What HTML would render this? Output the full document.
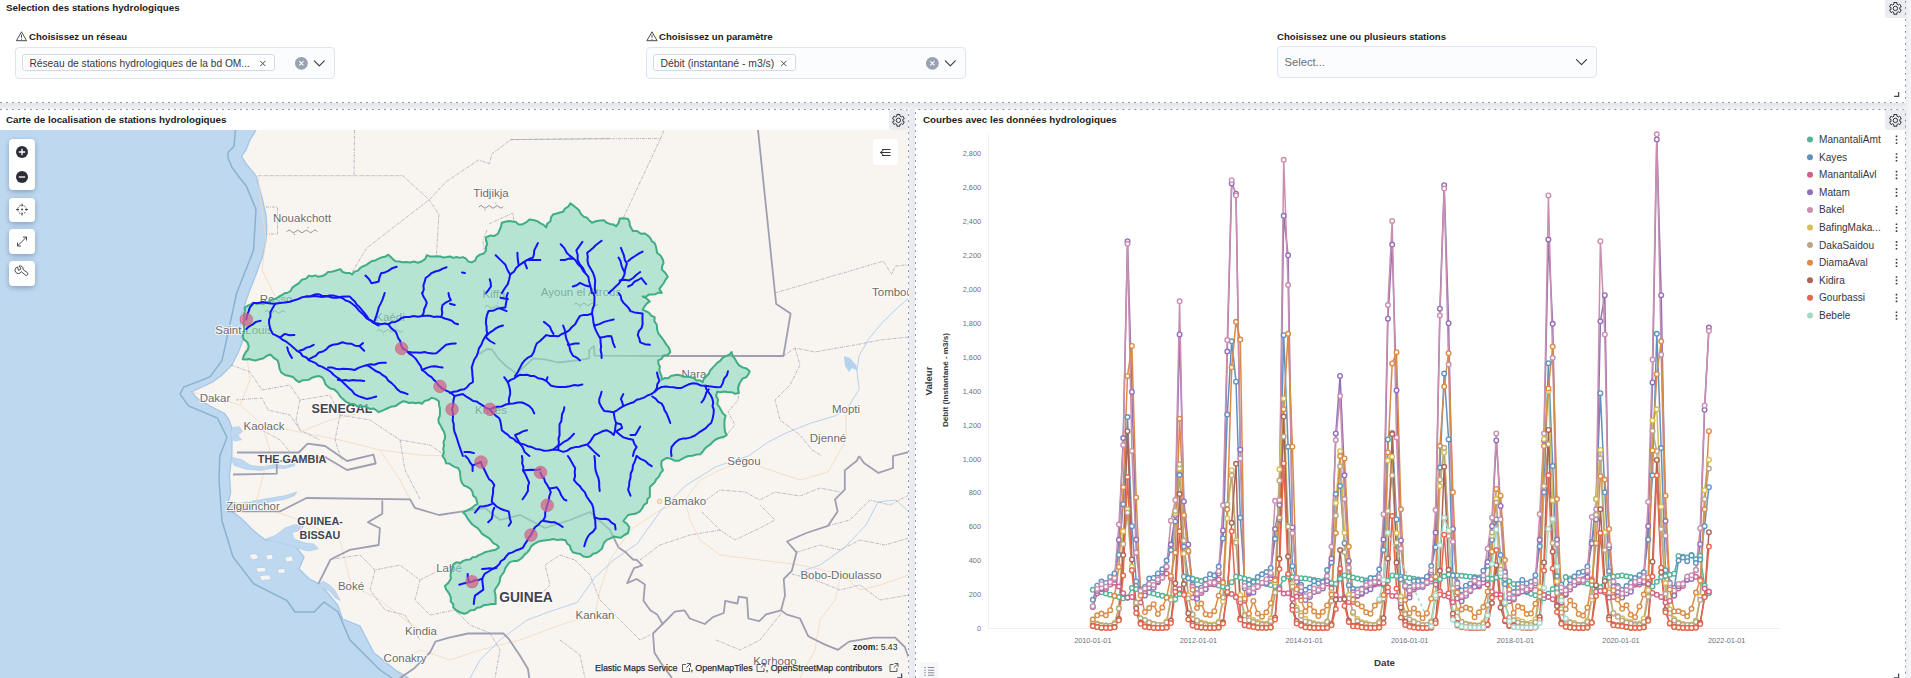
<!DOCTYPE html><html><head><meta charset="utf-8"><title>Dashboard</title><style>
html,body{margin:0;padding:0}
body{width:1911px;height:678px;overflow:hidden;background:#fff;position:relative;font-family:"Liberation Sans", sans-serif;color:#1a1c21}
.abs{position:absolute;white-space:nowrap}
.ttl{font-weight:700;font-size:9.8px;line-height:12px;color:#1a1c21}
.lbl{font-weight:700;font-size:9.6px;line-height:12px;color:#1a1c21}
.combo{position:absolute;box-sizing:border-box;height:32px;width:320px;border:1px solid #dfe4ee;border-radius:4px;background:#fbfcfd}
.pill{position:absolute;box-sizing:border-box;top:6px;left:5.5px;height:17px;border:1px solid #d3dae6;border-radius:3px;background:#fff;font-size:10.2px;line-height:15px;padding-top:0.9px;padding-left:7px;color:#343741}
.hd{position:absolute;border:0}
svg{position:absolute;left:0;top:0;overflow:visible}
.btn{position:absolute;background:#fff;border-radius:4px;box-shadow:0 1px 5px rgba(40,60,100,.22),0 3px 6px -2px rgba(40,60,100,.28)}
.gear{position:absolute;background:#eaecf0;border-radius:0 0 0 3px}
.leg{position:absolute;margin-top:0.5px;left:1819px;font-size:10.1px;line-height:12px;color:#343741;white-space:nowrap}
.tick{position:absolute;font-size:7.3px;line-height:9px;color:#69707d;white-space:nowrap}
</style></head><body>
<div class="abs" style="left:0;top:103px;width:1911px;height:6px;background:linear-gradient(#e2e4e8,#f0f1f4)"></div>
<div class="abs" style="left:909px;top:109px;width:6px;height:569px;background:#e9ebef"></div>
<div class="abs" style="left:1906px;top:0;width:5px;height:678px;background:linear-gradient(90deg,#eceef1,#f6f7f9)"></div>
<div class="abs ttl" style="left:6px;top:1.7px">Selection des stations hydrologiques</div>
<div class="abs lbl" style="left:29px;top:30.7px">Choisissez un réseau</div>
<div class="abs lbl" style="left:659px;top:30.7px">Choisissez un paramètre</div>
<div class="abs lbl" style="left:1277px;top:30.7px">Choisissez une ou plusieurs stations</div>
<div class="combo" style="left:15px;top:47px"><div class="pill" style="width:253px">Réseau de stations hydrologiques de la bd OM...</div></div>
<div class="combo" style="left:646px;top:47px"><div class="pill" style="width:143px;font-size:10.4px">Débit (instantané - m3/s)</div></div>
<div class="combo" style="left:1277px;top:46px;height:32px"><div class="abs" style="left:6.5px;top:8.8px;font-size:11.2px;line-height:13px;color:#69707d">Select...</div></div>
<div class="gear" style="left:1885px;top:0;width:20.5px;height:17.7px"></div>
<div class="abs ttl" style="left:6px;top:113.7px">Carte de localisation de stations hydrologiques</div>
<div class="gear" style="left:889px;top:110px;width:19px;height:20px"></div>
<div class="abs" style="left:0;top:130px;width:908px;height:548px;background:#bed8f0;overflow:hidden">
<svg width="909" height="548" viewBox="0 130 909 548">
<polyline points="235.4,130 234,146.4 228,152.3 228,157.5 231.7,167 239.8,178 246.3,186 256,209.4 253.5,250.4 236.7,293 222,360.4 210,377 183.7,387 180,394 188.5,406 217.4,418 227,437.4 219.8,456 219,480 222,521 233,557 253.5,583.6 287,600.5 295,612 314,612 324,602 338,612 350,640 380,670 392,678" fill="none" stroke="#8ab2cf" stroke-width="1.5"/>
<polygon points="256,130 250,140 246,150 241.5,156.5 247,165 256,175.7 260,190 263,202 266,215 266.8,226.3 266,240 263,255 256,274.5 248.7,293 246.3,300 243,310 240.3,317 241,330 242.7,341 238,353 231.8,365.2 222,375 212.6,382 200,388 192,391.7 195,396 198,399 210,406 224.6,413.4 229,420 231.8,427.8 232,442 231.8,456 229.4,475.3 230.6,492 227,507.8 241.5,518.6 253.5,530.6 265.6,540.3 280,537.8 294.4,545 304,557 299,569 309,578.8 318.5,583.6 328,593.2 337.8,605.3 342.6,619 360,626 373.5,652.4 395.4,670 408.6,678 909,678 909,130" fill="#f8f4f0"/>
<polyline points="256,130 250,140 246,150 241.5,156.5 247,165 256,175.7 260,190 263,202 266,215 266.8,226.3 266,240 263,255 256,274.5 248.7,293 246.3,300 243,310 240.3,317 241,330 242.7,341 238,353 231.8,365.2 222,375 212.6,382 200,388 192,391.7 195,396 198,399 210,406 224.6,413.4 229,420 231.8,427.8 232,442 231.8,456 229.4,475.3 230.6,492 227,507.8 241.5,518.6 253.5,530.6 265.6,540.3 280,537.8 294.4,545 304,557 299,569 309,578.8 318.5,583.6 328,593.2 337.8,605.3 342.6,619 360,626 373.5,652.4 395.4,670 408.6,678" fill="none" stroke="#a3c6e8" stroke-width="1.3"/>
<polygon points="230.6,457.2 241.5,459.6 251.1,465.6 263.1,466.8 275.2,464.4 284.8,466.1 294.4,463.2 294.9,465.6 284.8,468.5 274.0,468.0 260.7,470.4 246.3,469.2 234.2,465.6" fill="#bed8f0" stroke="#a9c9e6" stroke-width="0.6"/>
<polygon points="228.2,504.1 241.5,502.9 255.9,500.5 270.4,498.1 284.8,495.7 296.8,492.1 294.4,495.7 284.8,499.3 270.4,501.7 255.9,505.3 241.5,510.2 230.6,510.2" fill="#bed8f0" stroke="#a9c9e6" stroke-width="0.6"/>
<polygon points="265.5,539.0 275.2,535.4 284.8,528.2 294.4,524.6 304.1,525.8 299.2,530.6 292.0,533.0 294.4,539.0 304.1,542.7 313.7,543.9 318.5,548.7 308.9,551.1 299.2,548.7 289.6,545.1 280.0,542.7" fill="#bed8f0" stroke="#a9c9e6" stroke-width="0.6"/>
<polygon points="316.1,586.0 323.3,581.2 329.3,584.8 335.3,590.8 340.2,600.4 335.3,598.0 329.3,590.8 322.1,588.4" fill="#bed8f0" stroke="#a9c9e6" stroke-width="0.6"/>
<polygon points="231.8,427.8 239.1,426.6 242.7,431.4 237.9,435.0 241.5,439.8 234.2,441.0 230.6,435.0" fill="#bed8f0" stroke="#a9c9e6" stroke-width="0.6"/>
<polygon points="248.7,554.7 255.9,553.5 258.8,558.3 252.3,560.0" fill="#f8f4f0" stroke="#a9c9e6" stroke-width="0.6"/>
<polygon points="265.5,555.2 272.3,554.2 273.2,559.0 267.5,560.0" fill="#f8f4f0" stroke="#a9c9e6" stroke-width="0.6"/>
<polygon points="255.9,567.9 265.1,567.2 266.0,571.5 257.8,572.5" fill="#f8f4f0" stroke="#a9c9e6" stroke-width="0.6"/>
<polygon points="259.5,575.6 269.9,574.9 270.8,579.7 261.2,580.4" fill="#f8f4f0" stroke="#a9c9e6" stroke-width="0.6"/>
<polygon points="277.6,569.1 284.8,568.7 285.3,573.0 278.5,573.5" fill="#f8f4f0" stroke="#a9c9e6" stroke-width="0.6"/>
<polygon points="284.8,557.1 292.0,555.9 293.5,561.0 286.2,561.9" fill="#f8f4f0" stroke="#a9c9e6" stroke-width="0.6"/>
<polyline points="192,392 215,398 240,405 262,424 300,432 340,440 380,450 420,455 446,456" fill="none" stroke="#f3d9bd" stroke-width="0.8"/>
<polyline points="240,405 250,380 246,350 248,322" fill="none" stroke="#f3d9bd" stroke-width="0.8"/>
<polyline points="262,424 270,450 262,480 255,505" fill="none" stroke="#f3d9bd" stroke-width="0.8"/>
<polyline points="300,432 330,420 373,410" fill="none" stroke="#f3d9bd" stroke-width="0.8"/>
<polyline points="380,450 400,480 410,499" fill="none" stroke="#f3d9bd" stroke-width="0.8"/>
<polyline points="685,500 700,480 720,470 744,461 770,470 800,480 828,472 846,440 846,408" fill="none" stroke="#f3d9bd" stroke-width="0.8"/>
<polyline points="685,500 690,520 700,540 720,555 760,560 800,565 841,574" fill="none" stroke="#f3d9bd" stroke-width="0.8"/>
<polyline points="685,500 660,510 630,530 610,560 600,590 595,614" fill="none" stroke="#f3d9bd" stroke-width="0.8"/>
<polyline points="841,574 860,590 880,585 909,575" fill="none" stroke="#f3d9bd" stroke-width="0.8"/>
<polyline points="841,574 835,600 820,620 815,650 800,678" fill="none" stroke="#f3d9bd" stroke-width="0.8"/>
<polyline points="595,614 560,625 520,640 480,650 450,660 421,650 405,657" fill="none" stroke="#f3d9bd" stroke-width="0.8"/>
<polyline points="351,585 380,600 405,620 421,630" fill="none" stroke="#f3d9bd" stroke-width="0.8"/>
<polyline points="255,505 300,520 340,540 351,585" fill="none" stroke="#f3d9bd" stroke-width="0.8"/>
<polyline points="258,176 262,210 266,240 262,270 276,298" fill="none" stroke="#f3d9bd" stroke-width="0.8"/>
<polyline points="909,297.8 895.3,309.9 880.9,324.3 868.9,338.7 859.2,355.6 856.8,370 859.2,389.3 847.2,408.6 835.2,415.8 811.1,423 787,432.6 767.8,442.3 748.5,456" fill="none" stroke="#b5d3f0" stroke-width="1"/>
<polyline points="748.5,456 716.2,466.6 685.4,485.8 661.3,509.9 637.3,543.6 613.2,560.4 594,578.5 577.1,602.5 548.2,612.2 527,620" fill="none" stroke="#b5d3f0" stroke-width="1"/>
<polyline points="909,512 896,500 878,502 866,525 844,548 820,565 800,572" fill="none" stroke="#b5d3f0" stroke-width="1"/>
<polyline points="527,620 500,640 480,660 470,678" fill="none" stroke="#b5d3f0" stroke-width="1"/>
<polygon points="844,356 850,358 856,365 858,371 852,368 849,372 845,366" fill="#b5d3f0"/>
<polyline points="258.3,175.7 402.8,175.7 429.2,199.8 438.9,214.3 436.5,255.2" fill="none" stroke="#a9a9b8" stroke-width="0.8" stroke-dasharray="3 1 1 1"/>
<polyline points="354.6,130 354,175.7" fill="none" stroke="#a9a9b8" stroke-width="0.8" stroke-dasharray="3 1 1 1"/>
<polyline points="610,138.4 511,139.6 491.8,154 489.4,163.7 478.6,160 446,181.8 429.2,199.8 366.7,248 352.2,272" fill="none" stroke="#a9a9b8" stroke-width="0.8" stroke-dasharray="3 1 1 1"/>
<polyline points="510,139.6 660.6,138.4 664,130" fill="none" stroke="#a9a9b8" stroke-width="0.8" stroke-dasharray="3 1 1 1"/>
<polyline points="660.6,138.4 623.3,217.9" fill="none" stroke="#a9a9b8" stroke-width="0.8" stroke-dasharray="3 1 1 1"/>
<polyline points="775,293 883.3,261.2 891.7,274.4 895.3,266 909,264.8" fill="none" stroke="#a9a9b8" stroke-width="0.8" stroke-dasharray="3 1 1 1"/>
<polyline points="266,207 277.5,207 277.5,234 266.8,234" fill="none" stroke="#a9a9b8" stroke-width="0.8" stroke-dasharray="3 1 1 1"/>
<polyline points="487,230 483,240 484,250 489,237" fill="none" stroke="#a9a9b8" stroke-width="0.8" stroke-dasharray="3 1 1 1"/>
<polyline points="489,224 513,213 514,222" fill="none" stroke="#a9a9b8" stroke-width="0.8" stroke-dasharray="3 1 1 1"/>
<polyline points="783.4,356 795,348 815,352 860,344 880,340 909,337" fill="none" stroke="#a9a9b8" stroke-width="0.8" stroke-dasharray="3 1 1 1"/>
<polyline points="795,348 800,365 790,385 775,400 780,420 800,435 812,450 822,456" fill="none" stroke="#a9a9b8" stroke-width="0.8" stroke-dasharray="3 1 1 1"/>
<polyline points="740,384 738,400 728,412 735,425 722,440" fill="none" stroke="#a9a9b8" stroke-width="0.8" stroke-dasharray="3 1 1 1"/>
<polyline points="706,500 720,490 745,492 760,500 775,492 800,496 820,488 840,492" fill="none" stroke="#a9a9b8" stroke-width="0.8" stroke-dasharray="3 1 1 1"/>
<polyline points="702,512 720,530 735,540 760,528 775,520 760,505" fill="none" stroke="#a9a9b8" stroke-width="0.8" stroke-dasharray="3 1 1 1"/>
<polyline points="640,560 660,545 690,535 720,530" fill="none" stroke="#a9a9b8" stroke-width="0.8" stroke-dasharray="3 1 1 1"/>
<polyline points="231,365 250,372 262,390 290,385 300,400 330,395 340,415" fill="none" stroke="#a9a9b8" stroke-width="0.8" stroke-dasharray="3 1 1 1"/>
<polyline points="236,400 262,398 268,410 290,415 300,430 320,440" fill="none" stroke="#a9a9b8" stroke-width="0.8" stroke-dasharray="3 1 1 1"/>
<polyline points="300,400 296,420 300,430" fill="none" stroke="#a9a9b8" stroke-width="0.8" stroke-dasharray="3 1 1 1"/>
<polyline points="262,430 280,440 290,452" fill="none" stroke="#a9a9b8" stroke-width="0.8" stroke-dasharray="3 1 1 1"/>
<polyline points="340,415 335,440 342,461" fill="none" stroke="#a9a9b8" stroke-width="0.8" stroke-dasharray="3 1 1 1"/>
<polyline points="340,415 370,420 400,440 430,445 446,456" fill="none" stroke="#a9a9b8" stroke-width="0.8" stroke-dasharray="3 1 1 1"/>
<polyline points="400,440 405,470 420,499" fill="none" stroke="#a9a9b8" stroke-width="0.8" stroke-dasharray="3 1 1 1"/>
<polyline points="330.5,559.5 360,555 375,570 400,565 420,580 440,570" fill="none" stroke="#a9a9b8" stroke-width="0.8" stroke-dasharray="3 1 1 1"/>
<polyline points="375,570 370,590 385,610 405,615 420,640" fill="none" stroke="#a9a9b8" stroke-width="0.8" stroke-dasharray="3 1 1 1"/>
<polyline points="420,580 415,600 430,615 455,610 470,625 490,633" fill="none" stroke="#a9a9b8" stroke-width="0.8" stroke-dasharray="3 1 1 1"/>
<polyline points="535,600 550,585 545,565 560,555 575,560" fill="none" stroke="#a9a9b8" stroke-width="0.8" stroke-dasharray="3 1 1 1"/>
<polyline points="575,560 590,575 600,600 620,620 640,640 650,635" fill="none" stroke="#a9a9b8" stroke-width="0.8" stroke-dasharray="3 1 1 1"/>
<polyline points="490,633 500,650 495,678" fill="none" stroke="#a9a9b8" stroke-width="0.8" stroke-dasharray="3 1 1 1"/>
<polyline points="560,640 580,655 585,678" fill="none" stroke="#a9a9b8" stroke-width="0.8" stroke-dasharray="3 1 1 1"/>
<polyline points="796.6,552.3 820,545 840,550 860,540 885,545 909,538" fill="none" stroke="#a9a9b8" stroke-width="0.8" stroke-dasharray="3 1 1 1"/>
<polyline points="828,525.8 850,520 870,500 890,505 909,495" fill="none" stroke="#a9a9b8" stroke-width="0.8" stroke-dasharray="3 1 1 1"/>
<polyline points="791.8,574 815,580 840,590 860,585 880,600 909,595" fill="none" stroke="#a9a9b8" stroke-width="0.8" stroke-dasharray="3 1 1 1"/>
<polyline points="716,640 740,650 760,640 782,612.5" fill="none" stroke="#a9a9b8" stroke-width="0.8" stroke-dasharray="3 1 1 1"/>
<polyline points="758,130 775,293 776.2,304 790.6,313.5 783.4,356 670.3,356" fill="none" stroke="#9f9fb2" stroke-width="1.8" stroke-linejoin="round"/>
<polyline points="237,452.5 298.8,452.5 307.6,443.7 325,446 347,461 373.5,454.7 375.7,463.5 347,470 325,457 307.6,459 276.8,461.3 276.8,473.6 233,474.5" fill="none" stroke="#9f9fb2" stroke-width="1.8" stroke-linejoin="round"/>
<polyline points="227,511.4 280,511.4 306.5,498 410,499.3 414.8,507.8 438.9,515 463,511.4" fill="none" stroke="#9f9fb2" stroke-width="1.8" stroke-linejoin="round"/>
<polyline points="382.3,500.5 382.3,513.8 367.9,522.2 379.9,528.2 378.7,545 349.8,549.9 330.5,559.5 318.5,583.6" fill="none" stroke="#9f9fb2" stroke-width="1.8" stroke-linejoin="round"/>
<polyline points="618.5,547.5 625.7,552.3 633,559.5 636.7,560 642.2,565.4 634,568.2 627.2,583.1 636.7,579 644.9,584.5 643.5,600.8 650.3,610.3 657.1,614.4 662.6,624 653,633.5 654.4,652.5 661.2,663.4 672,678" fill="none" stroke="#9f9fb2" stroke-width="1.8" stroke-linejoin="round"/>
<polyline points="662.6,624 674.8,611.7 684.4,610.3 689.8,618.5 704.8,624 712.9,617.1 723.8,613 725.2,600.8 737.4,603.5 738.8,596.7 747,598 748.3,618.5 759.2,621.2 766,614.4 781,610.3 786.4,614.4 800,618.5 808.2,636.2 824.5,644.4 838,649.8 849,641.6 873.5,637.6 895.2,637.6 904.8,647 908.8,658" fill="none" stroke="#9f9fb2" stroke-width="1.8" stroke-linejoin="round"/>
<polyline points="859,456 856.8,460.8 844.8,470.4 844.8,489.7 835,499.3 837.6,511.4 828,525.8 806.3,533 787,541.5 796.6,552.3 794.6,560 791.8,570.9 783.7,579 785,595.4 781,610.3" fill="none" stroke="#9f9fb2" stroke-width="1.8" stroke-linejoin="round"/>
<polyline points="859,456 864,463 878.5,472.9 893,468 893,456 909,452" fill="none" stroke="#9f9fb2" stroke-width="1.8" stroke-linejoin="round"/>
<polyline points="400,678 413.6,668.8 430,652.5 435.4,641.6 449,637.6 468,633.5 503.4,633.5 508.8,638.9 519.7,655.2 527.9,668.8 529.3,678" fill="none" stroke="#9f9fb2" stroke-width="1.8" stroke-linejoin="round"/>
<polyline points="670.3,356 594.5,355.6 594,346 589.2,350.1 589.2,358.4 579.2,360.2 558,362.5 546.2,359.6 533.2,358.4 516.7,373.7 506,366 497.8,357.8 491.9,349.5 487.2,349 478.9,354.3" fill="none" stroke="#a4a4b5" stroke-width="1.8" stroke-linejoin="round"/>
<polyline points="463,511.4 485,508 500,520 520,515 545,528 570,520 590,512 610,530 618.5,547.5" fill="none" stroke="#a4a4b5" stroke-width="1.8" stroke-linejoin="round"/>
<text x="302" y="221.5" font-size="11.5" font-weight="400" fill="#6b6b6b" text-anchor="middle" stroke="#fff" stroke-width="2" stroke-opacity="0.8" paint-order="stroke" stroke-linejoin="round">Nouakchott</text>
<text x="491" y="196.5" font-size="11.5" font-weight="400" fill="#6b6b6b" text-anchor="middle" stroke="#fff" stroke-width="2" stroke-opacity="0.8" paint-order="stroke" stroke-linejoin="round">Tidjikja</text>
<text x="276" y="302.5" font-size="11.5" font-weight="400" fill="#6b6b6b" text-anchor="middle" stroke="#fff" stroke-width="2" stroke-opacity="0.8" paint-order="stroke" stroke-linejoin="round">Rosso</text>
<text x="244" y="333.5" font-size="11.5" font-weight="400" fill="#6b6b6b" text-anchor="middle" stroke="#fff" stroke-width="2" stroke-opacity="0.8" paint-order="stroke" stroke-linejoin="round">Saint-Louis</text>
<text x="390" y="321.0" font-size="11.5" font-weight="400" fill="#6b6b6b" text-anchor="middle" stroke="#fff" stroke-width="2" stroke-opacity="0.8" paint-order="stroke" stroke-linejoin="round">Kaédi</text>
<text x="494" y="298.0" font-size="11.5" font-weight="400" fill="#6b6b6b" text-anchor="middle" stroke="#fff" stroke-width="2" stroke-opacity="0.8" paint-order="stroke" stroke-linejoin="round">Kiffa</text>
<text x="581" y="295.5" font-size="11.5" font-weight="400" fill="#6b6b6b" text-anchor="middle" stroke="#fff" stroke-width="2" stroke-opacity="0.8" paint-order="stroke" stroke-linejoin="round">Ayoun el Atrous</text>
<text x="694" y="377.5" font-size="11.5" font-weight="400" fill="#6b6b6b" text-anchor="middle" stroke="#fff" stroke-width="2" stroke-opacity="0.8" paint-order="stroke" stroke-linejoin="round">Nara</text>
<text x="215" y="401.5" font-size="11.5" font-weight="400" fill="#6b6b6b" text-anchor="middle" stroke="#fff" stroke-width="2" stroke-opacity="0.8" paint-order="stroke" stroke-linejoin="round">Dakar</text>
<text x="264" y="429.5" font-size="11.5" font-weight="400" fill="#6b6b6b" text-anchor="middle" stroke="#fff" stroke-width="2" stroke-opacity="0.8" paint-order="stroke" stroke-linejoin="round">Kaolack</text>
<text x="253" y="509.5" font-size="11.5" font-weight="400" fill="#6b6b6b" text-anchor="middle" stroke="#fff" stroke-width="2" stroke-opacity="0.8" paint-order="stroke" stroke-linejoin="round">Ziguinchor</text>
<text x="351" y="589.5" font-size="11.5" font-weight="400" fill="#6b6b6b" text-anchor="middle" stroke="#fff" stroke-width="2" stroke-opacity="0.8" paint-order="stroke" stroke-linejoin="round">Boké</text>
<text x="449" y="572.0" font-size="11.5" font-weight="400" fill="#6b6b6b" text-anchor="middle" stroke="#fff" stroke-width="2" stroke-opacity="0.8" paint-order="stroke" stroke-linejoin="round">Labé</text>
<text x="421" y="634.5" font-size="11.5" font-weight="400" fill="#6b6b6b" text-anchor="middle" stroke="#fff" stroke-width="2" stroke-opacity="0.8" paint-order="stroke" stroke-linejoin="round">Kindia</text>
<text x="405" y="661.5" font-size="11.5" font-weight="400" fill="#6b6b6b" text-anchor="middle" stroke="#fff" stroke-width="2" stroke-opacity="0.8" paint-order="stroke" stroke-linejoin="round">Conakry</text>
<text x="595" y="618.5" font-size="11.5" font-weight="400" fill="#6b6b6b" text-anchor="middle" stroke="#fff" stroke-width="2" stroke-opacity="0.8" paint-order="stroke" stroke-linejoin="round">Kankan</text>
<text x="491" y="414.0" font-size="11.5" font-weight="400" fill="#6b6b6b" text-anchor="middle" stroke="#fff" stroke-width="2" stroke-opacity="0.8" paint-order="stroke" stroke-linejoin="round">Kayes</text>
<text x="685" y="504.5" font-size="11.5" font-weight="400" fill="#6b6b6b" text-anchor="middle" stroke="#fff" stroke-width="2" stroke-opacity="0.8" paint-order="stroke" stroke-linejoin="round">Bamako</text>
<text x="744" y="465.0" font-size="11.5" font-weight="400" fill="#6b6b6b" text-anchor="middle" stroke="#fff" stroke-width="2" stroke-opacity="0.8" paint-order="stroke" stroke-linejoin="round">Ségou</text>
<text x="846" y="412.5" font-size="11.5" font-weight="400" fill="#6b6b6b" text-anchor="middle" stroke="#fff" stroke-width="2" stroke-opacity="0.8" paint-order="stroke" stroke-linejoin="round">Mopti</text>
<text x="828" y="441.5" font-size="11.5" font-weight="400" fill="#6b6b6b" text-anchor="middle" stroke="#fff" stroke-width="2" stroke-opacity="0.8" paint-order="stroke" stroke-linejoin="round">Djenné</text>
<text x="841" y="578.5" font-size="11.5" font-weight="400" fill="#6b6b6b" text-anchor="middle" stroke="#fff" stroke-width="2" stroke-opacity="0.8" paint-order="stroke" stroke-linejoin="round">Bobo-Dioulasso</text>
<text x="775" y="664.5" font-size="11.5" font-weight="400" fill="#6b6b6b" text-anchor="middle" stroke="#fff" stroke-width="2" stroke-opacity="0.8" paint-order="stroke" stroke-linejoin="round">Korhogo</text>
<text x="872" y="295.5" font-size="11.5" font-weight="400" fill="#6b6b6b" text-anchor="start" stroke="#fff" stroke-width="2" stroke-opacity="0.8" paint-order="stroke" stroke-linejoin="round">Tombouctou</text>
<text x="342" y="412.9" font-size="12.6" font-weight="700" fill="#43434f" text-anchor="middle" stroke="#fff" stroke-width="2" stroke-opacity="0.8" paint-order="stroke" stroke-linejoin="round">SENEGAL</text>
<text x="292" y="463.3" font-size="10.8" font-weight="700" fill="#43434f" text-anchor="middle" stroke="#fff" stroke-width="2" stroke-opacity="0.8" paint-order="stroke" stroke-linejoin="round">THE GAMBIA</text>
<text x="320" y="525.3" font-size="10.8" font-weight="700" fill="#43434f" text-anchor="middle" stroke="#fff" stroke-width="2" stroke-opacity="0.8" paint-order="stroke" stroke-linejoin="round">GUINEA-</text>
<text x="320" y="539.3" font-size="10.8" font-weight="700" fill="#43434f" text-anchor="middle" stroke="#fff" stroke-width="2" stroke-opacity="0.8" paint-order="stroke" stroke-linejoin="round">BISSAU</text>
<text x="526" y="602.3" font-size="13.8" font-weight="700" fill="#43434f" text-anchor="middle" stroke="#fff" stroke-width="2" stroke-opacity="0.8" paint-order="stroke" stroke-linejoin="round">GUINEA</text>
<path d="M287.0,231.5 q2.1,-3 4.3,0 q2.1,2.5 4.3,0 q2.1,-3 4.3,0 q2.1,2.5 4.3,0 q2.1,-3 4.3,0 q2.1,2.5 4.3,0 q2.1,-3 4.3,0" fill="none" stroke="#868686" stroke-width="0.9" stroke-linecap="round"/><circle cx="294.5" cy="234.5" r="0.6" fill="#868686"/><circle cx="308.0" cy="227.5" r="0.6" fill="#868686"/>
<path d="M479.0,207 q2.0,-3 4.0,0 q2.0,2.5 4.0,0 q2.0,-3 4.0,0 q2.0,2.5 4.0,0 q2.0,-3 4.0,0 q2.0,2.5 4.0,0" fill="none" stroke="#868686" stroke-width="0.9" stroke-linecap="round"/><circle cx="485.0" cy="210" r="0.6" fill="#868686"/><circle cx="495.8" cy="203" r="0.6" fill="#868686"/>
<path d="M265.0,312 q2.0,-3 4.0,0 q2.0,2.5 4.0,0 q2.0,-3 4.0,0 q2.0,2.5 4.0,0 q2.0,-3 4.0,0" fill="none" stroke="#868686" stroke-width="0.9" stroke-linecap="round"/><circle cx="270.0" cy="315" r="0.6" fill="#868686"/><circle cx="279.0" cy="308" r="0.6" fill="#868686"/>
<path d="M377.0,331 q2.2,-3 4.3,0 q2.2,2.5 4.3,0 q2.2,-3 4.3,0 q2.2,2.5 4.3,0 q2.2,-3 4.3,0 q2.2,2.5 4.3,0" fill="none" stroke="#868686" stroke-width="0.9" stroke-linecap="round"/><circle cx="383.5" cy="334" r="0.6" fill="#868686"/><circle cx="395.2" cy="327" r="0.6" fill="#868686"/>
<path d="M485.0,307 q2.2,-3 4.5,0 q2.2,2.5 4.5,0 q2.2,-3 4.5,0 q2.2,2.5 4.5,0" fill="none" stroke="#868686" stroke-width="0.9" stroke-linecap="round"/><circle cx="489.5" cy="310" r="0.6" fill="#868686"/><circle cx="497.6" cy="303" r="0.6" fill="#868686"/>
<path d="M574.0,304.5 q2.0,-3 4.0,0 q2.0,2.5 4.0,0 q2.0,-3 4.0,0 q2.0,2.5 4.0,0 q2.0,-3 4.0,0 q2.0,2.5 4.0,0" fill="none" stroke="#868686" stroke-width="0.9" stroke-linecap="round"/><circle cx="580.0" cy="307.5" r="0.6" fill="#868686"/><circle cx="590.8" cy="300.5" r="0.6" fill="#868686"/>
<circle cx="659.5" cy="501.5" r="2.2" fill="#f5e9d8" stroke="#d9b78c" stroke-width="0.8"/>
<polygon points="245.1,307.4 247.8,305.7 250.8,304.3 253.5,302.6 256.6,303.9 259.9,303.3 263.1,303.8 266.1,302.6 269.2,301.6 271.9,299.6 275.2,299.0 278.4,297.0 281.8,295.2 284.8,293.0 287.2,293.0 290.6,291.0 292.6,287.3 295.9,285.1 299.2,282.9 301.9,279.7 306.1,278.6 308.9,275.6 312.0,276.4 315.4,275.4 318.5,276.8 322.2,276.1 325.4,274.5 328.1,272.0 331.8,271.7 335.3,270.8 340.2,269.1 342.6,272.0 345.7,273.0 349.2,272.9 352.2,274.4 354.5,271.6 358.0,270.6 360.3,267.8 363.3,266.2 366.6,264.8 369.2,262.9 371.9,261.0 375.3,260.4 378.1,258.9 381.1,257.6 385.0,256.8 388.3,254.7 390.7,256.9 392.9,259.3 395.5,261.2 399.1,261.5 402.7,262.2 406.4,262.0 410.0,262.4 414.0,261.5 418.1,262.7 422.0,261.2 425.3,258.9 426.8,255.2 430.1,256.4 433.5,256.6 437.0,256.2 440.4,256.5 443.7,257.6 446.9,257.1 450.1,256.5 453.3,257.9 456.5,257.0 459.7,257.9 462.9,257.1 466.0,258.7 468.2,261.5 471.7,262.4 475.1,260.6 476.8,256.8 479.9,254.7 483.8,253.5 486.1,250.4 486.0,247.1 487.2,243.8 485.9,240.4 486.1,237.1 490.2,235.6 494.5,235.9 498.1,233.5 499.6,230.0 501.1,226.5 501.8,222.7 505.3,221.8 508.9,221.0 512.6,221.5 515.9,222.1 518.7,224.4 522.2,224.4 526.1,222.4 529.4,219.5 534.2,220.3 537.7,221.4 540.5,223.4 543.7,224.9 546.3,227.5 547.2,223.7 550.5,221.2 551.1,217.2 553.5,214.2 556.7,213.5 559.9,212.5 563.1,211.8 565.0,208.6 568.4,206.5 570.4,203.4 575.2,207.0 578.8,210.1 581.2,214.2 583.7,216.6 587.1,217.8 589.4,220.4 592.0,222.7 595.9,221.3 600.0,220.6 604.1,220.3 606.6,222.7 609.8,223.9 613.3,224.4 616.1,226.3 618.7,222.8 619.7,218.6 623.9,218.2 628.1,219.1 629.5,222.0 629.8,225.4 631.4,228.2 632.9,231.1 637.1,231.0 640.8,233.8 645.0,233.5 647.8,235.5 650.2,237.9 651.8,241.1 654.6,243.1 655.8,246.2 656.6,249.5 657.0,252.8 660.7,255.8 663.0,260.0 663.5,263.3 662.0,266.4 661.8,269.6 665.2,272.8 667.8,276.8 665.5,279.7 663.8,283.0 661.6,285.9 659.4,288.9 661.8,293.0 658.4,292.6 655.4,294.2 652.2,294.6 648.9,294.6 645.9,296.7 642.6,296.6 646.6,298.4 649.8,301.4 646.7,303.6 644.5,306.5 642.6,309.8 645.9,311.2 649.0,312.9 651.3,315.7 654.6,317.1 654.4,321.3 656.9,325.0 657.0,329.1 658.0,332.6 659.9,335.5 662.2,338.2 664.2,341.1 666.4,344.6 669.0,347.9 670.3,352.0 667.9,354.9 663.7,355.4 661.6,358.8 658.2,360.4 658.4,363.7 659.9,366.7 659.3,370.2 660.4,373.3 661.6,376.4 661.8,379.7 664.7,378.0 668.2,378.2 670.9,375.9 674.2,375.2 677.5,374.8 680.8,375.5 684.0,376.8 687.4,376.8 690.7,377.2 693.9,378.0 696.4,380.5 699.9,380.3 702.7,382.1 703.9,378.7 706.4,376.3 708.8,373.8 710.2,370.5 712.5,367.9 714.9,365.4 717.2,362.8 720.2,360.8 722.5,357.8 725.7,356.1 729.2,354.8 731.6,352.0 732.5,355.8 734.9,358.8 736.7,362.1 738.9,365.2 742.4,367.4 746.5,368.5 749.7,371.2 748.3,374.5 746.2,377.2 742.5,378.6 740.7,381.6 738.9,384.5 737.9,388.7 738.9,392.9 735.2,393.8 731.7,392.2 728.0,392.3 724.5,391.6 720.8,392.3 717.2,391.7 716.1,395.7 718.1,399.7 717.2,403.7 719.2,406.8 721.0,410.0 722.8,413.3 725.6,415.8 724.7,418.9 724.4,422.1 724.4,425.4 724.6,428.8 725.1,432.0 726.8,435.0 724.1,436.7 720.9,437.5 717.8,438.5 714.9,440.0 712.4,442.2 710.1,444.7 707.1,446.6 704.6,448.9 702.6,451.8 700.3,454.3 696.3,454.6 692.3,455.7 688.3,456.0 685.0,457.4 681.8,459.0 678.7,460.8 674.5,460.7 670.7,458.6 666.6,457.9 661.8,460.8 661.1,464.1 661.8,467.3 663.0,470.4 660.5,473.1 659.0,476.6 656.3,479.2 654.6,482.5 652.1,484.8 649.8,487.3 649.9,492.1 649.8,496.9 647.4,499.2 647.0,502.9 643.9,504.8 642.6,507.8 639.6,511.6 635.3,513.8 631.7,514.2 628.1,515.0 625.7,518.0 623.3,521.0 626.7,523.6 629.3,527.0 628.1,533.0 624.3,535.0 620.9,537.8 617.3,537.2 613.7,536.6 610.4,538.4 606.8,539.9 604.1,542.7 602.9,545.8 601.8,548.8 599.2,551.1 596.4,553.0 593.0,553.7 590.5,556.2 587.2,557.1 583.4,556.6 580.3,553.9 576.5,553.2 572.8,552.3 570.9,549.3 569.9,545.8 567.0,543.4 565.5,540.2 561.5,539.4 557.4,540.1 553.5,539.0 549.9,539.7 546.3,540.2 542.1,540.8 538.0,541.8 534.2,543.9 531.1,546.4 529.4,549.9 527.2,552.5 524.5,554.6 522.5,557.4 519.8,559.5 516.8,561.1 513.4,561.1 510.2,561.9 507.6,564.7 505.5,567.9 504.2,571.5 502.2,574.5 500.1,577.5 499.8,581.4 498.4,584.7 496.2,587.6 494.5,590.8 495.3,594.1 495.7,597.3 495.6,600.7 495.7,604.0 491.7,604.1 487.7,604.8 483.7,605.2 480.7,607.2 477.0,607.8 474.1,610.1 470.5,610.3 467.7,612.6 464.4,613.7 460.2,612.5 456.5,610.5 453.3,607.6 453.3,604.2 450.7,601.4 450.9,598.0 449.8,594.8 448.0,591.9 446.0,589.2 444.9,586.0 448.4,582.8 450.9,578.8 450.5,575.0 451.3,571.4 452.6,567.9 453.3,564.3 456.4,562.3 460.2,563.1 463.2,560.9 466.5,559.7 470.1,559.5 472.6,557.2 476.0,556.9 478.7,555.1 481.8,554.0 484.6,552.3 488.3,551.4 492.0,550.5 495.7,549.7 499.0,547.5 496.7,544.8 493.3,543.1 491.1,540.3 488.5,537.8 485.2,535.9 482.1,533.8 479.8,530.6 477.3,527.8 474.1,525.8 471.4,523.6 469.4,520.8 467.3,518.1 465.7,515.0 463.2,512.6 466.1,510.9 469.0,509.4 472.0,508.0 474.4,505.6 477.4,504.1 476.8,500.9 475.8,497.8 473.0,495.4 472.6,492.1 470.5,489.0 467.5,486.9 463.9,485.5 461.7,482.5 460.7,478.9 460.2,475.2 459.9,471.4 458.1,468.0 455.0,467.1 452.2,465.5 449.4,463.6 446.1,463.2 444.9,459.3 442.5,456.0 443.9,452.6 443.2,449.0 444.0,445.5 443.5,441.9 445.0,438.6 444.9,435.0 444.0,431.7 442.2,428.9 440.8,425.8 438.9,423.0 438.3,419.4 439.8,415.8 440.0,412.1 440.0,408.5 439.0,404.9 438.9,401.3 435.5,398.9 431.6,397.7 428.6,400.0 424.7,400.9 422.0,403.7 418.9,402.5 415.6,403.2 412.4,402.5 409.1,403.0 405.9,401.8 402.7,401.3 399.0,403.6 395.5,406.1 391.1,406.7 387.1,408.5 382.9,410.4 378.7,412.2 373.9,408.5 369.7,408.9 365.9,406.6 361.8,406.6 357.6,406.6 354.0,404.0 349.8,403.7 346.2,401.9 343.2,399.2 340.2,396.5 337.6,392.5 334.1,389.3 330.8,388.8 328.1,386.9 325.4,384.1 324.1,380.4 322.1,377.2 318.5,376.0 315.1,376.8 311.8,377.8 308.9,379.7 305.6,380.1 302.2,380.3 299.2,382.1 296.0,380.1 293.3,377.2 289.6,376.0 285.0,375.0 281.2,372.4 279.4,368.6 278.9,364.4 277.6,360.4 273.7,357.8 270.4,354.4 266.5,356.0 263.1,358.5 259.4,359.2 255.9,360.4 252.6,360.1 249.4,359.0 246.0,359.4 242.7,359.2 243.8,355.7 245.5,352.5 247.9,349.6 248.7,346.0 247.4,342.3 244.2,339.9 242.7,336.3 243.8,332.8 244.3,329.2 243.7,325.5 243.9,321.9 244.4,318.3 243.8,314.6 244.9,311.0" fill="#88d8be" fill-opacity="0.6" stroke="#40ad85" stroke-width="2" stroke-linejoin="round"/>
<g fill="none" stroke="#1212fb" stroke-width="2" stroke-linejoin="round" stroke-linecap="round">
<polyline points="246.3,319.5 247.0,315.3 248.6,311.4 249.9,307.4 253.5,303.1 258.3,303.0 263.1,302.1 267.1,303.0 271.1,303.6 275.2,303.8 280.0,303.1 284.8,302.6 289.7,301.8 294.4,300.2 298.4,299.0 302.3,297.2 306.5,296.6 310.5,296.5 314.5,296.0 318.5,296.6 322.2,296.9 325.8,296.6 329.3,295.5 332.9,295.4 337.8,296.6 342.6,298.3 345.6,300.5 349.2,301.6 352.2,303.8 356.1,307.1 359.4,311.1 363.3,314.4 366.6,318.3 370.4,320.5 373.9,323.1 377.5,323.6 381.0,324.3 384.7,323.6 388.3,324.3 391.4,328.4 395.5,331.5 397.0,334.7 398.2,338.2 400.3,341.1 401.1,344.9 402.7,348.4 406.2,350.4 409.0,353.4 412.4,355.6 415.8,358.9 418.4,362.8 420.8,366.1 422.0,370.0 425.3,372.3 428.2,375.1 431.6,377.2 434.0,380.1 436.8,382.6 438.9,385.7 441.8,388.1 445.0,390.2 448.5,391.7 451.7,393.6 454.5,396.0 458.7,395.0 462.9,394.1 466.4,396.7 470.1,398.9 473.1,401.0 476.8,401.6 479.8,403.7 483.1,405.6 486.2,408.0 489.9,409.3"/>
<polyline points="275.2,303.8 272.7,308.0 270.4,312.3 270.4,316.3 269.0,320.2 269.2,324.3 270.4,329.3 272.8,333.9 276.4,335.7 280.0,337.5 282.7,339.9 286.0,341.5 288.9,343.7 291.7,346.0 294.4,348.4 297.1,351.0 300.5,352.9 302.7,356.1 306.4,357.5 308.9,360.4 312.3,361.6 315.6,363.1 318.3,365.5 321.8,366.6 324.9,368.4 328.1,370.0 331.2,372.2 333.8,375.0 336.9,377.2 340.0,379.4 342.6,382.1 345.7,385.0 348.8,387.9 352.0,390.7 354.6,394.1 358.4,396.1 362.5,397.5 366.6,398.9 371.5,397.9 376.3,396.5"/>
<polyline points="246.3,329.1 249.2,326.3 252.8,324.4 255.9,321.9 260.7,320.7"/>
<polyline points="280.0,337.5 284.8,333.9 289.5,335.2 294.4,335.1"/>
<polyline points="287.2,347.2 288.2,351.1 289.9,354.6 292.0,358.0"/>
<polyline points="299.2,350.8 303.0,349.8 306.4,347.6 310.2,346.7 313.7,344.8"/>
<polyline points="308.9,359.2 312.5,357.4 316.0,355.6 318.8,352.4 322.9,351.5 326.3,349.3 329.2,346.3 332.9,344.8 337.9,344.0 342.6,342.3 346.7,343.6 351.1,343.7 355.1,345.7 359.4,346.0 364.2,350.8"/>
<polyline points="359.4,346.0 363.0,343.1"/>
<polyline points="328.1,367.6 331.9,367.4 335.6,368.7 339.4,369.2 343.3,368.8 347.1,369.0 350.9,369.2 354.6,370.0 358.4,367.9 362.5,366.4 366.6,365.2 370.4,364.3 374.4,364.7 378.1,363.3 382.0,362.8 385.9,362.8"/>
<polyline points="366.6,365.2 370.0,366.9 373.1,369.2 376.2,371.3 379.8,372.7 382.7,375.2 385.9,377.2 388.3,380.6 391.6,383.1 394.5,385.9 397.1,389.1 400.3,391.7 404.0,392.8 407.6,394.1"/>
<polyline points="337.8,379.7 341.5,380.5 345.3,379.9 349.1,380.7 352.9,380.0 356.7,380.5 360.4,380.4 364.2,380.9"/>
<polyline points="306.5,296.6 310.6,296.2 314.4,294.6 318.5,294.2 321.9,295.7 325.7,296.0 329.3,296.8 332.9,297.8 337.1,297.7 341.3,296.7 345.5,296.5 349.8,296.6 352.3,299.2 354.9,301.6 356.8,304.7 359.5,307.1 361.8,309.8 364.3,312.9 366.8,316.1 369.0,319.5 372.4,321.2 375.3,323.8 378.7,325.5"/>
<polyline points="373.9,323.1 375.1,319.2 376.5,315.3 377.7,311.4 378.7,307.4 380.5,303.9 382.2,300.4 383.5,296.7 384.7,293.0"/>
<polyline points="388.3,324.3 391.4,322.3 395.3,321.9 398.6,320.3 401.6,317.9 405.2,317.1 409.4,316.9 413.6,316.1 417.8,316.7 422.0,315.9 423.7,312.7 424.1,309.2 425.7,306.0 426.8,302.6 425.2,299.4 423.3,296.3 422.0,293.0"/>
<polyline points="422.0,315.9 425.9,315.8 429.8,315.8 433.6,316.9 437.5,316.5 441.3,317.1 444.8,318.5 448.5,319.5 451.9,320.7 454.6,323.3 458.1,324.3"/>
<polyline points="441.3,317.1 442.3,313.1 441.7,309.0 442.5,305.0 446.4,302.1 450.9,300.2 449.2,296.8 448.5,293.0"/>
<polyline points="408.8,352.0 412.7,352.6 416.7,352.5 420.6,352.8 424.6,352.0 428.5,353.1 432.4,353.4 436.4,353.2 439.6,350.4 442.9,347.6 446.1,344.8 450.9,343.8 455.7,343.5"/>
<polyline points="422.0,370.0 426.7,367.9 431.6,366.4 435.3,366.3 438.9,367.1 442.5,367.6"/>
<polyline points="454.5,396.0 453.4,400.4 453.3,404.9 452.1,409.3 453.0,412.9 453.0,416.7 452.7,420.4 453.7,424.1 453.8,427.8 454.4,431.6 455.8,435.0 457.0,438.6 458.1,442.2 459.2,445.7 460.4,449.1 461.7,452.6 462.9,456.0"/>
<polyline points="396.7,266.7 392.2,268.2 388.3,270.8 384.8,272.4 381.1,273.2 379.5,277.3 378.7,281.6 375.1,282.4 371.5,283.3 369.0,279.0 365.4,275.6"/>
<polyline points="446.6,267.2 442.8,268.6 439.2,270.5 435.2,271.5 431.6,273.1 428.7,275.7 425.6,278.0 424.7,281.7 423.4,285.4 423.8,289.4 422.5,293.0"/>
<polyline points="465.3,456.0 468.2,458.9 470.1,462.5 472.6,465.6 476.7,463.7 481.0,462.0 482.0,465.6 483.9,468.7 485.5,472.0 487.0,475.3 488.9,478.9 492.0,481.5 494.2,484.9 493.1,489.0 493.1,493.3 492.2,497.5 491.8,501.7 496.6,506.5 500.4,508.7 504.5,510.2 508.7,511.4 509.4,515.0 509.9,518.7 511.1,522.2 508.7,525.8"/>
<polyline points="472.6,465.6 472.6,470.9"/>
<polyline points="491.8,504.1 487.9,505.5 483.9,506.3 479.8,506.5 477.5,509.6 475.0,512.6"/>
<polyline points="494.2,507.8 492.8,511.3 492.5,515.0 491.8,518.6 488.2,522.2"/>
<polyline points="540.4,472.4 541.6,475.8 544.1,478.5 545.1,482.0 547.2,484.9 549.2,488.4 550.8,492.1 549.3,496.4 548.6,501.0 547.2,505.3 546.2,508.9 545.2,512.5 545.2,516.3 543.6,519.8 540.6,522.0 538.2,525.0 535.1,527.0 533.0,531.0 531.0,535.0 528.6,537.9 526.9,541.1 524.8,544.2 523.1,547.5 519.6,549.3 515.9,550.5 512.5,552.4 508.7,553.5 506.3,556.1 504.2,559.1 501.0,561.0 499.2,564.3 496.6,566.7 492.5,569.0 488.6,571.5 484.6,573.9 482.2,578.8 478.9,579.9 475.3,580.2 472.1,581.7 467.8,582.5 463.5,583.4 459.3,584.8"/>
<polyline points="482.2,578.8 482.5,582.4 482.9,586.0 483.4,589.6 479.2,592.6 475.0,595.6 474.2,599.8 473.8,604.0"/>
<polyline points="496.6,567.9 493.1,568.8 489.4,568.3 485.8,568.7 482.2,569.1"/>
<polyline points="467.7,573.9 467.7,577.6 468.9,581.2"/>
<polyline points="543.6,521.0 547.2,521.5 550.8,522.2 554.4,522.2 558.8,524.3 562.8,527.0"/>
<polyline points="549.6,488.5 553.2,487.9 556.8,487.3 559.5,491.1 561.3,495.5 564.0,499.3 566.4,500.5"/>
<polyline points="521.9,456.0 522.5,459.6 522.1,463.2 523.4,466.8 523.1,470.4 525.4,474.3 527.2,478.4 529.1,482.5 528.0,486.6 527.9,490.9 525.4,495.2 522.6,499.3"/>
<polyline points="523.1,470.4 527.4,470.0 531.7,469.7 536.1,470.1 540.4,469.2"/>
<polyline points="495.7,255.2 498.9,258.4 502.2,261.6 505.4,264.8 506.7,268.2 508.2,271.4 510.2,274.4 509.2,279.3 507.8,284.1 505.7,287.0 503.7,289.9 501.8,293.0"/>
<polyline points="537.9,243.1 536.1,246.8 534.2,250.4 534.0,254.1 533.0,257.6 529.4,258.8 526.1,260.7 522.9,262.7 519.8,264.8 516.3,267.7 513.9,271.7 510.2,274.4"/>
<polyline points="517.4,252.8 517.6,256.8 518.0,260.8 518.6,264.8"/>
<polyline points="527.0,260.0 531.4,260.1 535.9,260.0 540.3,260.0"/>
<polyline points="524.6,262.4 527.0,268.4"/>
<polyline points="489.7,279.2 490.7,282.8 490.9,286.5 488.6,289.8 486.1,293.0"/>
<polyline points="560.7,244.3 564.3,248.1 566.7,252.8 569.4,255.4 572.3,257.6 575.2,260.0 577.8,264.0 581.2,267.2 583.1,270.8 585.8,273.7 588.4,276.8 589.0,280.9 590.1,284.9 591.1,289.0 592.0,293.0"/>
<polyline points="560.7,260.0 564.8,260.0 568.7,258.6 572.8,258.8"/>
<polyline points="582.4,241.9 579.4,246.1 576.4,250.4 577.7,255.1 577.6,260.0 579.7,264.2 582.8,267.8 584.8,272.0"/>
<polyline points="601.6,240.7 598.6,243.0 595.7,245.3 593.0,248.0 590.1,250.4 587.2,252.8 587.8,256.8 587.5,260.8 588.4,264.8 590.7,268.7 592.9,272.5 594.4,276.8 595.2,280.8 594.9,284.9 594.8,289.0 595.6,293.0"/>
<polyline points="572.8,286.5 576.7,285.2 580.0,282.9 584.6,285.2 589.6,286.5"/>
<polyline points="620.9,247.9 622.5,251.8 624.0,255.7 624.8,259.9 626.9,263.6 625.8,267.1 624.9,270.7 624.5,274.4 623.0,277.9 620.6,280.9 618.5,284.1 615.2,287.0 612.1,290.1 608.9,293.0"/>
<polyline points="642.6,251.6 638.7,253.6 635.1,256.0 631.4,258.3 628.1,261.2"/>
<polyline points="618.5,257.6 620.5,261.0 621.3,264.9 622.6,268.5 624.5,272.0"/>
<polyline points="640.2,272.0 636.5,274.7 633.2,278.0 629.3,280.4 624.5,279.8 619.7,280.4"/>
<polyline points="646.2,284.1 643.7,281.1 641.4,278.0 638.0,280.0 634.4,281.7 631.8,284.9 628.1,286.5"/>
<polyline points="462.0,272.5 464.9,273.0"/>
<polyline points="489.7,409.3 492.6,412.6 495.7,415.6 499.3,418.2 500.6,422.1 501.2,426.1 501.8,430.2 504.6,432.6 507.7,434.6 510.2,437.4 513.7,438.9 516.4,441.7 519.8,443.4 523.9,444.4 527.7,446.2 531.8,447.1 535.7,448.9 539.9,449.4 543.9,450.7 548.7,450.4 553.5,449.5 558.5,450.1 563.1,451.9 567.3,450.7 571.0,448.2 575.2,447.1 579.3,446.7 583.2,445.4 587.2,444.6 590.1,441.8 592.2,438.4 594.4,435.0 598.4,433.4 602.3,431.3 606.5,430.2 610.4,432.1 613.7,435.0 614.9,431.1 615.4,427.0 616.1,423.0 614.9,419.5 614.2,415.9 613.7,412.2 617.0,410.3 620.1,408.1 623.3,406.1 626.7,404.7 630.1,403.3 633.6,402.2 636.6,399.7 640.2,398.9 644.0,397.6 647.5,395.5 651.3,394.1 654.6,391.7 657.9,388.9 661.8,386.9 665.7,386.5 669.5,387.1 673.4,387.2 677.2,387.9 681.1,388.1 685.0,386.2 688.8,384.3 693.1,383.3 697.2,383.8 701.0,385.5 705.2,385.7 706.5,389.3 708.6,392.4 710.9,395.5 712.4,398.9 713.2,402.5 712.5,406.2 713.8,409.7 713.6,413.4 712.7,418.3 711.2,423.0 708.3,425.3 705.8,428.2 702.7,430.2 698.7,432.7 695.0,435.5 690.7,437.4 686.7,438.4 682.6,438.6 678.7,439.8 674.7,443.1 671.5,447.1 671.0,451.6 671.5,456.0"/>
<polyline points="705.2,385.7 709.1,386.3 713.0,386.8 716.9,387.2 720.8,386.9 722.8,383.1 724.0,378.9 726.8,375.4 728.0,371.2"/>
<polyline points="708.8,389.3 706.4,392.3 705.3,396.0 703.8,399.4 701.5,402.5"/>
<polyline points="654.6,391.7 656.8,388.4 657.3,384.3 659.4,380.9 657.9,376.7 657.0,372.4"/>
<polyline points="652.2,396.5 655.6,398.6 658.2,401.8 661.8,403.7 663.6,406.9 664.6,410.4 666.6,413.4 668.5,418.2 670.3,423.0"/>
<polyline points="616.1,423.0 620.9,424.2 622.1,427.8 616.1,431.4 619.6,434.5 623.3,437.4 628.1,438.7 632.9,439.8 634.3,443.7 636.6,447.1 634.1,451.3 632.9,456.0"/>
<polyline points="640.2,426.6 637.8,430.8 635.3,435.0 630.5,435.0"/>
<polyline points="613.7,412.2 608.9,411.4 604.1,410.9 601.3,406.9 599.2,402.5 599.3,398.8 600.6,395.3 601.6,391.7"/>
<polyline points="623.3,406.1 622.3,402.4 620.9,398.9 623.3,394.1"/>
<polyline points="558.3,449.5 558.4,445.9 558.9,442.3 558.5,438.6 559.6,435.1 559.5,431.4 559.5,427.8 559.6,424.2 561.4,421.0 561.7,417.5 562.1,414.0 563.7,410.8 564.3,407.3"/>
<polyline points="553.5,449.5 556.8,446.6 560.6,444.5 564.0,441.8 567.9,439.8 571.0,436.9 574.0,433.8"/>
<polyline points="519.8,443.4 517.4,439.2 515.0,435.0 519.0,433.5 522.9,431.4 527.0,430.2"/>
<polyline points="519.8,443.4 522.7,447.3 524.6,451.9 529.4,456.0"/>
<polyline points="587.2,444.6 590.8,448.3 594.4,451.9 599.2,456.0"/>
<polyline points="489.7,409.3 493.4,407.6 497.3,406.8 501.5,406.5 505.1,404.8 509.0,403.7 513.4,403.4 517.8,402.4 522.2,402.5 525.9,404.2 529.4,406.1 532.4,409.4 534.2,413.4"/>
<polyline points="509.0,403.7 508.9,398.8 510.2,394.1 510.0,390.0 509.1,386.0 507.8,382.1 504.2,377.2"/>
<polyline points="507.8,382.1 510.6,379.9 513.9,378.6 516.7,376.5 519.8,374.8 523.4,374.9 527.1,374.8 530.6,376.0 534.2,376.0 538.0,378.2 542.4,379.0 546.3,380.9 551.1,385.7 554.7,386.4 558.2,386.9 561.9,386.9 565.5,386.9 569.7,386.3 573.9,385.1 578.2,385.5 582.4,384.5"/>
<polyline points="546.3,380.9 547.5,377.2"/>
<polyline points="515.0,376.0 517.2,373.1 518.9,369.8 520.6,366.6 522.3,363.3 524.6,360.4 528.0,357.6 531.8,355.6 533.9,351.8 535.1,347.5 536.7,343.5 540.1,341.0 543.2,338.0 546.3,335.1 550.2,336.0 554.3,336.1 558.3,336.3 561.7,334.0 565.5,332.7 569.1,330.3 571.9,327.0 575.2,324.3 577.4,320.0 580.0,315.9 584.0,314.9 588.1,314.9 592.0,313.5 592.6,309.0 594.3,304.8 594.4,300.2 594.5,296.5 593.2,293.0"/>
<polyline points="553.5,333.9 551.4,330.5 549.9,326.7 547.0,324.2 543.9,321.9"/>
<polyline points="565.5,333.9 564.7,329.6 563.1,325.5"/>
<polyline points="565.5,335.1 566.4,338.9 567.9,342.4 569.2,346.0 570.4,351.0 572.8,355.6 576.7,357.6 580.0,360.4"/>
<polyline points="567.9,344.8 571.5,344.2 575.1,343.5 578.8,343.5"/>
<polyline points="592.0,313.5 593.0,317.9 593.4,322.3 594.4,326.7 596.1,330.9 598.1,334.8 600.4,338.7 600.6,342.6 601.1,346.4 600.6,350.3 601.5,354.1 601.6,358.0"/>
<polyline points="594.4,325.5 599.4,324.1 604.1,321.9 608.9,320.6 613.7,319.5"/>
<polyline points="600.4,337.5 604.0,337.0 607.6,336.1 611.3,336.3 612.4,340.0 613.3,343.7 614.9,347.2"/>
<polyline points="618.5,293.0 620.7,295.9 621.4,299.6 623.3,302.6 626.0,305.2 628.5,307.9 630.5,311.1 634.4,312.4 638.5,312.9 642.6,313.5 642.4,317.1 642.5,320.7 642.6,324.3 641.5,328.1 638.8,331.2 637.8,335.1 639.3,338.6 640.2,342.3 644.8,344.2 649.8,344.8"/>
<polyline points="507.8,293.0 506.6,296.5 506.6,300.2 505.9,303.8 505.4,307.4 501.1,308.0 496.9,308.8 492.9,310.8 488.5,311.1 486.9,315.2 486.1,319.5 485.9,323.1 486.6,326.7 486.6,330.3 487.3,333.9 484.8,337.3 482.8,341.0 481.3,344.9 478.9,348.4 478.0,352.4 476.5,356.3 474.2,359.8 472.9,363.7 471.7,367.6 472.2,371.2 472.4,374.8 472.8,378.5 472.9,382.1 469.6,384.0 467.3,386.9 464.4,389.3 460.7,389.8 457.2,391.2 453.5,391.7 450.0,392.9"/>
<polyline points="503.0,325.5 499.5,326.5 496.2,328.1 493.3,330.3 489.3,332.9 486.1,336.3"/>
<polyline points="486.1,337.5 490.0,341.0 494.5,343.5"/>
<polyline points="500.5,308.6 506.6,311.1"/>
<polyline points="500.5,297.8 504.1,298.5 507.8,299.0"/>
<polyline points="450.0,303.8 454.8,305.0"/>
<polyline points="464.4,451.9 469.3,452.0 474.1,453.1"/>
<polyline points="636.6,456.0 635.0,460.9 632.9,465.6 632.5,469.7 630.7,473.5 630.5,477.7 629.4,481.6 629.1,485.7 628.1,489.7 630.5,495.7"/>
<polyline points="636.6,456.0 640.5,458.9 645.0,460.8 648.1,463.8 651.7,466.1"/>
<polyline points="594.4,456.0 594.9,459.6 595.1,463.2 595.2,466.8 595.6,470.4 596.9,474.4 598.5,478.3 599.2,482.5 599.2,486.7 599.7,490.9"/>
<polyline points="567.9,456.0 569.9,458.9 571.6,462.0 573.3,465.1 575.2,468.0 574.7,472.0 575.1,476.1 574.0,480.1 576.6,483.2 579.7,485.9 581.9,489.3 584.8,492.1 586.6,496.5 589.3,500.3 592.0,504.1 593.3,508.0 593.7,512.2 594.4,516.2 595.2,520.2 595.4,524.2 595.6,528.2 593.1,531.6 589.6,534.3 587.2,537.8 585.5,541.9 584.3,546.3"/>
<polyline points="594.4,517.4 598.0,518.4 601.6,519.1 605.3,518.8 608.9,519.8 611.5,522.7 614.9,524.6 615.6,529.4"/>
</g>
<circle cx="246.4" cy="319.5" r="6.3" fill="#d36086" fill-opacity="0.72" stroke="#c9577d" stroke-opacity="0.6" stroke-width="0.8"/>
<circle cx="401.6" cy="348.4" r="6.3" fill="#d36086" fill-opacity="0.72" stroke="#c9577d" stroke-opacity="0.6" stroke-width="0.8"/>
<circle cx="440" cy="386.4" r="6.3" fill="#d36086" fill-opacity="0.72" stroke="#c9577d" stroke-opacity="0.6" stroke-width="0.8"/>
<circle cx="452" cy="409.3" r="6.3" fill="#d36086" fill-opacity="0.72" stroke="#c9577d" stroke-opacity="0.6" stroke-width="0.8"/>
<circle cx="490" cy="409.3" r="6.3" fill="#d36086" fill-opacity="0.72" stroke="#c9577d" stroke-opacity="0.6" stroke-width="0.8"/>
<circle cx="481" cy="462" r="6.3" fill="#d36086" fill-opacity="0.72" stroke="#c9577d" stroke-opacity="0.6" stroke-width="0.8"/>
<circle cx="540.5" cy="472.4" r="6.3" fill="#d36086" fill-opacity="0.72" stroke="#c9577d" stroke-opacity="0.6" stroke-width="0.8"/>
<circle cx="547.2" cy="505.3" r="6.3" fill="#d36086" fill-opacity="0.72" stroke="#c9577d" stroke-opacity="0.6" stroke-width="0.8"/>
<circle cx="531" cy="535" r="6.3" fill="#d36086" fill-opacity="0.72" stroke="#c9577d" stroke-opacity="0.6" stroke-width="0.8"/>
<circle cx="472" cy="581.7" r="6.3" fill="#d36086" fill-opacity="0.72" stroke="#c9577d" stroke-opacity="0.6" stroke-width="0.8"/>
</svg>
</div>
<div class="btn" style="left:9px;top:139px;width:26px;height:51px"></div>
<div class="btn" style="left:9px;top:197.7px;width:26px;height:24px"></div>
<div class="btn" style="left:9px;top:229px;width:26px;height:24.5px"></div>
<div class="btn" style="left:9px;top:261px;width:26px;height:25px"></div>
<div class="btn" style="left:873px;top:139px;width:25px;height:26px;box-shadow:none"></div>
<div class="abs" style="left:853px;top:642px;font-size:8.6px;line-height:10px;color:#1a1c21;text-shadow:0 0 2px #fff,0 0 2px #fff"><b>zoom:</b> 5.43</div>
<div class="abs" style="left:595px;top:663px;font-size:8.9px;line-height:10px;color:#2a2d36;-webkit-text-stroke:0.25px #2a2d36;text-shadow:0 0 2px #fff,0 0 2px #fff"><span>Elastic Maps Service</span><span style="display:inline-block;width:13px"></span><span>, OpenMapTiles</span><span style="display:inline-block;width:13px"></span><span>, OpenStreetMap contributors</span></div>
<div class="abs ttl" style="left:923px;top:113.7px">Courbes avec les données hydrologiques</div>
<div class="gear" style="left:1885px;top:110px;width:20.5px;height:19.7px"></div>
<div class="tick" style="right:930px;top:624.1px">0</div>
<div class="tick" style="right:930px;top:590.2px">200</div>
<div class="tick" style="right:930px;top:556.2px">400</div>
<div class="tick" style="right:930px;top:522.3px">600</div>
<div class="tick" style="right:930px;top:488.4px">800</div>
<div class="tick" style="right:930px;top:454.5px">1,000</div>
<div class="tick" style="right:930px;top:420.5px">1,200</div>
<div class="tick" style="right:930px;top:386.6px">1,400</div>
<div class="tick" style="right:930px;top:352.7px">1,600</div>
<div class="tick" style="right:930px;top:318.7px">1,800</div>
<div class="tick" style="right:930px;top:284.8px">2,000</div>
<div class="tick" style="right:930px;top:250.9px">2,200</div>
<div class="tick" style="right:930px;top:217.0px">2,400</div>
<div class="tick" style="right:930px;top:183.0px">2,600</div>
<div class="tick" style="right:930px;top:149.1px">2,800</div>
<div class="tick" style="left:1073.8px;top:635.5px;width:38px;text-align:center">2010-01-01</div>
<div class="tick" style="left:1179.4px;top:635.5px;width:38px;text-align:center">2012-01-01</div>
<div class="tick" style="left:1285.1px;top:635.5px;width:38px;text-align:center">2014-01-01</div>
<div class="tick" style="left:1390.7px;top:635.5px;width:38px;text-align:center">2016-01-01</div>
<div class="tick" style="left:1496.4px;top:635.5px;width:38px;text-align:center">2018-01-01</div>
<div class="tick" style="left:1602.0px;top:635.5px;width:38px;text-align:center">2020-01-01</div>
<div class="tick" style="left:1707.7px;top:635.5px;width:38px;text-align:center">2022-01-01</div>
<div class="abs" style="left:1374px;top:657px;font-size:9.7px;font-weight:700;line-height:12px;color:#343741">Date</div>
<div class="abs" style="left:929px;top:381px;width:0;height:0"><div class="abs" style="transform:translate(-50%,-50%) rotate(-90deg);font-size:9.7px;font-weight:700;line-height:12px;color:#343741">Valeur</div></div>
<div class="abs" style="left:946px;top:380px;width:0;height:0"><div class="abs" style="transform:translate(-50%,-50%) rotate(-90deg);font-size:8.1px;font-weight:700;line-height:10px;color:#343741">Débit (instantané - m3/s)</div></div>
<div class="leg" style="top:133.6px">ManantaliAmt</div>
<div class="leg" style="top:151.2px">Kayes</div>
<div class="leg" style="top:168.8px">ManantaliAvl</div>
<div class="leg" style="top:186.3px">Matam</div>
<div class="leg" style="top:203.9px">Bakel</div>
<div class="leg" style="top:221.5px">BafingMaka...</div>
<div class="leg" style="top:239.1px">DakaSaidou</div>
<div class="leg" style="top:256.7px">DiamaAval</div>
<div class="leg" style="top:274.2px">Kidira</div>
<div class="leg" style="top:291.8px">Gourbassi</div>
<div class="leg" style="top:309.4px">Bebele</div>
<svg width="1911" height="678" viewBox="0 0 1911 678">
<path d="M0,102.5 H1902.5 Q1905.5,102.5 1905.5,99.5 V0" stroke="#808cab" stroke-width="1" stroke-dasharray="1.8 4.2" fill="none"/>
<path d="M0,109.5 H905.5 Q908.5,109.5 908.5,112.5 V678" stroke="#808cab" stroke-width="1" stroke-dasharray="1.8 4.2" fill="none"/>
<path d="M915.5,678 V113 Q915.5,109.5 919,109.5 H1902.5 Q1905.5,109.5 1905.5,112.5 V678" stroke="#808cab" stroke-width="1" stroke-dasharray="1.8 4.2" fill="none"/>
<g transform="translate(1895.4,8.4)"><path d="M1.58,-5.89 L-1.58,-5.89 L-1.39,-4.28 L-3.01,-3.34 L-4.31,-4.31 L-5.89,-1.58 L-4.40,-0.94 L-4.40,0.94 L-5.89,1.58 L-4.31,4.31 L-3.01,3.34 L-1.39,4.28 L-1.58,5.89 L1.58,5.89 L1.39,4.28 L3.01,3.34 L4.31,4.31 L5.89,1.58 L4.40,0.94 L4.40,-0.94 L5.89,-1.58 L4.31,-4.31 L3.01,-3.34 L1.39,-4.28 Z" fill="none" stroke="#343741" stroke-width="1" stroke-linejoin="round"/><circle cx="0" cy="0" r="2.2" fill="none" stroke="#343741" stroke-width="1"/></g>
<g transform="translate(898.4,120.3)"><path d="M1.58,-5.89 L-1.58,-5.89 L-1.39,-4.28 L-3.01,-3.34 L-4.31,-4.31 L-5.89,-1.58 L-4.40,-0.94 L-4.40,0.94 L-5.89,1.58 L-4.31,4.31 L-3.01,3.34 L-1.39,4.28 L-1.58,5.89 L1.58,5.89 L1.39,4.28 L3.01,3.34 L4.31,4.31 L5.89,1.58 L4.40,0.94 L4.40,-0.94 L5.89,-1.58 L4.31,-4.31 L3.01,-3.34 L1.39,-4.28 Z" fill="none" stroke="#343741" stroke-width="1" stroke-linejoin="round"/><circle cx="0" cy="0" r="2.2" fill="none" stroke="#343741" stroke-width="1"/></g>
<g transform="translate(1895.4,120.4)"><path d="M1.58,-5.89 L-1.58,-5.89 L-1.39,-4.28 L-3.01,-3.34 L-4.31,-4.31 L-5.89,-1.58 L-4.40,-0.94 L-4.40,0.94 L-5.89,1.58 L-4.31,4.31 L-3.01,3.34 L-1.39,4.28 L-1.58,5.89 L1.58,5.89 L1.39,4.28 L3.01,3.34 L4.31,4.31 L5.89,1.58 L4.40,0.94 L4.40,-0.94 L5.89,-1.58 L4.31,-4.31 L3.01,-3.34 L1.39,-4.28 Z" fill="none" stroke="#343741" stroke-width="1" stroke-linejoin="round"/><circle cx="0" cy="0" r="2.2" fill="none" stroke="#343741" stroke-width="1"/></g>
<path d="M1894,96.3 H1898.6 V92" stroke="#444c5e" stroke-width="1.3" fill="none"/>
<path d="M1894,678 H1898.6 V673.5" stroke="#444c5e" stroke-width="1.3" fill="none"/>
<path d="M897,678 H901.6 V673.5" stroke="#444c5e" stroke-width="1.3" fill="none"/>
<g transform="translate(16,31)"><path d="M5.5,0.8 L10.6,9.7 L0.4,9.7 Z" fill="none" stroke="#343741" stroke-width="0.9" stroke-linejoin="round"/><path d="M5.5,3.6 V6.8" stroke="#343741" stroke-width="0.9"/><circle cx="5.5" cy="8.2" r="0.55" fill="#343741"/></g>
<g transform="translate(646.5,31)"><path d="M5.5,0.8 L10.6,9.7 L0.4,9.7 Z" fill="none" stroke="#343741" stroke-width="0.9" stroke-linejoin="round"/><path d="M5.5,3.6 V6.8" stroke="#343741" stroke-width="0.9"/><circle cx="5.5" cy="8.2" r="0.55" fill="#343741"/></g>
<path d="M260.2,60.9 L265.40000000000003,66.1 M265.40000000000003,60.9 L260.2,66.1" stroke="#343741" stroke-width="0.9" fill="none"/>
<path d="M781.1999999999999,60.9 L786.4,66.1 M786.4,60.9 L781.1999999999999,66.1" stroke="#343741" stroke-width="0.9" fill="none"/>
<circle cx="301.4" cy="63.3" r="6.4" fill="#98a2b3"/><path d="M299.29999999999995,61.199999999999996 L303.5,65.39999999999999 M303.5,61.199999999999996 L299.29999999999995,65.39999999999999" stroke="#fff" stroke-width="1.1" fill="none"/>
<path d="M314.3,60.800000000000004 L319.3,65.8 L324.3,60.800000000000004" stroke="#343741" stroke-width="1.1" fill="none" stroke-linejoin="round" stroke-linecap="round"/>
<circle cx="932.4" cy="63.3" r="6.4" fill="#98a2b3"/><path d="M930.3,61.199999999999996 L934.5,65.39999999999999 M934.5,61.199999999999996 L930.3,65.39999999999999" stroke="#fff" stroke-width="1.1" fill="none"/>
<path d="M945.3,60.800000000000004 L950.3,65.8 L955.3,60.800000000000004" stroke="#343741" stroke-width="1.1" fill="none" stroke-linejoin="round" stroke-linecap="round"/>
<path d="M1576.5,59.6 L1581.5,64.6 L1586.5,59.6" stroke="#343741" stroke-width="1.1" fill="none" stroke-linejoin="round" stroke-linecap="round"/>
<circle cx="22" cy="152" r="6" fill="#2b2d36"/><path d="M18.8,152 H25.2 M22,148.8 V155.2" stroke="#fff" stroke-width="1.3"/>
<circle cx="22" cy="177" r="6" fill="#2b2d36"/><path d="M18.8,177 H25.2" stroke="#fff" stroke-width="1.3"/>
<circle cx="22" cy="209.5" r="4.3" fill="none" stroke="#343741" stroke-width="0.9" stroke-dasharray="1.6 1.2"/><path d="M22,203.5 V206.5 M22,212.5 V215.5 M16,209.5 H19 M25,209.5 H28" stroke="#343741" stroke-width="0.9"/><circle cx="22" cy="209.5" r="0.9" fill="#343741"/>
<path d="M17.5,246 L26.5,237 M17.5,242.5 V246 H21 M23,237 H26.5 V240.5" stroke="#343741" stroke-width="0.9" fill="none"/>
<path d="M19.2,268.2 a3.3,3.3 0 1 0 3.6,4.6 l4.2,3.6 a1.6,1.6 0 0 0 2.1,-2.3 l-4.4,-3.3 a3.3,3.3 0 0 0 -4.3,-3.6 l1.9,2.1 l-0.6,1.8 l-1.9,0.3 z" stroke="#343741" stroke-width="0.9" fill="none" stroke-linejoin="round" transform="translate(-1.5,-1.2)"/>
<path d="M882,149.5 H890.5 M884.5,152.5 H890.5 M882,155.5 H890.5" stroke="#343741" stroke-width="1"/><path d="M883.5,150 L880.3,152.5 L883.5,155" stroke="#343741" stroke-width="1" fill="none"/><path d="M880.5,152.5 H886" stroke="#343741" stroke-width="1"/>
<path d="M686.0,664.5 H682.5 V671.5 H689.5 V668.0 M687.0,663.5 H690.5 V667.0 M690.5,663.5 L686.3,667.7" stroke="#343741" stroke-width="0.8" fill="none"/>
<path d="M760.5,664.5 H757 V671.5 H764 V668.0 M761.5,663.5 H765 V667.0 M765,663.5 L760.8,667.7" stroke="#343741" stroke-width="0.8" fill="none"/>
<path d="M893.5,664.5 H890 V671.5 H897 V668.0 M894.5,663.5 H898 V667.0 M898,663.5 L893.8,667.7" stroke="#343741" stroke-width="0.8" fill="none"/>
<path d="M988.5,133 V628.5 H1780" stroke="#eef0f4" stroke-width="1" fill="none"/>
<circle cx="1810" cy="139.6" r="3" fill="#54B399"/>
<path d="M1896.5,135.6 v1.6 m0,1.8 v1.6 m0,1.8 v1.6" stroke="#343741" stroke-width="1.6"/>
<circle cx="1810" cy="157.2" r="3" fill="#6092C0"/>
<path d="M1896.5,153.2 v1.6 m0,1.8 v1.6 m0,1.8 v1.6" stroke="#343741" stroke-width="1.6"/>
<circle cx="1810" cy="174.8" r="3" fill="#D36086"/>
<path d="M1896.5,170.8 v1.6 m0,1.8 v1.6 m0,1.8 v1.6" stroke="#343741" stroke-width="1.6"/>
<circle cx="1810" cy="192.3" r="3" fill="#9170B8"/>
<path d="M1896.5,188.3 v1.6 m0,1.8 v1.6 m0,1.8 v1.6" stroke="#343741" stroke-width="1.6"/>
<circle cx="1810" cy="209.9" r="3" fill="#CA8EAE"/>
<path d="M1896.5,205.9 v1.6 m0,1.8 v1.6 m0,1.8 v1.6" stroke="#343741" stroke-width="1.6"/>
<circle cx="1810" cy="227.5" r="3" fill="#D6BF57"/>
<path d="M1896.5,223.5 v1.6 m0,1.8 v1.6 m0,1.8 v1.6" stroke="#343741" stroke-width="1.6"/>
<circle cx="1810" cy="245.1" r="3" fill="#B9A888"/>
<path d="M1896.5,241.1 v1.6 m0,1.8 v1.6 m0,1.8 v1.6" stroke="#343741" stroke-width="1.6"/>
<circle cx="1810" cy="262.7" r="3" fill="#DA8B45"/>
<path d="M1896.5,258.7 v1.6 m0,1.8 v1.6 m0,1.8 v1.6" stroke="#343741" stroke-width="1.6"/>
<circle cx="1810" cy="280.2" r="3" fill="#AA6556"/>
<path d="M1896.5,276.2 v1.6 m0,1.8 v1.6 m0,1.8 v1.6" stroke="#343741" stroke-width="1.6"/>
<circle cx="1810" cy="297.8" r="3" fill="#E7664C"/>
<path d="M1896.5,293.8 v1.6 m0,1.8 v1.6 m0,1.8 v1.6" stroke="#343741" stroke-width="1.6"/>
<circle cx="1810" cy="315.4" r="3" fill="#A5DACB"/>
<path d="M1896.5,311.4 v1.6 m0,1.8 v1.6 m0,1.8 v1.6" stroke="#343741" stroke-width="1.6"/>
<rect x="919.3" y="662" width="19.4" height="18" rx="2.5" fill="#f6f7fb"/><path d="M928,667.5 H934.2 M928,670.3 H934.2 M928,672.8 H934.2 M928,675.3 H934.2 M924.2,667.5 h1.6 M924.2,670.3 h1.6 M924.2,672.8 h1.6 M924.2,675.3 h1.6" stroke="#878d9a" stroke-width="1.1"/>
<polyline points="1092.8,589.8 1097.2,591.0 1101.5,592.3 1105.9,593.5 1110.2,594.7 1114.5,595.9 1118.9,597.1 1123.2,598.3 1127.5,597.5 1131.9,588.0 1136.2,589.1 1140.6,590.2 1144.9,591.3 1149.2,592.4 1153.6,593.6 1157.9,594.7 1162.3,595.8 1166.6,596.9 1170.9,598.0 1175.3,599.2 1179.6,594.1 1183.9,576.6 1188.3,577.7 1192.6,578.8 1197.0,580.0 1201.3,581.1 1205.6,582.2 1210.0,583.3 1214.3,584.4 1218.7,585.6 1223.0,586.7 1227.3,587.8 1231.7,582.2 1236.0,576.6 1240.3,577.7 1244.7,578.7 1249.0,579.8 1253.4,580.9 1257.7,581.9 1262.0,583.0 1266.4,584.1 1270.7,585.1 1275.1,586.2 1279.4,587.3 1283.7,578.8 1288.1,576.3 1292.4,577.0 1296.7,577.8 1301.1,578.2 1305.4,578.5 1309.8,579.3 1314.1,580.1 1318.4,580.8 1322.8,581.6 1327.1,582.4 1331.5,583.1 1335.8,583.9 1340.1,578.8 1344.5,575.4 1348.8,576.4 1353.1,577.5 1357.5,578.5 1361.8,579.6 1366.2,580.6 1370.5,581.6 1374.8,582.7 1379.2,583.7 1383.5,584.7 1387.9,580.5 1392.2,575.4 1396.5,576.1 1400.9,576.8 1405.2,577.4 1409.5,578.1 1413.9,578.8 1418.2,579.5 1422.6,580.2 1426.9,580.8 1431.2,581.5 1435.6,582.2 1439.9,579.2 1444.2,576.3 1448.6,574.6 1452.9,575.0 1457.3,575.4 1461.6,575.8 1465.9,576.3 1470.3,576.7 1474.6,577.1 1479.0,577.5 1483.3,578.0 1487.6,578.4 1492.0,578.8 1496.3,577.5 1500.6,576.3 1505.0,578.8 1509.3,581.3 1513.7,583.9 1518.0,587.3 1522.3,590.7 1526.7,592.2 1531.0,593.7 1535.4,595.3 1539.7,596.8 1544.0,598.3 1548.4,593.6 1552.7,589.0 1557.0,588.1 1561.4,587.3 1565.7,577.1 1570.1,578.4 1574.4,579.7 1578.7,580.9 1583.1,582.2 1587.4,583.5 1591.8,584.7 1596.1,586.0 1600.4,587.3 1604.8,578.8 1609.1,577.7 1613.4,576.5 1617.8,576.0 1622.1,575.4 1626.5,576.3 1630.8,577.1 1635.1,579.0 1639.5,580.8 1643.8,582.7 1648.2,584.6 1652.5,586.4 1656.8,581.8 1661.2,577.1 1665.5,576.0 1669.8,574.8 1674.2,573.7 1678.5,555.9 1682.9,556.8 1687.2,557.6 1691.5,555.1 1695.9,559.3 1700.2,555.9 1704.6,585.6 1708.9,593.2" fill="none" stroke="#54B399" stroke-width="1.5" stroke-linejoin="round"/>
<polyline points="1092.8,599.8 1097.2,585.7 1101.5,581.6 1105.9,582.9 1110.2,576.9 1114.5,573.4 1118.9,554.8 1123.2,504.2 1127.5,417.1 1131.9,526.2 1136.2,581.4 1140.6,589.6 1144.9,586.9 1149.2,578.6 1153.6,577.9 1157.9,573.4 1162.3,569.3 1166.6,560.5 1170.9,550.0 1175.3,521.5 1179.6,475.0 1183.9,546.6 1188.3,578.2 1192.6,584.3 1197.0,589.0 1201.3,587.7 1205.6,579.4 1210.0,574.3 1214.3,575.6 1218.7,566.5 1223.0,538.4 1227.3,414.6 1231.7,341.3 1236.0,381.7 1240.3,517.7 1244.7,582.9 1249.0,584.4 1253.4,582.0 1257.7,577.1 1262.0,574.3 1266.4,572.0 1270.7,567.9 1275.1,538.8 1279.4,519.4 1283.7,335.2 1288.1,446.7 1292.4,566.2 1296.7,579.9 1301.1,584.8 1305.4,589.8 1309.8,587.5 1314.1,581.2 1318.4,583.3 1322.8,582.1 1327.1,570.1 1331.5,562.4 1335.8,494.0 1340.1,486.0 1344.5,543.2 1348.8,585.2 1353.1,588.8 1357.5,589.6 1361.8,588.5 1366.2,582.6 1370.5,578.1 1374.8,578.3 1379.2,569.3 1383.5,549.9 1387.9,439.4 1392.2,432.9 1396.5,519.4 1400.9,579.3 1405.2,585.2 1409.5,587.1 1413.9,581.1 1418.2,581.1 1422.6,580.3 1426.9,576.7 1431.2,566.1 1435.6,547.3 1439.9,467.5 1444.2,373.5 1448.6,439.4 1452.9,575.4 1457.3,582.3 1461.6,590.4 1465.9,585.7 1470.3,583.7 1474.6,578.1 1479.0,579.0 1483.3,570.7 1487.6,565.8 1492.0,539.8 1496.3,519.4 1500.6,555.1 1505.0,584.1 1509.3,592.8 1513.7,592.1 1518.0,584.1 1522.3,579.9 1526.7,583.4 1531.0,581.8 1535.4,575.2 1539.7,546.3 1544.0,492.3 1548.4,363.2 1552.7,466.0 1557.0,576.1 1561.4,584.7 1565.7,589.2 1570.1,580.2 1574.4,576.5 1578.7,572.8 1583.1,571.7 1587.4,566.6 1591.8,541.9 1596.1,499.1 1600.4,393.2 1604.8,492.3 1609.1,571.2 1613.4,582.5 1617.8,586.1 1622.1,589.8 1626.5,586.1 1630.8,582.7 1635.1,578.0 1639.5,575.0 1643.8,572.3 1648.2,539.6 1652.5,475.3 1656.8,333.8 1661.2,448.0 1665.5,570.2 1669.8,582.4 1674.2,587.9 1678.5,560.5 1682.9,557.6 1687.2,561.2 1691.5,555.4 1695.9,563.1 1700.2,559.6 1704.6,526.2 1708.9,487.2" fill="none" stroke="#6092C0" stroke-width="1.5" stroke-linejoin="round"/>
<polyline points="1092.8,606.8 1097.2,593.2 1101.5,589.2 1105.9,589.0 1110.2,584.6 1114.5,582.7 1118.9,586.5 1123.2,593.2 1127.5,597.7 1131.9,596.9 1136.2,603.5 1140.6,602.5 1144.9,593.2 1149.2,586.7 1153.6,585.6 1157.9,582.3 1162.3,577.7 1166.6,573.5 1170.9,577.9 1175.3,588.4 1179.6,589.0 1183.9,593.8 1188.3,596.3 1192.6,597.6 1197.0,597.4 1201.3,593.0 1205.6,588.7 1210.0,584.0 1214.3,583.9 1218.7,579.6 1223.0,582.0 1227.3,592.0 1231.7,594.0 1236.0,596.8 1240.3,602.2 1244.7,600.7 1249.0,593.7 1253.4,590.0 1257.7,586.8 1262.0,582.9 1266.4,580.6 1270.7,578.4 1275.1,579.2 1279.4,588.9 1283.7,593.6 1288.1,593.2 1292.4,599.0 1296.7,596.6 1301.1,597.3 1305.4,598.1 1309.8,595.8 1314.1,589.8 1318.4,590.9 1322.8,587.2 1327.1,583.4 1331.5,588.3 1335.8,595.0 1340.1,599.3 1344.5,597.5 1348.8,601.9 1353.1,601.9 1357.5,595.9 1361.8,594.0 1366.2,589.0 1370.5,586.9 1374.8,584.4 1379.2,582.4 1383.5,583.4 1387.9,591.4 1392.2,595.9 1396.5,595.9 1400.9,603.5 1405.2,600.0 1409.5,595.3 1413.9,589.5 1418.2,586.6 1422.6,586.1 1426.9,583.0 1431.2,579.2 1435.6,584.5 1439.9,591.6 1444.2,595.5 1448.6,596.6 1452.9,602.2 1457.3,598.4 1461.6,599.0 1465.9,594.3 1470.3,590.3 1474.6,585.8 1479.0,586.4 1483.3,582.4 1487.6,584.5 1492.0,591.7 1496.3,594.5 1500.6,595.1 1505.0,602.6 1509.3,601.2 1513.7,599.6 1518.0,593.4 1522.3,589.9 1526.7,590.7 1531.0,588.2 1535.4,585.6 1539.7,588.0 1544.0,595.0 1548.4,597.0 1552.7,599.2 1557.0,605.0 1561.4,602.5 1565.7,594.9 1570.1,589.5 1574.4,584.2 1578.7,582.4 1583.1,580.4 1587.4,577.1 1591.8,579.7 1596.1,591.6 1600.4,590.9 1604.8,592.3 1609.1,597.6 1613.4,596.9 1617.8,596.7 1622.1,596.4 1626.5,591.9 1630.8,589.5 1635.1,584.7 1639.5,584.4 1643.8,581.7 1648.2,583.8 1652.5,592.9 1656.8,594.8 1661.2,596.9 1665.5,602.4 1669.8,600.9 1674.2,594.5 1678.5,588.6 1682.9,586.0 1687.2,579.7 1691.5,577.8 1695.9,576.8 1700.2,579.3 1704.6,588.6 1708.9,591.5" fill="none" stroke="#D36086" stroke-width="1.5" stroke-linejoin="round"/>
<polyline points="1092.8,606.9 1097.2,591.0 1101.5,588.2 1105.9,587.1 1110.2,582.3 1114.5,579.7 1118.9,539.8 1123.2,438.0 1127.5,241.2 1131.9,391.9 1136.2,539.6 1140.6,591.2 1144.9,595.4 1149.2,588.0 1153.6,587.8 1157.9,581.4 1162.3,576.3 1166.6,567.2 1170.9,544.5 1175.3,515.2 1179.6,334.4 1183.9,501.4 1188.3,544.4 1192.6,586.5 1197.0,598.8 1201.3,590.7 1205.6,589.2 1210.0,584.0 1214.3,581.4 1218.7,573.6 1223.0,530.4 1227.3,351.5 1231.7,183.5 1236.0,193.7 1240.3,449.7 1244.7,588.3 1249.0,592.5 1253.4,592.5 1257.7,586.5 1262.0,583.2 1266.4,583.1 1270.7,575.0 1275.1,529.1 1279.4,505.0 1283.7,215.8 1288.1,255.3 1292.4,527.4 1296.7,581.8 1301.1,591.0 1305.4,600.1 1309.8,597.0 1314.1,592.1 1318.4,589.5 1322.8,588.4 1327.1,581.1 1331.5,558.5 1335.8,433.4 1340.1,375.9 1344.5,475.3 1348.8,560.9 1353.1,592.2 1357.5,595.6 1361.8,593.0 1366.2,591.1 1370.5,589.2 1374.8,583.5 1379.2,578.5 1383.5,539.5 1387.9,318.7 1392.2,244.6 1396.5,390.3 1400.9,540.4 1405.2,586.7 1409.5,597.5 1413.9,587.6 1418.2,586.8 1422.6,586.9 1426.9,582.8 1431.2,572.8 1435.6,532.6 1439.9,308.7 1444.2,185.2 1448.6,323.2 1452.9,528.9 1457.3,586.8 1461.6,601.3 1465.9,595.8 1470.3,591.2 1474.6,586.8 1479.0,585.1 1483.3,579.2 1487.6,562.0 1492.0,526.2 1496.3,440.4 1500.6,505.9 1505.0,572.0 1509.3,598.0 1513.7,598.4 1518.0,593.1 1522.3,591.5 1526.7,590.9 1531.0,586.0 1535.4,583.3 1539.7,539.8 1544.0,440.4 1548.4,239.5 1552.7,323.8 1557.0,539.5 1561.4,590.9 1565.7,594.0 1570.1,587.0 1574.4,585.0 1578.7,580.7 1583.1,579.3 1587.4,572.2 1591.8,543.4 1596.1,519.4 1600.4,321.3 1604.8,295.2 1609.1,547.6 1613.4,586.5 1617.8,592.1 1622.1,597.6 1626.5,593.6 1630.8,591.7 1635.1,583.0 1639.5,582.5 1643.8,576.6 1648.2,526.2 1652.5,382.4 1656.8,139.4 1661.2,295.2 1665.5,521.1 1669.8,586.5 1674.2,595.7 1678.5,586.2 1682.9,583.6 1687.2,579.4 1691.5,579.1 1695.9,570.1 1700.2,544.2 1704.6,409.8 1708.9,327.6" fill="none" stroke="#9170B8" stroke-width="1.5" stroke-linejoin="round"/>
<polyline points="1092.8,606.2 1097.2,588.9 1101.5,584.2 1105.9,586.7 1110.2,582.1 1114.5,578.1 1118.9,524.5 1123.2,445.0 1127.5,243.8 1131.9,450.9 1136.2,552.7 1140.6,590.9 1144.9,588.4 1149.2,584.0 1153.6,584.9 1157.9,579.5 1162.3,577.6 1166.6,566.6 1170.9,520.7 1175.3,500.1 1179.6,301.3 1183.9,516.5 1188.3,552.0 1192.6,587.0 1197.0,593.5 1201.3,590.3 1205.6,584.7 1210.0,582.3 1214.3,582.7 1218.7,571.2 1223.0,505.3 1227.3,340.1 1231.7,180.2 1236.0,195.4 1240.3,458.4 1244.7,586.1 1249.0,591.0 1253.4,588.2 1257.7,586.6 1262.0,582.7 1266.4,579.2 1270.7,572.9 1275.1,500.8 1279.4,500.1 1283.7,159.8 1288.1,285.0 1292.4,533.1 1296.7,577.7 1301.1,587.0 1305.4,596.2 1309.8,594.7 1314.1,588.6 1318.4,589.9 1322.8,586.2 1327.1,576.0 1331.5,546.6 1335.8,440.0 1340.1,396.1 1344.5,499.1 1348.8,567.7 1353.1,594.5 1357.5,592.6 1361.8,589.4 1366.2,585.1 1370.5,583.1 1374.8,582.0 1379.2,577.2 1383.5,514.2 1387.9,305.0 1392.2,220.9 1396.5,437.5 1400.9,548.6 1405.2,585.8 1409.5,590.5 1413.9,585.8 1418.2,585.7 1422.6,585.5 1426.9,582.3 1431.2,570.4 1435.6,510.1 1439.9,315.5 1444.2,188.6 1448.6,364.5 1452.9,541.7 1457.3,583.4 1461.6,596.2 1465.9,593.6 1470.3,590.2 1474.6,580.8 1479.0,583.1 1483.3,575.5 1487.6,548.7 1492.0,517.7 1496.3,433.4 1500.6,519.4 1505.0,576.2 1509.3,594.1 1513.7,598.1 1518.0,592.2 1522.3,586.9 1526.7,589.4 1531.0,586.1 1535.4,580.7 1539.7,514.1 1544.0,433.6 1548.4,195.4 1552.7,357.8 1557.0,544.2 1561.4,587.4 1565.7,590.3 1570.1,586.9 1574.4,581.5 1578.7,579.8 1583.1,580.3 1587.4,570.7 1591.8,516.9 1596.1,509.3 1600.4,241.2 1604.8,334.4 1609.1,544.9 1613.4,581.6 1617.8,587.6 1622.1,593.5 1626.5,590.2 1630.8,586.9 1635.1,581.9 1639.5,580.4 1643.8,576.9 1648.2,501.9 1652.5,359.6 1656.8,134.3 1661.2,354.7 1665.5,535.7 1669.8,583.3 1674.2,590.6 1678.5,583.9 1682.9,583.8 1687.2,576.5 1691.5,575.2 1695.9,569.9 1700.2,528.2 1704.6,405.4 1708.9,330.8" fill="none" stroke="#CA8EAE" stroke-width="1.5" stroke-linejoin="round"/>
<polyline points="1092.8,621.9 1097.2,623.6 1101.5,625.1 1105.9,625.6 1110.2,625.9 1114.5,622.9 1118.9,608.0 1123.2,531.3 1127.5,509.3 1131.9,566.6 1136.2,605.4 1140.6,618.3 1144.9,620.5 1149.2,622.2 1153.6,623.8 1157.9,625.1 1162.3,625.1 1166.6,621.6 1170.9,598.7 1175.3,513.2 1179.6,468.5 1183.9,553.6 1188.3,595.3 1192.6,615.3 1197.0,620.5 1201.3,622.5 1205.6,623.6 1210.0,624.7 1214.3,624.6 1218.7,621.7 1223.0,601.4 1227.3,518.3 1231.7,470.2 1236.0,540.4 1240.3,594.9 1244.7,614.5 1249.0,617.8 1253.4,620.0 1257.7,622.0 1262.0,623.5 1266.4,623.7 1270.7,618.5 1275.1,582.5 1279.4,469.3 1283.7,398.5 1288.1,526.1 1292.4,583.9 1296.7,607.7 1301.1,613.3 1305.4,618.8 1309.8,622.3 1314.1,623.3 1318.4,624.3 1322.8,624.5 1327.1,621.4 1331.5,592.6 1335.8,503.1 1340.1,451.2 1344.5,532.8 1348.8,594.9 1353.1,613.2 1357.5,618.9 1361.8,622.3 1366.2,623.3 1370.5,624.6 1374.8,624.8 1379.2,621.6 1383.5,597.8 1387.9,460.6 1392.2,456.7 1396.5,533.1 1400.9,596.6 1405.2,613.0 1409.5,619.8 1413.9,621.2 1418.2,624.0 1422.6,624.9 1426.9,624.9 1431.2,621.2 1435.6,593.4 1439.9,486.1 1444.2,452.4 1448.6,535.3 1452.9,588.7 1457.3,610.6 1461.6,621.8 1465.9,623.8 1470.3,624.4 1474.6,625.3 1479.0,625.7 1483.3,622.6 1487.6,605.5 1492.0,535.5 1496.3,499.1 1500.6,566.1 1505.0,604.3 1509.3,617.8 1513.7,616.8 1518.0,620.0 1522.3,621.4 1526.7,623.7 1531.0,622.7 1535.4,619.2 1539.7,586.8 1544.0,439.1 1548.4,391.0 1552.7,500.3 1557.0,581.4 1561.4,609.0 1565.7,619.2 1570.1,622.0 1574.4,623.1 1578.7,624.7 1583.1,624.6 1587.4,620.2 1591.8,599.6 1596.1,499.0 1600.4,449.9 1604.8,532.3 1609.1,590.1 1613.4,613.7 1617.8,616.0 1622.1,618.3 1626.5,621.2 1630.8,622.0 1635.1,623.9 1639.5,623.4 1643.8,618.4 1648.2,590.2 1652.5,420.4 1656.8,409.3 1661.2,506.7 1665.5,583.0 1669.8,609.4 1674.2,619.1 1678.5,622.4 1682.9,624.0 1687.2,625.0 1691.5,624.4 1695.9,620.6 1700.2,596.7 1704.6,490.2 1708.9,459.7" fill="none" stroke="#D6BF57" stroke-width="1.5" stroke-linejoin="round"/>
<polyline points="1092.8,623.4 1097.2,624.6 1101.5,625.4 1105.9,625.7 1110.2,625.7 1114.5,624.0 1118.9,608.5 1123.2,544.1 1127.5,512.6 1131.9,570.4 1136.2,602.6 1140.6,618.4 1144.9,620.1 1149.2,622.5 1153.6,624.0 1157.9,624.9 1162.3,625.0 1166.6,622.4 1170.9,599.8 1175.3,510.9 1179.6,464.3 1183.9,540.6 1188.3,598.6 1192.6,614.3 1197.0,620.7 1201.3,623.5 1205.6,624.9 1210.0,625.6 1214.3,625.2 1218.7,622.7 1223.0,597.4 1227.3,504.6 1231.7,475.3 1236.0,542.7 1240.3,599.2 1244.7,615.6 1249.0,620.2 1253.4,622.0 1257.7,623.5 1262.0,624.6 1266.4,624.8 1270.7,621.2 1275.1,592.6 1279.4,480.5 1283.7,436.6 1288.1,526.6 1292.4,586.5 1296.7,610.1 1301.1,615.7 1305.4,621.4 1309.8,622.5 1314.1,624.5 1318.4,625.0 1322.8,625.2 1327.1,621.8 1331.5,601.0 1335.8,515.6 1340.1,466.3 1344.5,552.1 1348.8,598.4 1353.1,612.1 1357.5,621.0 1361.8,623.4 1366.2,624.7 1370.5,624.9 1374.8,625.2 1379.2,622.9 1383.5,598.5 1387.9,510.9 1392.2,475.3 1396.5,542.7 1400.9,600.4 1405.2,614.3 1409.5,619.3 1413.9,621.9 1418.2,623.5 1422.6,625.1 1426.9,624.9 1431.2,622.1 1435.6,598.0 1439.9,479.6 1444.2,447.8 1448.6,536.1 1452.9,588.2 1457.3,612.3 1461.6,621.9 1465.9,624.1 1470.3,625.3 1474.6,625.6 1479.0,625.5 1483.3,623.9 1487.6,604.9 1492.0,532.4 1496.3,502.5 1500.6,569.5 1505.0,603.7 1509.3,617.7 1513.7,620.3 1518.0,622.5 1522.3,623.8 1526.7,624.6 1531.0,624.9 1535.4,622.2 1539.7,596.3 1544.0,486.1 1548.4,444.1 1552.7,543.0 1557.0,592.9 1561.4,612.6 1565.7,619.8 1570.1,622.6 1574.4,624.6 1578.7,625.2 1583.1,625.0 1587.4,621.8 1591.8,596.4 1596.1,514.8 1600.4,458.4 1604.8,550.0 1609.1,592.5 1613.4,613.1 1617.8,616.8 1622.1,620.5 1626.5,622.7 1630.8,623.6 1635.1,625.0 1639.5,624.8 1643.8,621.9 1648.2,596.8 1652.5,430.9 1656.8,451.2 1661.2,529.1 1665.5,593.8 1669.8,613.2 1674.2,620.4 1678.5,623.3 1682.9,624.8 1687.2,624.9 1691.5,625.2 1695.9,621.8 1700.2,599.9 1704.6,499.2 1708.9,468.5" fill="none" stroke="#B9A888" stroke-width="1.5" stroke-linejoin="round"/>
<polyline points="1092.8,619.5 1097.2,615.3 1101.5,613.6 1105.9,615.3 1110.2,610.2 1114.5,595.8 1118.9,566.9 1123.2,487.2 1127.5,375.9 1131.9,345.9 1136.2,497.4 1140.6,595.6 1144.9,612.1 1149.2,608.0 1153.6,604.2 1157.9,613.9 1162.3,607.5 1166.6,597.7 1170.9,576.0 1175.3,552.5 1179.6,418.7 1183.9,515.2 1188.3,550.8 1192.6,589.8 1197.0,608.0 1201.3,603.6 1205.6,614.2 1210.0,614.9 1214.3,611.2 1218.7,595.7 1223.0,582.6 1227.3,509.3 1231.7,367.3 1236.0,321.8 1240.3,339.6 1244.7,598.7 1249.0,613.7 1253.4,600.9 1257.7,613.4 1262.0,616.7 1266.4,612.3 1270.7,603.2 1275.1,580.3 1279.4,517.7 1283.7,409.2 1288.1,333.8 1292.4,446.7 1296.7,589.3 1301.1,600.3 1305.4,611.3 1309.8,604.4 1314.1,611.5 1318.4,616.1 1322.8,611.8 1327.1,605.4 1331.5,594.5 1335.8,533.0 1340.1,456.0 1344.5,458.4 1348.8,546.6 1353.1,599.7 1357.5,603.9 1361.8,606.4 1366.2,612.3 1370.5,613.7 1374.8,605.6 1379.2,600.7 1383.5,595.0 1387.9,452.4 1392.2,363.4 1396.5,352.2 1400.9,509.3 1405.2,599.9 1409.5,613.2 1413.9,608.4 1418.2,613.8 1422.6,618.2 1426.9,613.2 1431.2,598.7 1435.6,576.7 1439.9,446.0 1444.2,386.6 1448.6,353.2 1452.9,492.3 1457.3,592.4 1461.6,609.5 1465.9,607.5 1470.3,609.0 1474.6,617.3 1479.0,612.3 1483.3,607.1 1487.6,591.7 1492.0,551.7 1496.3,488.9 1500.6,495.7 1505.0,560.1 1509.3,589.4 1513.7,612.8 1518.0,606.3 1522.3,607.8 1526.7,614.0 1531.0,613.6 1535.4,603.7 1539.7,592.4 1544.0,446.1 1548.4,388.5 1552.7,346.6 1557.0,499.1 1561.4,597.1 1565.7,609.2 1570.1,600.6 1574.4,605.4 1578.7,613.9 1583.1,615.6 1587.4,607.6 1591.8,581.0 1596.1,543.2 1600.4,476.2 1604.8,479.6 1609.1,528.9 1613.4,590.4 1617.8,599.6 1622.1,608.8 1626.5,605.3 1630.8,614.8 1635.1,617.2 1639.5,606.4 1643.8,594.5 1648.2,577.4 1652.5,450.4 1656.8,374.2 1661.2,341.3 1665.5,495.7 1669.8,589.4 1674.2,611.4 1678.5,611.3 1682.9,613.1 1687.2,616.3 1691.5,608.8 1695.9,592.6 1700.2,580.7 1704.6,509.3 1708.9,431.2" fill="none" stroke="#DA8B45" stroke-width="1.5" stroke-linejoin="round"/>
<polyline points="1092.8,625.7 1097.2,626.9 1101.5,627.7 1105.9,627.8 1110.2,627.8 1114.5,627.1 1118.9,619.1 1123.2,555.1 1127.5,431.2 1131.9,559.4 1136.2,608.3 1140.6,622.6 1144.9,626.5 1149.2,627.2 1153.6,627.7 1157.9,627.9 1162.3,627.9 1166.6,627.4 1170.9,620.5 1175.3,583.3 1179.6,494.0 1183.9,584.1 1188.3,613.2 1192.6,623.5 1197.0,626.7 1201.3,627.4 1205.6,627.8 1210.0,627.9 1214.3,627.9 1218.7,627.6 1223.0,622.3 1227.3,593.2 1231.7,522.8 1236.0,463.8 1240.3,618.2 1244.7,624.9 1249.0,625.3 1253.4,626.6 1257.7,627.6 1262.0,627.8 1266.4,627.8 1270.7,627.2 1275.1,617.7 1279.4,558.8 1283.7,416.6 1288.1,556.5 1292.4,605.7 1296.7,621.1 1301.1,624.1 1305.4,627.2 1309.8,627.5 1314.1,627.8 1318.4,627.9 1322.8,627.9 1327.1,627.7 1331.5,624.0 1335.8,599.6 1340.1,550.0 1344.5,599.1 1348.8,620.6 1353.1,625.7 1357.5,625.6 1361.8,626.9 1366.2,627.6 1370.5,627.8 1374.8,627.8 1379.2,627.3 1383.5,618.0 1387.9,558.4 1392.2,434.1 1396.5,562.6 1400.9,607.4 1405.2,621.8 1409.5,626.1 1413.9,627.1 1418.2,627.7 1422.6,627.9 1426.9,627.9 1431.2,627.4 1435.6,620.7 1439.9,570.8 1444.2,466.8 1448.6,569.8 1452.9,613.7 1457.3,623.0 1461.6,627.3 1465.9,627.6 1470.3,627.9 1474.6,627.9 1479.0,627.9 1483.3,627.7 1487.6,625.0 1492.0,603.0 1496.3,565.2 1500.6,607.4 1505.0,621.2 1509.3,625.9 1513.7,625.5 1518.0,626.7 1522.3,627.6 1526.7,627.8 1531.0,627.8 1535.4,627.1 1539.7,617.1 1544.0,562.4 1548.4,429.9 1552.7,551.7 1557.0,606.1 1561.4,622.7 1565.7,626.6 1570.1,627.2 1574.4,627.8 1578.7,627.9 1583.1,627.9 1587.4,627.5 1591.8,622.6 1596.1,585.2 1600.4,509.3 1604.8,580.9 1609.1,617.0 1613.4,624.6 1617.8,625.3 1622.1,626.0 1626.5,627.0 1630.8,627.7 1635.1,627.8 1639.5,627.8 1643.8,627.3 1648.2,619.2 1652.5,561.7 1656.8,459.9 1661.2,572.3 1665.5,610.0 1669.8,623.4 1674.2,626.8 1678.5,627.4 1682.9,627.8 1687.2,627.9 1691.5,627.9 1695.9,627.6 1700.2,622.8 1704.6,596.8 1708.9,532.2" fill="none" stroke="#AA6556" stroke-width="1.5" stroke-linejoin="round"/>
<polyline points="1092.8,626.0 1097.2,627.1 1101.5,627.7 1105.9,627.8 1110.2,627.9 1114.5,627.3 1118.9,620.3 1123.2,575.5 1127.5,477.0 1131.9,570.2 1136.2,613.1 1140.6,623.8 1144.9,626.8 1149.2,627.5 1153.6,627.8 1157.9,627.9 1162.3,627.9 1166.6,627.6 1170.9,623.1 1175.3,591.8 1179.6,531.3 1183.9,594.8 1188.3,619.5 1192.6,625.4 1197.0,626.9 1201.3,627.4 1205.6,627.8 1210.0,627.9 1214.3,627.9 1218.7,627.6 1223.0,623.5 1227.3,591.9 1231.7,531.3 1236.0,597.2 1240.3,619.5 1244.7,625.2 1249.0,626.2 1253.4,627.0 1257.7,627.7 1262.0,627.8 1266.4,627.8 1270.7,627.4 1275.1,619.5 1279.4,569.1 1283.7,463.4 1288.1,574.0 1292.4,609.8 1296.7,623.4 1301.1,625.4 1305.4,627.3 1309.8,627.7 1314.1,627.9 1318.4,627.9 1322.8,627.9 1327.1,627.8 1331.5,625.2 1335.8,609.1 1340.1,568.6 1344.5,605.9 1348.8,622.0 1353.1,626.3 1357.5,626.6 1361.8,627.3 1366.2,627.8 1370.5,627.9 1374.8,627.9 1379.2,627.5 1383.5,623.0 1387.9,587.4 1392.2,516.0 1396.5,588.6 1400.9,617.5 1405.2,625.0 1409.5,626.8 1413.9,627.5 1418.2,627.8 1422.6,627.9 1426.9,627.9 1431.2,627.7 1435.6,623.2 1439.9,594.4 1444.2,534.7 1448.6,593.3 1452.9,618.0 1457.3,625.4 1461.6,627.1 1465.9,627.6 1470.3,627.9 1474.6,627.9 1479.0,627.9 1483.3,627.7 1487.6,624.6 1492.0,597.6 1496.3,550.0 1500.6,598.3 1505.0,620.3 1509.3,625.5 1513.7,626.2 1518.0,627.1 1522.3,627.7 1526.7,627.9 1531.0,627.9 1535.4,627.4 1539.7,619.9 1544.0,570.5 1548.4,475.3 1552.7,568.5 1557.0,612.0 1561.4,623.7 1565.7,626.8 1570.1,627.4 1574.4,627.8 1578.7,627.9 1583.1,627.9 1587.4,627.6 1591.8,622.7 1596.1,596.1 1600.4,533.0 1604.8,590.7 1609.1,619.6 1613.4,625.3 1617.8,625.8 1622.1,626.3 1626.5,627.0 1630.8,627.7 1635.1,627.8 1639.5,627.9 1643.8,627.3 1648.2,620.7 1652.5,576.5 1656.8,475.3 1661.2,567.7 1665.5,612.3 1669.8,623.2 1674.2,627.0 1678.5,627.5 1682.9,627.8 1687.2,627.9 1691.5,627.9 1695.9,627.6 1700.2,624.0 1704.6,597.1 1708.9,546.6" fill="none" stroke="#E7664C" stroke-width="1.5" stroke-linejoin="round"/>
<polyline points="1379.2,599.2 1383.5,579.8 1387.9,532.7" fill="none" stroke="#A5DACB" stroke-width="1.5" stroke-linejoin="round"/>
<polyline points="1431.2,626.3 1435.6,595.4 1439.9,545.2 1444.2,517.7 1448.6,530.5 1452.9,619.7 1457.3,624.6 1461.6,626.6 1465.9,627.2 1470.3,627.3 1474.6,627.5 1479.0,627.5 1483.3,627.2 1487.6,615.3 1492.0,564.0 1496.3,529.4 1500.6,572.9 1505.0,602.6 1509.3,621.2 1513.7,627.0 1518.0,627.3 1522.3,627.5 1526.7,627.5 1531.0,627.5 1535.4,627.3 1539.7,622.9 1544.0,588.0 1548.4,528.9 1552.7,518.9 1557.0,566.6 1561.4,600.5 1565.7,618.7" fill="none" stroke="#A5DACB" stroke-width="1.5" stroke-linejoin="round"/>
<line x1="1387.9" y1="532.7" x2="1431.2" y2="626.3" stroke="#A5DACB" stroke-width="1.5" stroke-dasharray="3 3"/>
<g fill="#fff" stroke="#54B399" stroke-width="1.4"><circle cx="1092.8" cy="589.8" r="2.3"/><circle cx="1097.2" cy="591.0" r="2.3"/><circle cx="1101.5" cy="592.3" r="2.3"/><circle cx="1105.9" cy="593.5" r="2.3"/><circle cx="1110.2" cy="594.7" r="2.3"/><circle cx="1114.5" cy="595.9" r="2.3"/><circle cx="1118.9" cy="597.1" r="2.3"/><circle cx="1123.2" cy="598.3" r="2.3"/><circle cx="1127.5" cy="597.5" r="2.3"/><circle cx="1131.9" cy="588.0" r="2.3"/><circle cx="1136.2" cy="589.1" r="2.3"/><circle cx="1140.6" cy="590.2" r="2.3"/><circle cx="1144.9" cy="591.3" r="2.3"/><circle cx="1149.2" cy="592.4" r="2.3"/><circle cx="1153.6" cy="593.6" r="2.3"/><circle cx="1157.9" cy="594.7" r="2.3"/><circle cx="1162.3" cy="595.8" r="2.3"/><circle cx="1166.6" cy="596.9" r="2.3"/><circle cx="1170.9" cy="598.0" r="2.3"/><circle cx="1175.3" cy="599.2" r="2.3"/><circle cx="1179.6" cy="594.1" r="2.3"/><circle cx="1183.9" cy="576.6" r="2.3"/><circle cx="1188.3" cy="577.7" r="2.3"/><circle cx="1192.6" cy="578.8" r="2.3"/><circle cx="1197.0" cy="580.0" r="2.3"/><circle cx="1201.3" cy="581.1" r="2.3"/><circle cx="1205.6" cy="582.2" r="2.3"/><circle cx="1210.0" cy="583.3" r="2.3"/><circle cx="1214.3" cy="584.4" r="2.3"/><circle cx="1218.7" cy="585.6" r="2.3"/><circle cx="1223.0" cy="586.7" r="2.3"/><circle cx="1227.3" cy="587.8" r="2.3"/><circle cx="1231.7" cy="582.2" r="2.3"/><circle cx="1236.0" cy="576.6" r="2.3"/><circle cx="1240.3" cy="577.7" r="2.3"/><circle cx="1244.7" cy="578.7" r="2.3"/><circle cx="1249.0" cy="579.8" r="2.3"/><circle cx="1253.4" cy="580.9" r="2.3"/><circle cx="1257.7" cy="581.9" r="2.3"/><circle cx="1262.0" cy="583.0" r="2.3"/><circle cx="1266.4" cy="584.1" r="2.3"/><circle cx="1270.7" cy="585.1" r="2.3"/><circle cx="1275.1" cy="586.2" r="2.3"/><circle cx="1279.4" cy="587.3" r="2.3"/><circle cx="1283.7" cy="578.8" r="2.3"/><circle cx="1288.1" cy="576.3" r="2.3"/><circle cx="1292.4" cy="577.0" r="2.3"/><circle cx="1296.7" cy="577.8" r="2.3"/><circle cx="1301.1" cy="578.2" r="2.3"/><circle cx="1305.4" cy="578.5" r="2.3"/><circle cx="1309.8" cy="579.3" r="2.3"/><circle cx="1314.1" cy="580.1" r="2.3"/><circle cx="1318.4" cy="580.8" r="2.3"/><circle cx="1322.8" cy="581.6" r="2.3"/><circle cx="1327.1" cy="582.4" r="2.3"/><circle cx="1331.5" cy="583.1" r="2.3"/><circle cx="1335.8" cy="583.9" r="2.3"/><circle cx="1340.1" cy="578.8" r="2.3"/><circle cx="1344.5" cy="575.4" r="2.3"/><circle cx="1348.8" cy="576.4" r="2.3"/><circle cx="1353.1" cy="577.5" r="2.3"/><circle cx="1357.5" cy="578.5" r="2.3"/><circle cx="1361.8" cy="579.6" r="2.3"/><circle cx="1366.2" cy="580.6" r="2.3"/><circle cx="1370.5" cy="581.6" r="2.3"/><circle cx="1374.8" cy="582.7" r="2.3"/><circle cx="1379.2" cy="583.7" r="2.3"/><circle cx="1383.5" cy="584.7" r="2.3"/><circle cx="1387.9" cy="580.5" r="2.3"/><circle cx="1392.2" cy="575.4" r="2.3"/><circle cx="1396.5" cy="576.1" r="2.3"/><circle cx="1400.9" cy="576.8" r="2.3"/><circle cx="1405.2" cy="577.4" r="2.3"/><circle cx="1409.5" cy="578.1" r="2.3"/><circle cx="1413.9" cy="578.8" r="2.3"/><circle cx="1418.2" cy="579.5" r="2.3"/><circle cx="1422.6" cy="580.2" r="2.3"/><circle cx="1426.9" cy="580.8" r="2.3"/><circle cx="1431.2" cy="581.5" r="2.3"/><circle cx="1435.6" cy="582.2" r="2.3"/><circle cx="1439.9" cy="579.2" r="2.3"/><circle cx="1444.2" cy="576.3" r="2.3"/><circle cx="1448.6" cy="574.6" r="2.3"/><circle cx="1452.9" cy="575.0" r="2.3"/><circle cx="1457.3" cy="575.4" r="2.3"/><circle cx="1461.6" cy="575.8" r="2.3"/><circle cx="1465.9" cy="576.3" r="2.3"/><circle cx="1470.3" cy="576.7" r="2.3"/><circle cx="1474.6" cy="577.1" r="2.3"/><circle cx="1479.0" cy="577.5" r="2.3"/><circle cx="1483.3" cy="578.0" r="2.3"/><circle cx="1487.6" cy="578.4" r="2.3"/><circle cx="1492.0" cy="578.8" r="2.3"/><circle cx="1496.3" cy="577.5" r="2.3"/><circle cx="1500.6" cy="576.3" r="2.3"/><circle cx="1505.0" cy="578.8" r="2.3"/><circle cx="1509.3" cy="581.3" r="2.3"/><circle cx="1513.7" cy="583.9" r="2.3"/><circle cx="1518.0" cy="587.3" r="2.3"/><circle cx="1522.3" cy="590.7" r="2.3"/><circle cx="1526.7" cy="592.2" r="2.3"/><circle cx="1531.0" cy="593.7" r="2.3"/><circle cx="1535.4" cy="595.3" r="2.3"/><circle cx="1539.7" cy="596.8" r="2.3"/><circle cx="1544.0" cy="598.3" r="2.3"/><circle cx="1548.4" cy="593.6" r="2.3"/><circle cx="1552.7" cy="589.0" r="2.3"/><circle cx="1557.0" cy="588.1" r="2.3"/><circle cx="1561.4" cy="587.3" r="2.3"/><circle cx="1565.7" cy="577.1" r="2.3"/><circle cx="1570.1" cy="578.4" r="2.3"/><circle cx="1574.4" cy="579.7" r="2.3"/><circle cx="1578.7" cy="580.9" r="2.3"/><circle cx="1583.1" cy="582.2" r="2.3"/><circle cx="1587.4" cy="583.5" r="2.3"/><circle cx="1591.8" cy="584.7" r="2.3"/><circle cx="1596.1" cy="586.0" r="2.3"/><circle cx="1600.4" cy="587.3" r="2.3"/><circle cx="1604.8" cy="578.8" r="2.3"/><circle cx="1609.1" cy="577.7" r="2.3"/><circle cx="1613.4" cy="576.5" r="2.3"/><circle cx="1617.8" cy="576.0" r="2.3"/><circle cx="1622.1" cy="575.4" r="2.3"/><circle cx="1626.5" cy="576.3" r="2.3"/><circle cx="1630.8" cy="577.1" r="2.3"/><circle cx="1635.1" cy="579.0" r="2.3"/><circle cx="1639.5" cy="580.8" r="2.3"/><circle cx="1643.8" cy="582.7" r="2.3"/><circle cx="1648.2" cy="584.6" r="2.3"/><circle cx="1652.5" cy="586.4" r="2.3"/><circle cx="1656.8" cy="581.8" r="2.3"/><circle cx="1661.2" cy="577.1" r="2.3"/><circle cx="1665.5" cy="576.0" r="2.3"/><circle cx="1669.8" cy="574.8" r="2.3"/><circle cx="1674.2" cy="573.7" r="2.3"/><circle cx="1678.5" cy="555.9" r="2.3"/><circle cx="1682.9" cy="556.8" r="2.3"/><circle cx="1687.2" cy="557.6" r="2.3"/><circle cx="1691.5" cy="555.1" r="2.3"/><circle cx="1695.9" cy="559.3" r="2.3"/><circle cx="1700.2" cy="555.9" r="2.3"/><circle cx="1704.6" cy="585.6" r="2.3"/><circle cx="1708.9" cy="593.2" r="2.3"/></g>
<g fill="#fff" stroke="#6092C0" stroke-width="1.4"><circle cx="1092.8" cy="599.8" r="2.3"/><circle cx="1097.2" cy="585.7" r="2.3"/><circle cx="1101.5" cy="581.6" r="2.3"/><circle cx="1105.9" cy="582.9" r="2.3"/><circle cx="1110.2" cy="576.9" r="2.3"/><circle cx="1114.5" cy="573.4" r="2.3"/><circle cx="1118.9" cy="554.8" r="2.3"/><circle cx="1123.2" cy="504.2" r="2.3"/><circle cx="1127.5" cy="417.1" r="2.3"/><circle cx="1131.9" cy="526.2" r="2.3"/><circle cx="1136.2" cy="581.4" r="2.3"/><circle cx="1140.6" cy="589.6" r="2.3"/><circle cx="1144.9" cy="586.9" r="2.3"/><circle cx="1149.2" cy="578.6" r="2.3"/><circle cx="1153.6" cy="577.9" r="2.3"/><circle cx="1157.9" cy="573.4" r="2.3"/><circle cx="1162.3" cy="569.3" r="2.3"/><circle cx="1166.6" cy="560.5" r="2.3"/><circle cx="1170.9" cy="550.0" r="2.3"/><circle cx="1175.3" cy="521.5" r="2.3"/><circle cx="1179.6" cy="475.0" r="2.3"/><circle cx="1183.9" cy="546.6" r="2.3"/><circle cx="1188.3" cy="578.2" r="2.3"/><circle cx="1192.6" cy="584.3" r="2.3"/><circle cx="1197.0" cy="589.0" r="2.3"/><circle cx="1201.3" cy="587.7" r="2.3"/><circle cx="1205.6" cy="579.4" r="2.3"/><circle cx="1210.0" cy="574.3" r="2.3"/><circle cx="1214.3" cy="575.6" r="2.3"/><circle cx="1218.7" cy="566.5" r="2.3"/><circle cx="1223.0" cy="538.4" r="2.3"/><circle cx="1227.3" cy="414.6" r="2.3"/><circle cx="1231.7" cy="341.3" r="2.3"/><circle cx="1236.0" cy="381.7" r="2.3"/><circle cx="1240.3" cy="517.7" r="2.3"/><circle cx="1244.7" cy="582.9" r="2.3"/><circle cx="1249.0" cy="584.4" r="2.3"/><circle cx="1253.4" cy="582.0" r="2.3"/><circle cx="1257.7" cy="577.1" r="2.3"/><circle cx="1262.0" cy="574.3" r="2.3"/><circle cx="1266.4" cy="572.0" r="2.3"/><circle cx="1270.7" cy="567.9" r="2.3"/><circle cx="1275.1" cy="538.8" r="2.3"/><circle cx="1279.4" cy="519.4" r="2.3"/><circle cx="1283.7" cy="335.2" r="2.3"/><circle cx="1288.1" cy="446.7" r="2.3"/><circle cx="1292.4" cy="566.2" r="2.3"/><circle cx="1296.7" cy="579.9" r="2.3"/><circle cx="1301.1" cy="584.8" r="2.3"/><circle cx="1305.4" cy="589.8" r="2.3"/><circle cx="1309.8" cy="587.5" r="2.3"/><circle cx="1314.1" cy="581.2" r="2.3"/><circle cx="1318.4" cy="583.3" r="2.3"/><circle cx="1322.8" cy="582.1" r="2.3"/><circle cx="1327.1" cy="570.1" r="2.3"/><circle cx="1331.5" cy="562.4" r="2.3"/><circle cx="1335.8" cy="494.0" r="2.3"/><circle cx="1340.1" cy="486.0" r="2.3"/><circle cx="1344.5" cy="543.2" r="2.3"/><circle cx="1348.8" cy="585.2" r="2.3"/><circle cx="1353.1" cy="588.8" r="2.3"/><circle cx="1357.5" cy="589.6" r="2.3"/><circle cx="1361.8" cy="588.5" r="2.3"/><circle cx="1366.2" cy="582.6" r="2.3"/><circle cx="1370.5" cy="578.1" r="2.3"/><circle cx="1374.8" cy="578.3" r="2.3"/><circle cx="1379.2" cy="569.3" r="2.3"/><circle cx="1383.5" cy="549.9" r="2.3"/><circle cx="1387.9" cy="439.4" r="2.3"/><circle cx="1392.2" cy="432.9" r="2.3"/><circle cx="1396.5" cy="519.4" r="2.3"/><circle cx="1400.9" cy="579.3" r="2.3"/><circle cx="1405.2" cy="585.2" r="2.3"/><circle cx="1409.5" cy="587.1" r="2.3"/><circle cx="1413.9" cy="581.1" r="2.3"/><circle cx="1418.2" cy="581.1" r="2.3"/><circle cx="1422.6" cy="580.3" r="2.3"/><circle cx="1426.9" cy="576.7" r="2.3"/><circle cx="1431.2" cy="566.1" r="2.3"/><circle cx="1435.6" cy="547.3" r="2.3"/><circle cx="1439.9" cy="467.5" r="2.3"/><circle cx="1444.2" cy="373.5" r="2.3"/><circle cx="1448.6" cy="439.4" r="2.3"/><circle cx="1452.9" cy="575.4" r="2.3"/><circle cx="1457.3" cy="582.3" r="2.3"/><circle cx="1461.6" cy="590.4" r="2.3"/><circle cx="1465.9" cy="585.7" r="2.3"/><circle cx="1470.3" cy="583.7" r="2.3"/><circle cx="1474.6" cy="578.1" r="2.3"/><circle cx="1479.0" cy="579.0" r="2.3"/><circle cx="1483.3" cy="570.7" r="2.3"/><circle cx="1487.6" cy="565.8" r="2.3"/><circle cx="1492.0" cy="539.8" r="2.3"/><circle cx="1496.3" cy="519.4" r="2.3"/><circle cx="1500.6" cy="555.1" r="2.3"/><circle cx="1505.0" cy="584.1" r="2.3"/><circle cx="1509.3" cy="592.8" r="2.3"/><circle cx="1513.7" cy="592.1" r="2.3"/><circle cx="1518.0" cy="584.1" r="2.3"/><circle cx="1522.3" cy="579.9" r="2.3"/><circle cx="1526.7" cy="583.4" r="2.3"/><circle cx="1531.0" cy="581.8" r="2.3"/><circle cx="1535.4" cy="575.2" r="2.3"/><circle cx="1539.7" cy="546.3" r="2.3"/><circle cx="1544.0" cy="492.3" r="2.3"/><circle cx="1548.4" cy="363.2" r="2.3"/><circle cx="1552.7" cy="466.0" r="2.3"/><circle cx="1557.0" cy="576.1" r="2.3"/><circle cx="1561.4" cy="584.7" r="2.3"/><circle cx="1565.7" cy="589.2" r="2.3"/><circle cx="1570.1" cy="580.2" r="2.3"/><circle cx="1574.4" cy="576.5" r="2.3"/><circle cx="1578.7" cy="572.8" r="2.3"/><circle cx="1583.1" cy="571.7" r="2.3"/><circle cx="1587.4" cy="566.6" r="2.3"/><circle cx="1591.8" cy="541.9" r="2.3"/><circle cx="1596.1" cy="499.1" r="2.3"/><circle cx="1600.4" cy="393.2" r="2.3"/><circle cx="1604.8" cy="492.3" r="2.3"/><circle cx="1609.1" cy="571.2" r="2.3"/><circle cx="1613.4" cy="582.5" r="2.3"/><circle cx="1617.8" cy="586.1" r="2.3"/><circle cx="1622.1" cy="589.8" r="2.3"/><circle cx="1626.5" cy="586.1" r="2.3"/><circle cx="1630.8" cy="582.7" r="2.3"/><circle cx="1635.1" cy="578.0" r="2.3"/><circle cx="1639.5" cy="575.0" r="2.3"/><circle cx="1643.8" cy="572.3" r="2.3"/><circle cx="1648.2" cy="539.6" r="2.3"/><circle cx="1652.5" cy="475.3" r="2.3"/><circle cx="1656.8" cy="333.8" r="2.3"/><circle cx="1661.2" cy="448.0" r="2.3"/><circle cx="1665.5" cy="570.2" r="2.3"/><circle cx="1669.8" cy="582.4" r="2.3"/><circle cx="1674.2" cy="587.9" r="2.3"/><circle cx="1678.5" cy="560.5" r="2.3"/><circle cx="1682.9" cy="557.6" r="2.3"/><circle cx="1687.2" cy="561.2" r="2.3"/><circle cx="1691.5" cy="555.4" r="2.3"/><circle cx="1695.9" cy="563.1" r="2.3"/><circle cx="1700.2" cy="559.6" r="2.3"/><circle cx="1704.6" cy="526.2" r="2.3"/><circle cx="1708.9" cy="487.2" r="2.3"/></g>
<g fill="#fff" stroke="#D36086" stroke-width="1.4"><circle cx="1092.8" cy="606.8" r="2.3"/><circle cx="1097.2" cy="593.2" r="2.3"/><circle cx="1101.5" cy="589.2" r="2.3"/><circle cx="1105.9" cy="589.0" r="2.3"/><circle cx="1110.2" cy="584.6" r="2.3"/><circle cx="1114.5" cy="582.7" r="2.3"/><circle cx="1118.9" cy="586.5" r="2.3"/><circle cx="1123.2" cy="593.2" r="2.3"/><circle cx="1127.5" cy="597.7" r="2.3"/><circle cx="1131.9" cy="596.9" r="2.3"/><circle cx="1136.2" cy="603.5" r="2.3"/><circle cx="1140.6" cy="602.5" r="2.3"/><circle cx="1144.9" cy="593.2" r="2.3"/><circle cx="1149.2" cy="586.7" r="2.3"/><circle cx="1153.6" cy="585.6" r="2.3"/><circle cx="1157.9" cy="582.3" r="2.3"/><circle cx="1162.3" cy="577.7" r="2.3"/><circle cx="1166.6" cy="573.5" r="2.3"/><circle cx="1170.9" cy="577.9" r="2.3"/><circle cx="1175.3" cy="588.4" r="2.3"/><circle cx="1179.6" cy="589.0" r="2.3"/><circle cx="1183.9" cy="593.8" r="2.3"/><circle cx="1188.3" cy="596.3" r="2.3"/><circle cx="1192.6" cy="597.6" r="2.3"/><circle cx="1197.0" cy="597.4" r="2.3"/><circle cx="1201.3" cy="593.0" r="2.3"/><circle cx="1205.6" cy="588.7" r="2.3"/><circle cx="1210.0" cy="584.0" r="2.3"/><circle cx="1214.3" cy="583.9" r="2.3"/><circle cx="1218.7" cy="579.6" r="2.3"/><circle cx="1223.0" cy="582.0" r="2.3"/><circle cx="1227.3" cy="592.0" r="2.3"/><circle cx="1231.7" cy="594.0" r="2.3"/><circle cx="1236.0" cy="596.8" r="2.3"/><circle cx="1240.3" cy="602.2" r="2.3"/><circle cx="1244.7" cy="600.7" r="2.3"/><circle cx="1249.0" cy="593.7" r="2.3"/><circle cx="1253.4" cy="590.0" r="2.3"/><circle cx="1257.7" cy="586.8" r="2.3"/><circle cx="1262.0" cy="582.9" r="2.3"/><circle cx="1266.4" cy="580.6" r="2.3"/><circle cx="1270.7" cy="578.4" r="2.3"/><circle cx="1275.1" cy="579.2" r="2.3"/><circle cx="1279.4" cy="588.9" r="2.3"/><circle cx="1283.7" cy="593.6" r="2.3"/><circle cx="1288.1" cy="593.2" r="2.3"/><circle cx="1292.4" cy="599.0" r="2.3"/><circle cx="1296.7" cy="596.6" r="2.3"/><circle cx="1301.1" cy="597.3" r="2.3"/><circle cx="1305.4" cy="598.1" r="2.3"/><circle cx="1309.8" cy="595.8" r="2.3"/><circle cx="1314.1" cy="589.8" r="2.3"/><circle cx="1318.4" cy="590.9" r="2.3"/><circle cx="1322.8" cy="587.2" r="2.3"/><circle cx="1327.1" cy="583.4" r="2.3"/><circle cx="1331.5" cy="588.3" r="2.3"/><circle cx="1335.8" cy="595.0" r="2.3"/><circle cx="1340.1" cy="599.3" r="2.3"/><circle cx="1344.5" cy="597.5" r="2.3"/><circle cx="1348.8" cy="601.9" r="2.3"/><circle cx="1353.1" cy="601.9" r="2.3"/><circle cx="1357.5" cy="595.9" r="2.3"/><circle cx="1361.8" cy="594.0" r="2.3"/><circle cx="1366.2" cy="589.0" r="2.3"/><circle cx="1370.5" cy="586.9" r="2.3"/><circle cx="1374.8" cy="584.4" r="2.3"/><circle cx="1379.2" cy="582.4" r="2.3"/><circle cx="1383.5" cy="583.4" r="2.3"/><circle cx="1387.9" cy="591.4" r="2.3"/><circle cx="1392.2" cy="595.9" r="2.3"/><circle cx="1396.5" cy="595.9" r="2.3"/><circle cx="1400.9" cy="603.5" r="2.3"/><circle cx="1405.2" cy="600.0" r="2.3"/><circle cx="1409.5" cy="595.3" r="2.3"/><circle cx="1413.9" cy="589.5" r="2.3"/><circle cx="1418.2" cy="586.6" r="2.3"/><circle cx="1422.6" cy="586.1" r="2.3"/><circle cx="1426.9" cy="583.0" r="2.3"/><circle cx="1431.2" cy="579.2" r="2.3"/><circle cx="1435.6" cy="584.5" r="2.3"/><circle cx="1439.9" cy="591.6" r="2.3"/><circle cx="1444.2" cy="595.5" r="2.3"/><circle cx="1448.6" cy="596.6" r="2.3"/><circle cx="1452.9" cy="602.2" r="2.3"/><circle cx="1457.3" cy="598.4" r="2.3"/><circle cx="1461.6" cy="599.0" r="2.3"/><circle cx="1465.9" cy="594.3" r="2.3"/><circle cx="1470.3" cy="590.3" r="2.3"/><circle cx="1474.6" cy="585.8" r="2.3"/><circle cx="1479.0" cy="586.4" r="2.3"/><circle cx="1483.3" cy="582.4" r="2.3"/><circle cx="1487.6" cy="584.5" r="2.3"/><circle cx="1492.0" cy="591.7" r="2.3"/><circle cx="1496.3" cy="594.5" r="2.3"/><circle cx="1500.6" cy="595.1" r="2.3"/><circle cx="1505.0" cy="602.6" r="2.3"/><circle cx="1509.3" cy="601.2" r="2.3"/><circle cx="1513.7" cy="599.6" r="2.3"/><circle cx="1518.0" cy="593.4" r="2.3"/><circle cx="1522.3" cy="589.9" r="2.3"/><circle cx="1526.7" cy="590.7" r="2.3"/><circle cx="1531.0" cy="588.2" r="2.3"/><circle cx="1535.4" cy="585.6" r="2.3"/><circle cx="1539.7" cy="588.0" r="2.3"/><circle cx="1544.0" cy="595.0" r="2.3"/><circle cx="1548.4" cy="597.0" r="2.3"/><circle cx="1552.7" cy="599.2" r="2.3"/><circle cx="1557.0" cy="605.0" r="2.3"/><circle cx="1561.4" cy="602.5" r="2.3"/><circle cx="1565.7" cy="594.9" r="2.3"/><circle cx="1570.1" cy="589.5" r="2.3"/><circle cx="1574.4" cy="584.2" r="2.3"/><circle cx="1578.7" cy="582.4" r="2.3"/><circle cx="1583.1" cy="580.4" r="2.3"/><circle cx="1587.4" cy="577.1" r="2.3"/><circle cx="1591.8" cy="579.7" r="2.3"/><circle cx="1596.1" cy="591.6" r="2.3"/><circle cx="1600.4" cy="590.9" r="2.3"/><circle cx="1604.8" cy="592.3" r="2.3"/><circle cx="1609.1" cy="597.6" r="2.3"/><circle cx="1613.4" cy="596.9" r="2.3"/><circle cx="1617.8" cy="596.7" r="2.3"/><circle cx="1622.1" cy="596.4" r="2.3"/><circle cx="1626.5" cy="591.9" r="2.3"/><circle cx="1630.8" cy="589.5" r="2.3"/><circle cx="1635.1" cy="584.7" r="2.3"/><circle cx="1639.5" cy="584.4" r="2.3"/><circle cx="1643.8" cy="581.7" r="2.3"/><circle cx="1648.2" cy="583.8" r="2.3"/><circle cx="1652.5" cy="592.9" r="2.3"/><circle cx="1656.8" cy="594.8" r="2.3"/><circle cx="1661.2" cy="596.9" r="2.3"/><circle cx="1665.5" cy="602.4" r="2.3"/><circle cx="1669.8" cy="600.9" r="2.3"/><circle cx="1674.2" cy="594.5" r="2.3"/><circle cx="1678.5" cy="588.6" r="2.3"/><circle cx="1682.9" cy="586.0" r="2.3"/><circle cx="1687.2" cy="579.7" r="2.3"/><circle cx="1691.5" cy="577.8" r="2.3"/><circle cx="1695.9" cy="576.8" r="2.3"/><circle cx="1700.2" cy="579.3" r="2.3"/><circle cx="1704.6" cy="588.6" r="2.3"/><circle cx="1708.9" cy="591.5" r="2.3"/></g>
<g fill="#fff" stroke="#9170B8" stroke-width="1.4"><circle cx="1092.8" cy="606.9" r="2.3"/><circle cx="1097.2" cy="591.0" r="2.3"/><circle cx="1101.5" cy="588.2" r="2.3"/><circle cx="1105.9" cy="587.1" r="2.3"/><circle cx="1110.2" cy="582.3" r="2.3"/><circle cx="1114.5" cy="579.7" r="2.3"/><circle cx="1118.9" cy="539.8" r="2.3"/><circle cx="1123.2" cy="438.0" r="2.3"/><circle cx="1127.5" cy="241.2" r="2.3"/><circle cx="1131.9" cy="391.9" r="2.3"/><circle cx="1136.2" cy="539.6" r="2.3"/><circle cx="1140.6" cy="591.2" r="2.3"/><circle cx="1144.9" cy="595.4" r="2.3"/><circle cx="1149.2" cy="588.0" r="2.3"/><circle cx="1153.6" cy="587.8" r="2.3"/><circle cx="1157.9" cy="581.4" r="2.3"/><circle cx="1162.3" cy="576.3" r="2.3"/><circle cx="1166.6" cy="567.2" r="2.3"/><circle cx="1170.9" cy="544.5" r="2.3"/><circle cx="1175.3" cy="515.2" r="2.3"/><circle cx="1179.6" cy="334.4" r="2.3"/><circle cx="1183.9" cy="501.4" r="2.3"/><circle cx="1188.3" cy="544.4" r="2.3"/><circle cx="1192.6" cy="586.5" r="2.3"/><circle cx="1197.0" cy="598.8" r="2.3"/><circle cx="1201.3" cy="590.7" r="2.3"/><circle cx="1205.6" cy="589.2" r="2.3"/><circle cx="1210.0" cy="584.0" r="2.3"/><circle cx="1214.3" cy="581.4" r="2.3"/><circle cx="1218.7" cy="573.6" r="2.3"/><circle cx="1223.0" cy="530.4" r="2.3"/><circle cx="1227.3" cy="351.5" r="2.3"/><circle cx="1231.7" cy="183.5" r="2.3"/><circle cx="1236.0" cy="193.7" r="2.3"/><circle cx="1240.3" cy="449.7" r="2.3"/><circle cx="1244.7" cy="588.3" r="2.3"/><circle cx="1249.0" cy="592.5" r="2.3"/><circle cx="1253.4" cy="592.5" r="2.3"/><circle cx="1257.7" cy="586.5" r="2.3"/><circle cx="1262.0" cy="583.2" r="2.3"/><circle cx="1266.4" cy="583.1" r="2.3"/><circle cx="1270.7" cy="575.0" r="2.3"/><circle cx="1275.1" cy="529.1" r="2.3"/><circle cx="1279.4" cy="505.0" r="2.3"/><circle cx="1283.7" cy="215.8" r="2.3"/><circle cx="1288.1" cy="255.3" r="2.3"/><circle cx="1292.4" cy="527.4" r="2.3"/><circle cx="1296.7" cy="581.8" r="2.3"/><circle cx="1301.1" cy="591.0" r="2.3"/><circle cx="1305.4" cy="600.1" r="2.3"/><circle cx="1309.8" cy="597.0" r="2.3"/><circle cx="1314.1" cy="592.1" r="2.3"/><circle cx="1318.4" cy="589.5" r="2.3"/><circle cx="1322.8" cy="588.4" r="2.3"/><circle cx="1327.1" cy="581.1" r="2.3"/><circle cx="1331.5" cy="558.5" r="2.3"/><circle cx="1335.8" cy="433.4" r="2.3"/><circle cx="1340.1" cy="375.9" r="2.3"/><circle cx="1344.5" cy="475.3" r="2.3"/><circle cx="1348.8" cy="560.9" r="2.3"/><circle cx="1353.1" cy="592.2" r="2.3"/><circle cx="1357.5" cy="595.6" r="2.3"/><circle cx="1361.8" cy="593.0" r="2.3"/><circle cx="1366.2" cy="591.1" r="2.3"/><circle cx="1370.5" cy="589.2" r="2.3"/><circle cx="1374.8" cy="583.5" r="2.3"/><circle cx="1379.2" cy="578.5" r="2.3"/><circle cx="1383.5" cy="539.5" r="2.3"/><circle cx="1387.9" cy="318.7" r="2.3"/><circle cx="1392.2" cy="244.6" r="2.3"/><circle cx="1396.5" cy="390.3" r="2.3"/><circle cx="1400.9" cy="540.4" r="2.3"/><circle cx="1405.2" cy="586.7" r="2.3"/><circle cx="1409.5" cy="597.5" r="2.3"/><circle cx="1413.9" cy="587.6" r="2.3"/><circle cx="1418.2" cy="586.8" r="2.3"/><circle cx="1422.6" cy="586.9" r="2.3"/><circle cx="1426.9" cy="582.8" r="2.3"/><circle cx="1431.2" cy="572.8" r="2.3"/><circle cx="1435.6" cy="532.6" r="2.3"/><circle cx="1439.9" cy="308.7" r="2.3"/><circle cx="1444.2" cy="185.2" r="2.3"/><circle cx="1448.6" cy="323.2" r="2.3"/><circle cx="1452.9" cy="528.9" r="2.3"/><circle cx="1457.3" cy="586.8" r="2.3"/><circle cx="1461.6" cy="601.3" r="2.3"/><circle cx="1465.9" cy="595.8" r="2.3"/><circle cx="1470.3" cy="591.2" r="2.3"/><circle cx="1474.6" cy="586.8" r="2.3"/><circle cx="1479.0" cy="585.1" r="2.3"/><circle cx="1483.3" cy="579.2" r="2.3"/><circle cx="1487.6" cy="562.0" r="2.3"/><circle cx="1492.0" cy="526.2" r="2.3"/><circle cx="1496.3" cy="440.4" r="2.3"/><circle cx="1500.6" cy="505.9" r="2.3"/><circle cx="1505.0" cy="572.0" r="2.3"/><circle cx="1509.3" cy="598.0" r="2.3"/><circle cx="1513.7" cy="598.4" r="2.3"/><circle cx="1518.0" cy="593.1" r="2.3"/><circle cx="1522.3" cy="591.5" r="2.3"/><circle cx="1526.7" cy="590.9" r="2.3"/><circle cx="1531.0" cy="586.0" r="2.3"/><circle cx="1535.4" cy="583.3" r="2.3"/><circle cx="1539.7" cy="539.8" r="2.3"/><circle cx="1544.0" cy="440.4" r="2.3"/><circle cx="1548.4" cy="239.5" r="2.3"/><circle cx="1552.7" cy="323.8" r="2.3"/><circle cx="1557.0" cy="539.5" r="2.3"/><circle cx="1561.4" cy="590.9" r="2.3"/><circle cx="1565.7" cy="594.0" r="2.3"/><circle cx="1570.1" cy="587.0" r="2.3"/><circle cx="1574.4" cy="585.0" r="2.3"/><circle cx="1578.7" cy="580.7" r="2.3"/><circle cx="1583.1" cy="579.3" r="2.3"/><circle cx="1587.4" cy="572.2" r="2.3"/><circle cx="1591.8" cy="543.4" r="2.3"/><circle cx="1596.1" cy="519.4" r="2.3"/><circle cx="1600.4" cy="321.3" r="2.3"/><circle cx="1604.8" cy="295.2" r="2.3"/><circle cx="1609.1" cy="547.6" r="2.3"/><circle cx="1613.4" cy="586.5" r="2.3"/><circle cx="1617.8" cy="592.1" r="2.3"/><circle cx="1622.1" cy="597.6" r="2.3"/><circle cx="1626.5" cy="593.6" r="2.3"/><circle cx="1630.8" cy="591.7" r="2.3"/><circle cx="1635.1" cy="583.0" r="2.3"/><circle cx="1639.5" cy="582.5" r="2.3"/><circle cx="1643.8" cy="576.6" r="2.3"/><circle cx="1648.2" cy="526.2" r="2.3"/><circle cx="1652.5" cy="382.4" r="2.3"/><circle cx="1656.8" cy="139.4" r="2.3"/><circle cx="1661.2" cy="295.2" r="2.3"/><circle cx="1665.5" cy="521.1" r="2.3"/><circle cx="1669.8" cy="586.5" r="2.3"/><circle cx="1674.2" cy="595.7" r="2.3"/><circle cx="1678.5" cy="586.2" r="2.3"/><circle cx="1682.9" cy="583.6" r="2.3"/><circle cx="1687.2" cy="579.4" r="2.3"/><circle cx="1691.5" cy="579.1" r="2.3"/><circle cx="1695.9" cy="570.1" r="2.3"/><circle cx="1700.2" cy="544.2" r="2.3"/><circle cx="1704.6" cy="409.8" r="2.3"/><circle cx="1708.9" cy="327.6" r="2.3"/></g>
<g fill="#fff" stroke="#CA8EAE" stroke-width="1.4"><circle cx="1092.8" cy="606.2" r="2.3"/><circle cx="1097.2" cy="588.9" r="2.3"/><circle cx="1101.5" cy="584.2" r="2.3"/><circle cx="1105.9" cy="586.7" r="2.3"/><circle cx="1110.2" cy="582.1" r="2.3"/><circle cx="1114.5" cy="578.1" r="2.3"/><circle cx="1118.9" cy="524.5" r="2.3"/><circle cx="1123.2" cy="445.0" r="2.3"/><circle cx="1127.5" cy="243.8" r="2.3"/><circle cx="1131.9" cy="450.9" r="2.3"/><circle cx="1136.2" cy="552.7" r="2.3"/><circle cx="1140.6" cy="590.9" r="2.3"/><circle cx="1144.9" cy="588.4" r="2.3"/><circle cx="1149.2" cy="584.0" r="2.3"/><circle cx="1153.6" cy="584.9" r="2.3"/><circle cx="1157.9" cy="579.5" r="2.3"/><circle cx="1162.3" cy="577.6" r="2.3"/><circle cx="1166.6" cy="566.6" r="2.3"/><circle cx="1170.9" cy="520.7" r="2.3"/><circle cx="1175.3" cy="500.1" r="2.3"/><circle cx="1179.6" cy="301.3" r="2.3"/><circle cx="1183.9" cy="516.5" r="2.3"/><circle cx="1188.3" cy="552.0" r="2.3"/><circle cx="1192.6" cy="587.0" r="2.3"/><circle cx="1197.0" cy="593.5" r="2.3"/><circle cx="1201.3" cy="590.3" r="2.3"/><circle cx="1205.6" cy="584.7" r="2.3"/><circle cx="1210.0" cy="582.3" r="2.3"/><circle cx="1214.3" cy="582.7" r="2.3"/><circle cx="1218.7" cy="571.2" r="2.3"/><circle cx="1223.0" cy="505.3" r="2.3"/><circle cx="1227.3" cy="340.1" r="2.3"/><circle cx="1231.7" cy="180.2" r="2.3"/><circle cx="1236.0" cy="195.4" r="2.3"/><circle cx="1240.3" cy="458.4" r="2.3"/><circle cx="1244.7" cy="586.1" r="2.3"/><circle cx="1249.0" cy="591.0" r="2.3"/><circle cx="1253.4" cy="588.2" r="2.3"/><circle cx="1257.7" cy="586.6" r="2.3"/><circle cx="1262.0" cy="582.7" r="2.3"/><circle cx="1266.4" cy="579.2" r="2.3"/><circle cx="1270.7" cy="572.9" r="2.3"/><circle cx="1275.1" cy="500.8" r="2.3"/><circle cx="1279.4" cy="500.1" r="2.3"/><circle cx="1283.7" cy="159.8" r="2.3"/><circle cx="1288.1" cy="285.0" r="2.3"/><circle cx="1292.4" cy="533.1" r="2.3"/><circle cx="1296.7" cy="577.7" r="2.3"/><circle cx="1301.1" cy="587.0" r="2.3"/><circle cx="1305.4" cy="596.2" r="2.3"/><circle cx="1309.8" cy="594.7" r="2.3"/><circle cx="1314.1" cy="588.6" r="2.3"/><circle cx="1318.4" cy="589.9" r="2.3"/><circle cx="1322.8" cy="586.2" r="2.3"/><circle cx="1327.1" cy="576.0" r="2.3"/><circle cx="1331.5" cy="546.6" r="2.3"/><circle cx="1335.8" cy="440.0" r="2.3"/><circle cx="1340.1" cy="396.1" r="2.3"/><circle cx="1344.5" cy="499.1" r="2.3"/><circle cx="1348.8" cy="567.7" r="2.3"/><circle cx="1353.1" cy="594.5" r="2.3"/><circle cx="1357.5" cy="592.6" r="2.3"/><circle cx="1361.8" cy="589.4" r="2.3"/><circle cx="1366.2" cy="585.1" r="2.3"/><circle cx="1370.5" cy="583.1" r="2.3"/><circle cx="1374.8" cy="582.0" r="2.3"/><circle cx="1379.2" cy="577.2" r="2.3"/><circle cx="1383.5" cy="514.2" r="2.3"/><circle cx="1387.9" cy="305.0" r="2.3"/><circle cx="1392.2" cy="220.9" r="2.3"/><circle cx="1396.5" cy="437.5" r="2.3"/><circle cx="1400.9" cy="548.6" r="2.3"/><circle cx="1405.2" cy="585.8" r="2.3"/><circle cx="1409.5" cy="590.5" r="2.3"/><circle cx="1413.9" cy="585.8" r="2.3"/><circle cx="1418.2" cy="585.7" r="2.3"/><circle cx="1422.6" cy="585.5" r="2.3"/><circle cx="1426.9" cy="582.3" r="2.3"/><circle cx="1431.2" cy="570.4" r="2.3"/><circle cx="1435.6" cy="510.1" r="2.3"/><circle cx="1439.9" cy="315.5" r="2.3"/><circle cx="1444.2" cy="188.6" r="2.3"/><circle cx="1448.6" cy="364.5" r="2.3"/><circle cx="1452.9" cy="541.7" r="2.3"/><circle cx="1457.3" cy="583.4" r="2.3"/><circle cx="1461.6" cy="596.2" r="2.3"/><circle cx="1465.9" cy="593.6" r="2.3"/><circle cx="1470.3" cy="590.2" r="2.3"/><circle cx="1474.6" cy="580.8" r="2.3"/><circle cx="1479.0" cy="583.1" r="2.3"/><circle cx="1483.3" cy="575.5" r="2.3"/><circle cx="1487.6" cy="548.7" r="2.3"/><circle cx="1492.0" cy="517.7" r="2.3"/><circle cx="1496.3" cy="433.4" r="2.3"/><circle cx="1500.6" cy="519.4" r="2.3"/><circle cx="1505.0" cy="576.2" r="2.3"/><circle cx="1509.3" cy="594.1" r="2.3"/><circle cx="1513.7" cy="598.1" r="2.3"/><circle cx="1518.0" cy="592.2" r="2.3"/><circle cx="1522.3" cy="586.9" r="2.3"/><circle cx="1526.7" cy="589.4" r="2.3"/><circle cx="1531.0" cy="586.1" r="2.3"/><circle cx="1535.4" cy="580.7" r="2.3"/><circle cx="1539.7" cy="514.1" r="2.3"/><circle cx="1544.0" cy="433.6" r="2.3"/><circle cx="1548.4" cy="195.4" r="2.3"/><circle cx="1552.7" cy="357.8" r="2.3"/><circle cx="1557.0" cy="544.2" r="2.3"/><circle cx="1561.4" cy="587.4" r="2.3"/><circle cx="1565.7" cy="590.3" r="2.3"/><circle cx="1570.1" cy="586.9" r="2.3"/><circle cx="1574.4" cy="581.5" r="2.3"/><circle cx="1578.7" cy="579.8" r="2.3"/><circle cx="1583.1" cy="580.3" r="2.3"/><circle cx="1587.4" cy="570.7" r="2.3"/><circle cx="1591.8" cy="516.9" r="2.3"/><circle cx="1596.1" cy="509.3" r="2.3"/><circle cx="1600.4" cy="241.2" r="2.3"/><circle cx="1604.8" cy="334.4" r="2.3"/><circle cx="1609.1" cy="544.9" r="2.3"/><circle cx="1613.4" cy="581.6" r="2.3"/><circle cx="1617.8" cy="587.6" r="2.3"/><circle cx="1622.1" cy="593.5" r="2.3"/><circle cx="1626.5" cy="590.2" r="2.3"/><circle cx="1630.8" cy="586.9" r="2.3"/><circle cx="1635.1" cy="581.9" r="2.3"/><circle cx="1639.5" cy="580.4" r="2.3"/><circle cx="1643.8" cy="576.9" r="2.3"/><circle cx="1648.2" cy="501.9" r="2.3"/><circle cx="1652.5" cy="359.6" r="2.3"/><circle cx="1656.8" cy="134.3" r="2.3"/><circle cx="1661.2" cy="354.7" r="2.3"/><circle cx="1665.5" cy="535.7" r="2.3"/><circle cx="1669.8" cy="583.3" r="2.3"/><circle cx="1674.2" cy="590.6" r="2.3"/><circle cx="1678.5" cy="583.9" r="2.3"/><circle cx="1682.9" cy="583.8" r="2.3"/><circle cx="1687.2" cy="576.5" r="2.3"/><circle cx="1691.5" cy="575.2" r="2.3"/><circle cx="1695.9" cy="569.9" r="2.3"/><circle cx="1700.2" cy="528.2" r="2.3"/><circle cx="1704.6" cy="405.4" r="2.3"/><circle cx="1708.9" cy="330.8" r="2.3"/></g>
<g fill="#fff" stroke="#D6BF57" stroke-width="1.4"><circle cx="1092.8" cy="621.9" r="2.3"/><circle cx="1097.2" cy="623.6" r="2.3"/><circle cx="1101.5" cy="625.1" r="2.3"/><circle cx="1105.9" cy="625.6" r="2.3"/><circle cx="1110.2" cy="625.9" r="2.3"/><circle cx="1114.5" cy="622.9" r="2.3"/><circle cx="1118.9" cy="608.0" r="2.3"/><circle cx="1123.2" cy="531.3" r="2.3"/><circle cx="1127.5" cy="509.3" r="2.3"/><circle cx="1131.9" cy="566.6" r="2.3"/><circle cx="1136.2" cy="605.4" r="2.3"/><circle cx="1140.6" cy="618.3" r="2.3"/><circle cx="1144.9" cy="620.5" r="2.3"/><circle cx="1149.2" cy="622.2" r="2.3"/><circle cx="1153.6" cy="623.8" r="2.3"/><circle cx="1157.9" cy="625.1" r="2.3"/><circle cx="1162.3" cy="625.1" r="2.3"/><circle cx="1166.6" cy="621.6" r="2.3"/><circle cx="1170.9" cy="598.7" r="2.3"/><circle cx="1175.3" cy="513.2" r="2.3"/><circle cx="1179.6" cy="468.5" r="2.3"/><circle cx="1183.9" cy="553.6" r="2.3"/><circle cx="1188.3" cy="595.3" r="2.3"/><circle cx="1192.6" cy="615.3" r="2.3"/><circle cx="1197.0" cy="620.5" r="2.3"/><circle cx="1201.3" cy="622.5" r="2.3"/><circle cx="1205.6" cy="623.6" r="2.3"/><circle cx="1210.0" cy="624.7" r="2.3"/><circle cx="1214.3" cy="624.6" r="2.3"/><circle cx="1218.7" cy="621.7" r="2.3"/><circle cx="1223.0" cy="601.4" r="2.3"/><circle cx="1227.3" cy="518.3" r="2.3"/><circle cx="1231.7" cy="470.2" r="2.3"/><circle cx="1236.0" cy="540.4" r="2.3"/><circle cx="1240.3" cy="594.9" r="2.3"/><circle cx="1244.7" cy="614.5" r="2.3"/><circle cx="1249.0" cy="617.8" r="2.3"/><circle cx="1253.4" cy="620.0" r="2.3"/><circle cx="1257.7" cy="622.0" r="2.3"/><circle cx="1262.0" cy="623.5" r="2.3"/><circle cx="1266.4" cy="623.7" r="2.3"/><circle cx="1270.7" cy="618.5" r="2.3"/><circle cx="1275.1" cy="582.5" r="2.3"/><circle cx="1279.4" cy="469.3" r="2.3"/><circle cx="1283.7" cy="398.5" r="2.3"/><circle cx="1288.1" cy="526.1" r="2.3"/><circle cx="1292.4" cy="583.9" r="2.3"/><circle cx="1296.7" cy="607.7" r="2.3"/><circle cx="1301.1" cy="613.3" r="2.3"/><circle cx="1305.4" cy="618.8" r="2.3"/><circle cx="1309.8" cy="622.3" r="2.3"/><circle cx="1314.1" cy="623.3" r="2.3"/><circle cx="1318.4" cy="624.3" r="2.3"/><circle cx="1322.8" cy="624.5" r="2.3"/><circle cx="1327.1" cy="621.4" r="2.3"/><circle cx="1331.5" cy="592.6" r="2.3"/><circle cx="1335.8" cy="503.1" r="2.3"/><circle cx="1340.1" cy="451.2" r="2.3"/><circle cx="1344.5" cy="532.8" r="2.3"/><circle cx="1348.8" cy="594.9" r="2.3"/><circle cx="1353.1" cy="613.2" r="2.3"/><circle cx="1357.5" cy="618.9" r="2.3"/><circle cx="1361.8" cy="622.3" r="2.3"/><circle cx="1366.2" cy="623.3" r="2.3"/><circle cx="1370.5" cy="624.6" r="2.3"/><circle cx="1374.8" cy="624.8" r="2.3"/><circle cx="1379.2" cy="621.6" r="2.3"/><circle cx="1383.5" cy="597.8" r="2.3"/><circle cx="1387.9" cy="460.6" r="2.3"/><circle cx="1392.2" cy="456.7" r="2.3"/><circle cx="1396.5" cy="533.1" r="2.3"/><circle cx="1400.9" cy="596.6" r="2.3"/><circle cx="1405.2" cy="613.0" r="2.3"/><circle cx="1409.5" cy="619.8" r="2.3"/><circle cx="1413.9" cy="621.2" r="2.3"/><circle cx="1418.2" cy="624.0" r="2.3"/><circle cx="1422.6" cy="624.9" r="2.3"/><circle cx="1426.9" cy="624.9" r="2.3"/><circle cx="1431.2" cy="621.2" r="2.3"/><circle cx="1435.6" cy="593.4" r="2.3"/><circle cx="1439.9" cy="486.1" r="2.3"/><circle cx="1444.2" cy="452.4" r="2.3"/><circle cx="1448.6" cy="535.3" r="2.3"/><circle cx="1452.9" cy="588.7" r="2.3"/><circle cx="1457.3" cy="610.6" r="2.3"/><circle cx="1461.6" cy="621.8" r="2.3"/><circle cx="1465.9" cy="623.8" r="2.3"/><circle cx="1470.3" cy="624.4" r="2.3"/><circle cx="1474.6" cy="625.3" r="2.3"/><circle cx="1479.0" cy="625.7" r="2.3"/><circle cx="1483.3" cy="622.6" r="2.3"/><circle cx="1487.6" cy="605.5" r="2.3"/><circle cx="1492.0" cy="535.5" r="2.3"/><circle cx="1496.3" cy="499.1" r="2.3"/><circle cx="1500.6" cy="566.1" r="2.3"/><circle cx="1505.0" cy="604.3" r="2.3"/><circle cx="1509.3" cy="617.8" r="2.3"/><circle cx="1513.7" cy="616.8" r="2.3"/><circle cx="1518.0" cy="620.0" r="2.3"/><circle cx="1522.3" cy="621.4" r="2.3"/><circle cx="1526.7" cy="623.7" r="2.3"/><circle cx="1531.0" cy="622.7" r="2.3"/><circle cx="1535.4" cy="619.2" r="2.3"/><circle cx="1539.7" cy="586.8" r="2.3"/><circle cx="1544.0" cy="439.1" r="2.3"/><circle cx="1548.4" cy="391.0" r="2.3"/><circle cx="1552.7" cy="500.3" r="2.3"/><circle cx="1557.0" cy="581.4" r="2.3"/><circle cx="1561.4" cy="609.0" r="2.3"/><circle cx="1565.7" cy="619.2" r="2.3"/><circle cx="1570.1" cy="622.0" r="2.3"/><circle cx="1574.4" cy="623.1" r="2.3"/><circle cx="1578.7" cy="624.7" r="2.3"/><circle cx="1583.1" cy="624.6" r="2.3"/><circle cx="1587.4" cy="620.2" r="2.3"/><circle cx="1591.8" cy="599.6" r="2.3"/><circle cx="1596.1" cy="499.0" r="2.3"/><circle cx="1600.4" cy="449.9" r="2.3"/><circle cx="1604.8" cy="532.3" r="2.3"/><circle cx="1609.1" cy="590.1" r="2.3"/><circle cx="1613.4" cy="613.7" r="2.3"/><circle cx="1617.8" cy="616.0" r="2.3"/><circle cx="1622.1" cy="618.3" r="2.3"/><circle cx="1626.5" cy="621.2" r="2.3"/><circle cx="1630.8" cy="622.0" r="2.3"/><circle cx="1635.1" cy="623.9" r="2.3"/><circle cx="1639.5" cy="623.4" r="2.3"/><circle cx="1643.8" cy="618.4" r="2.3"/><circle cx="1648.2" cy="590.2" r="2.3"/><circle cx="1652.5" cy="420.4" r="2.3"/><circle cx="1656.8" cy="409.3" r="2.3"/><circle cx="1661.2" cy="506.7" r="2.3"/><circle cx="1665.5" cy="583.0" r="2.3"/><circle cx="1669.8" cy="609.4" r="2.3"/><circle cx="1674.2" cy="619.1" r="2.3"/><circle cx="1678.5" cy="622.4" r="2.3"/><circle cx="1682.9" cy="624.0" r="2.3"/><circle cx="1687.2" cy="625.0" r="2.3"/><circle cx="1691.5" cy="624.4" r="2.3"/><circle cx="1695.9" cy="620.6" r="2.3"/><circle cx="1700.2" cy="596.7" r="2.3"/><circle cx="1704.6" cy="490.2" r="2.3"/><circle cx="1708.9" cy="459.7" r="2.3"/></g>
<g fill="#fff" stroke="#B9A888" stroke-width="1.4"><circle cx="1092.8" cy="623.4" r="2.3"/><circle cx="1097.2" cy="624.6" r="2.3"/><circle cx="1101.5" cy="625.4" r="2.3"/><circle cx="1105.9" cy="625.7" r="2.3"/><circle cx="1110.2" cy="625.7" r="2.3"/><circle cx="1114.5" cy="624.0" r="2.3"/><circle cx="1118.9" cy="608.5" r="2.3"/><circle cx="1123.2" cy="544.1" r="2.3"/><circle cx="1127.5" cy="512.6" r="2.3"/><circle cx="1131.9" cy="570.4" r="2.3"/><circle cx="1136.2" cy="602.6" r="2.3"/><circle cx="1140.6" cy="618.4" r="2.3"/><circle cx="1144.9" cy="620.1" r="2.3"/><circle cx="1149.2" cy="622.5" r="2.3"/><circle cx="1153.6" cy="624.0" r="2.3"/><circle cx="1157.9" cy="624.9" r="2.3"/><circle cx="1162.3" cy="625.0" r="2.3"/><circle cx="1166.6" cy="622.4" r="2.3"/><circle cx="1170.9" cy="599.8" r="2.3"/><circle cx="1175.3" cy="510.9" r="2.3"/><circle cx="1179.6" cy="464.3" r="2.3"/><circle cx="1183.9" cy="540.6" r="2.3"/><circle cx="1188.3" cy="598.6" r="2.3"/><circle cx="1192.6" cy="614.3" r="2.3"/><circle cx="1197.0" cy="620.7" r="2.3"/><circle cx="1201.3" cy="623.5" r="2.3"/><circle cx="1205.6" cy="624.9" r="2.3"/><circle cx="1210.0" cy="625.6" r="2.3"/><circle cx="1214.3" cy="625.2" r="2.3"/><circle cx="1218.7" cy="622.7" r="2.3"/><circle cx="1223.0" cy="597.4" r="2.3"/><circle cx="1227.3" cy="504.6" r="2.3"/><circle cx="1231.7" cy="475.3" r="2.3"/><circle cx="1236.0" cy="542.7" r="2.3"/><circle cx="1240.3" cy="599.2" r="2.3"/><circle cx="1244.7" cy="615.6" r="2.3"/><circle cx="1249.0" cy="620.2" r="2.3"/><circle cx="1253.4" cy="622.0" r="2.3"/><circle cx="1257.7" cy="623.5" r="2.3"/><circle cx="1262.0" cy="624.6" r="2.3"/><circle cx="1266.4" cy="624.8" r="2.3"/><circle cx="1270.7" cy="621.2" r="2.3"/><circle cx="1275.1" cy="592.6" r="2.3"/><circle cx="1279.4" cy="480.5" r="2.3"/><circle cx="1283.7" cy="436.6" r="2.3"/><circle cx="1288.1" cy="526.6" r="2.3"/><circle cx="1292.4" cy="586.5" r="2.3"/><circle cx="1296.7" cy="610.1" r="2.3"/><circle cx="1301.1" cy="615.7" r="2.3"/><circle cx="1305.4" cy="621.4" r="2.3"/><circle cx="1309.8" cy="622.5" r="2.3"/><circle cx="1314.1" cy="624.5" r="2.3"/><circle cx="1318.4" cy="625.0" r="2.3"/><circle cx="1322.8" cy="625.2" r="2.3"/><circle cx="1327.1" cy="621.8" r="2.3"/><circle cx="1331.5" cy="601.0" r="2.3"/><circle cx="1335.8" cy="515.6" r="2.3"/><circle cx="1340.1" cy="466.3" r="2.3"/><circle cx="1344.5" cy="552.1" r="2.3"/><circle cx="1348.8" cy="598.4" r="2.3"/><circle cx="1353.1" cy="612.1" r="2.3"/><circle cx="1357.5" cy="621.0" r="2.3"/><circle cx="1361.8" cy="623.4" r="2.3"/><circle cx="1366.2" cy="624.7" r="2.3"/><circle cx="1370.5" cy="624.9" r="2.3"/><circle cx="1374.8" cy="625.2" r="2.3"/><circle cx="1379.2" cy="622.9" r="2.3"/><circle cx="1383.5" cy="598.5" r="2.3"/><circle cx="1387.9" cy="510.9" r="2.3"/><circle cx="1392.2" cy="475.3" r="2.3"/><circle cx="1396.5" cy="542.7" r="2.3"/><circle cx="1400.9" cy="600.4" r="2.3"/><circle cx="1405.2" cy="614.3" r="2.3"/><circle cx="1409.5" cy="619.3" r="2.3"/><circle cx="1413.9" cy="621.9" r="2.3"/><circle cx="1418.2" cy="623.5" r="2.3"/><circle cx="1422.6" cy="625.1" r="2.3"/><circle cx="1426.9" cy="624.9" r="2.3"/><circle cx="1431.2" cy="622.1" r="2.3"/><circle cx="1435.6" cy="598.0" r="2.3"/><circle cx="1439.9" cy="479.6" r="2.3"/><circle cx="1444.2" cy="447.8" r="2.3"/><circle cx="1448.6" cy="536.1" r="2.3"/><circle cx="1452.9" cy="588.2" r="2.3"/><circle cx="1457.3" cy="612.3" r="2.3"/><circle cx="1461.6" cy="621.9" r="2.3"/><circle cx="1465.9" cy="624.1" r="2.3"/><circle cx="1470.3" cy="625.3" r="2.3"/><circle cx="1474.6" cy="625.6" r="2.3"/><circle cx="1479.0" cy="625.5" r="2.3"/><circle cx="1483.3" cy="623.9" r="2.3"/><circle cx="1487.6" cy="604.9" r="2.3"/><circle cx="1492.0" cy="532.4" r="2.3"/><circle cx="1496.3" cy="502.5" r="2.3"/><circle cx="1500.6" cy="569.5" r="2.3"/><circle cx="1505.0" cy="603.7" r="2.3"/><circle cx="1509.3" cy="617.7" r="2.3"/><circle cx="1513.7" cy="620.3" r="2.3"/><circle cx="1518.0" cy="622.5" r="2.3"/><circle cx="1522.3" cy="623.8" r="2.3"/><circle cx="1526.7" cy="624.6" r="2.3"/><circle cx="1531.0" cy="624.9" r="2.3"/><circle cx="1535.4" cy="622.2" r="2.3"/><circle cx="1539.7" cy="596.3" r="2.3"/><circle cx="1544.0" cy="486.1" r="2.3"/><circle cx="1548.4" cy="444.1" r="2.3"/><circle cx="1552.7" cy="543.0" r="2.3"/><circle cx="1557.0" cy="592.9" r="2.3"/><circle cx="1561.4" cy="612.6" r="2.3"/><circle cx="1565.7" cy="619.8" r="2.3"/><circle cx="1570.1" cy="622.6" r="2.3"/><circle cx="1574.4" cy="624.6" r="2.3"/><circle cx="1578.7" cy="625.2" r="2.3"/><circle cx="1583.1" cy="625.0" r="2.3"/><circle cx="1587.4" cy="621.8" r="2.3"/><circle cx="1591.8" cy="596.4" r="2.3"/><circle cx="1596.1" cy="514.8" r="2.3"/><circle cx="1600.4" cy="458.4" r="2.3"/><circle cx="1604.8" cy="550.0" r="2.3"/><circle cx="1609.1" cy="592.5" r="2.3"/><circle cx="1613.4" cy="613.1" r="2.3"/><circle cx="1617.8" cy="616.8" r="2.3"/><circle cx="1622.1" cy="620.5" r="2.3"/><circle cx="1626.5" cy="622.7" r="2.3"/><circle cx="1630.8" cy="623.6" r="2.3"/><circle cx="1635.1" cy="625.0" r="2.3"/><circle cx="1639.5" cy="624.8" r="2.3"/><circle cx="1643.8" cy="621.9" r="2.3"/><circle cx="1648.2" cy="596.8" r="2.3"/><circle cx="1652.5" cy="430.9" r="2.3"/><circle cx="1656.8" cy="451.2" r="2.3"/><circle cx="1661.2" cy="529.1" r="2.3"/><circle cx="1665.5" cy="593.8" r="2.3"/><circle cx="1669.8" cy="613.2" r="2.3"/><circle cx="1674.2" cy="620.4" r="2.3"/><circle cx="1678.5" cy="623.3" r="2.3"/><circle cx="1682.9" cy="624.8" r="2.3"/><circle cx="1687.2" cy="624.9" r="2.3"/><circle cx="1691.5" cy="625.2" r="2.3"/><circle cx="1695.9" cy="621.8" r="2.3"/><circle cx="1700.2" cy="599.9" r="2.3"/><circle cx="1704.6" cy="499.2" r="2.3"/><circle cx="1708.9" cy="468.5" r="2.3"/></g>
<g fill="#fff" stroke="#DA8B45" stroke-width="1.4"><circle cx="1092.8" cy="619.5" r="2.3"/><circle cx="1097.2" cy="615.3" r="2.3"/><circle cx="1101.5" cy="613.6" r="2.3"/><circle cx="1105.9" cy="615.3" r="2.3"/><circle cx="1110.2" cy="610.2" r="2.3"/><circle cx="1114.5" cy="595.8" r="2.3"/><circle cx="1118.9" cy="566.9" r="2.3"/><circle cx="1123.2" cy="487.2" r="2.3"/><circle cx="1127.5" cy="375.9" r="2.3"/><circle cx="1131.9" cy="345.9" r="2.3"/><circle cx="1136.2" cy="497.4" r="2.3"/><circle cx="1140.6" cy="595.6" r="2.3"/><circle cx="1144.9" cy="612.1" r="2.3"/><circle cx="1149.2" cy="608.0" r="2.3"/><circle cx="1153.6" cy="604.2" r="2.3"/><circle cx="1157.9" cy="613.9" r="2.3"/><circle cx="1162.3" cy="607.5" r="2.3"/><circle cx="1166.6" cy="597.7" r="2.3"/><circle cx="1170.9" cy="576.0" r="2.3"/><circle cx="1175.3" cy="552.5" r="2.3"/><circle cx="1179.6" cy="418.7" r="2.3"/><circle cx="1183.9" cy="515.2" r="2.3"/><circle cx="1188.3" cy="550.8" r="2.3"/><circle cx="1192.6" cy="589.8" r="2.3"/><circle cx="1197.0" cy="608.0" r="2.3"/><circle cx="1201.3" cy="603.6" r="2.3"/><circle cx="1205.6" cy="614.2" r="2.3"/><circle cx="1210.0" cy="614.9" r="2.3"/><circle cx="1214.3" cy="611.2" r="2.3"/><circle cx="1218.7" cy="595.7" r="2.3"/><circle cx="1223.0" cy="582.6" r="2.3"/><circle cx="1227.3" cy="509.3" r="2.3"/><circle cx="1231.7" cy="367.3" r="2.3"/><circle cx="1236.0" cy="321.8" r="2.3"/><circle cx="1240.3" cy="339.6" r="2.3"/><circle cx="1244.7" cy="598.7" r="2.3"/><circle cx="1249.0" cy="613.7" r="2.3"/><circle cx="1253.4" cy="600.9" r="2.3"/><circle cx="1257.7" cy="613.4" r="2.3"/><circle cx="1262.0" cy="616.7" r="2.3"/><circle cx="1266.4" cy="612.3" r="2.3"/><circle cx="1270.7" cy="603.2" r="2.3"/><circle cx="1275.1" cy="580.3" r="2.3"/><circle cx="1279.4" cy="517.7" r="2.3"/><circle cx="1283.7" cy="409.2" r="2.3"/><circle cx="1288.1" cy="333.8" r="2.3"/><circle cx="1292.4" cy="446.7" r="2.3"/><circle cx="1296.7" cy="589.3" r="2.3"/><circle cx="1301.1" cy="600.3" r="2.3"/><circle cx="1305.4" cy="611.3" r="2.3"/><circle cx="1309.8" cy="604.4" r="2.3"/><circle cx="1314.1" cy="611.5" r="2.3"/><circle cx="1318.4" cy="616.1" r="2.3"/><circle cx="1322.8" cy="611.8" r="2.3"/><circle cx="1327.1" cy="605.4" r="2.3"/><circle cx="1331.5" cy="594.5" r="2.3"/><circle cx="1335.8" cy="533.0" r="2.3"/><circle cx="1340.1" cy="456.0" r="2.3"/><circle cx="1344.5" cy="458.4" r="2.3"/><circle cx="1348.8" cy="546.6" r="2.3"/><circle cx="1353.1" cy="599.7" r="2.3"/><circle cx="1357.5" cy="603.9" r="2.3"/><circle cx="1361.8" cy="606.4" r="2.3"/><circle cx="1366.2" cy="612.3" r="2.3"/><circle cx="1370.5" cy="613.7" r="2.3"/><circle cx="1374.8" cy="605.6" r="2.3"/><circle cx="1379.2" cy="600.7" r="2.3"/><circle cx="1383.5" cy="595.0" r="2.3"/><circle cx="1387.9" cy="452.4" r="2.3"/><circle cx="1392.2" cy="363.4" r="2.3"/><circle cx="1396.5" cy="352.2" r="2.3"/><circle cx="1400.9" cy="509.3" r="2.3"/><circle cx="1405.2" cy="599.9" r="2.3"/><circle cx="1409.5" cy="613.2" r="2.3"/><circle cx="1413.9" cy="608.4" r="2.3"/><circle cx="1418.2" cy="613.8" r="2.3"/><circle cx="1422.6" cy="618.2" r="2.3"/><circle cx="1426.9" cy="613.2" r="2.3"/><circle cx="1431.2" cy="598.7" r="2.3"/><circle cx="1435.6" cy="576.7" r="2.3"/><circle cx="1439.9" cy="446.0" r="2.3"/><circle cx="1444.2" cy="386.6" r="2.3"/><circle cx="1448.6" cy="353.2" r="2.3"/><circle cx="1452.9" cy="492.3" r="2.3"/><circle cx="1457.3" cy="592.4" r="2.3"/><circle cx="1461.6" cy="609.5" r="2.3"/><circle cx="1465.9" cy="607.5" r="2.3"/><circle cx="1470.3" cy="609.0" r="2.3"/><circle cx="1474.6" cy="617.3" r="2.3"/><circle cx="1479.0" cy="612.3" r="2.3"/><circle cx="1483.3" cy="607.1" r="2.3"/><circle cx="1487.6" cy="591.7" r="2.3"/><circle cx="1492.0" cy="551.7" r="2.3"/><circle cx="1496.3" cy="488.9" r="2.3"/><circle cx="1500.6" cy="495.7" r="2.3"/><circle cx="1505.0" cy="560.1" r="2.3"/><circle cx="1509.3" cy="589.4" r="2.3"/><circle cx="1513.7" cy="612.8" r="2.3"/><circle cx="1518.0" cy="606.3" r="2.3"/><circle cx="1522.3" cy="607.8" r="2.3"/><circle cx="1526.7" cy="614.0" r="2.3"/><circle cx="1531.0" cy="613.6" r="2.3"/><circle cx="1535.4" cy="603.7" r="2.3"/><circle cx="1539.7" cy="592.4" r="2.3"/><circle cx="1544.0" cy="446.1" r="2.3"/><circle cx="1548.4" cy="388.5" r="2.3"/><circle cx="1552.7" cy="346.6" r="2.3"/><circle cx="1557.0" cy="499.1" r="2.3"/><circle cx="1561.4" cy="597.1" r="2.3"/><circle cx="1565.7" cy="609.2" r="2.3"/><circle cx="1570.1" cy="600.6" r="2.3"/><circle cx="1574.4" cy="605.4" r="2.3"/><circle cx="1578.7" cy="613.9" r="2.3"/><circle cx="1583.1" cy="615.6" r="2.3"/><circle cx="1587.4" cy="607.6" r="2.3"/><circle cx="1591.8" cy="581.0" r="2.3"/><circle cx="1596.1" cy="543.2" r="2.3"/><circle cx="1600.4" cy="476.2" r="2.3"/><circle cx="1604.8" cy="479.6" r="2.3"/><circle cx="1609.1" cy="528.9" r="2.3"/><circle cx="1613.4" cy="590.4" r="2.3"/><circle cx="1617.8" cy="599.6" r="2.3"/><circle cx="1622.1" cy="608.8" r="2.3"/><circle cx="1626.5" cy="605.3" r="2.3"/><circle cx="1630.8" cy="614.8" r="2.3"/><circle cx="1635.1" cy="617.2" r="2.3"/><circle cx="1639.5" cy="606.4" r="2.3"/><circle cx="1643.8" cy="594.5" r="2.3"/><circle cx="1648.2" cy="577.4" r="2.3"/><circle cx="1652.5" cy="450.4" r="2.3"/><circle cx="1656.8" cy="374.2" r="2.3"/><circle cx="1661.2" cy="341.3" r="2.3"/><circle cx="1665.5" cy="495.7" r="2.3"/><circle cx="1669.8" cy="589.4" r="2.3"/><circle cx="1674.2" cy="611.4" r="2.3"/><circle cx="1678.5" cy="611.3" r="2.3"/><circle cx="1682.9" cy="613.1" r="2.3"/><circle cx="1687.2" cy="616.3" r="2.3"/><circle cx="1691.5" cy="608.8" r="2.3"/><circle cx="1695.9" cy="592.6" r="2.3"/><circle cx="1700.2" cy="580.7" r="2.3"/><circle cx="1704.6" cy="509.3" r="2.3"/><circle cx="1708.9" cy="431.2" r="2.3"/></g>
<g fill="#fff" stroke="#AA6556" stroke-width="1.4"><circle cx="1092.8" cy="625.7" r="2.3"/><circle cx="1097.2" cy="626.9" r="2.3"/><circle cx="1101.5" cy="627.7" r="2.3"/><circle cx="1105.9" cy="627.8" r="2.3"/><circle cx="1110.2" cy="627.8" r="2.3"/><circle cx="1114.5" cy="627.1" r="2.3"/><circle cx="1118.9" cy="619.1" r="2.3"/><circle cx="1123.2" cy="555.1" r="2.3"/><circle cx="1127.5" cy="431.2" r="2.3"/><circle cx="1131.9" cy="559.4" r="2.3"/><circle cx="1136.2" cy="608.3" r="2.3"/><circle cx="1140.6" cy="622.6" r="2.3"/><circle cx="1144.9" cy="626.5" r="2.3"/><circle cx="1149.2" cy="627.2" r="2.3"/><circle cx="1153.6" cy="627.7" r="2.3"/><circle cx="1157.9" cy="627.9" r="2.3"/><circle cx="1162.3" cy="627.9" r="2.3"/><circle cx="1166.6" cy="627.4" r="2.3"/><circle cx="1170.9" cy="620.5" r="2.3"/><circle cx="1175.3" cy="583.3" r="2.3"/><circle cx="1179.6" cy="494.0" r="2.3"/><circle cx="1183.9" cy="584.1" r="2.3"/><circle cx="1188.3" cy="613.2" r="2.3"/><circle cx="1192.6" cy="623.5" r="2.3"/><circle cx="1197.0" cy="626.7" r="2.3"/><circle cx="1201.3" cy="627.4" r="2.3"/><circle cx="1205.6" cy="627.8" r="2.3"/><circle cx="1210.0" cy="627.9" r="2.3"/><circle cx="1214.3" cy="627.9" r="2.3"/><circle cx="1218.7" cy="627.6" r="2.3"/><circle cx="1223.0" cy="622.3" r="2.3"/><circle cx="1227.3" cy="593.2" r="2.3"/><circle cx="1231.7" cy="522.8" r="2.3"/><circle cx="1236.0" cy="463.8" r="2.3"/><circle cx="1240.3" cy="618.2" r="2.3"/><circle cx="1244.7" cy="624.9" r="2.3"/><circle cx="1249.0" cy="625.3" r="2.3"/><circle cx="1253.4" cy="626.6" r="2.3"/><circle cx="1257.7" cy="627.6" r="2.3"/><circle cx="1262.0" cy="627.8" r="2.3"/><circle cx="1266.4" cy="627.8" r="2.3"/><circle cx="1270.7" cy="627.2" r="2.3"/><circle cx="1275.1" cy="617.7" r="2.3"/><circle cx="1279.4" cy="558.8" r="2.3"/><circle cx="1283.7" cy="416.6" r="2.3"/><circle cx="1288.1" cy="556.5" r="2.3"/><circle cx="1292.4" cy="605.7" r="2.3"/><circle cx="1296.7" cy="621.1" r="2.3"/><circle cx="1301.1" cy="624.1" r="2.3"/><circle cx="1305.4" cy="627.2" r="2.3"/><circle cx="1309.8" cy="627.5" r="2.3"/><circle cx="1314.1" cy="627.8" r="2.3"/><circle cx="1318.4" cy="627.9" r="2.3"/><circle cx="1322.8" cy="627.9" r="2.3"/><circle cx="1327.1" cy="627.7" r="2.3"/><circle cx="1331.5" cy="624.0" r="2.3"/><circle cx="1335.8" cy="599.6" r="2.3"/><circle cx="1340.1" cy="550.0" r="2.3"/><circle cx="1344.5" cy="599.1" r="2.3"/><circle cx="1348.8" cy="620.6" r="2.3"/><circle cx="1353.1" cy="625.7" r="2.3"/><circle cx="1357.5" cy="625.6" r="2.3"/><circle cx="1361.8" cy="626.9" r="2.3"/><circle cx="1366.2" cy="627.6" r="2.3"/><circle cx="1370.5" cy="627.8" r="2.3"/><circle cx="1374.8" cy="627.8" r="2.3"/><circle cx="1379.2" cy="627.3" r="2.3"/><circle cx="1383.5" cy="618.0" r="2.3"/><circle cx="1387.9" cy="558.4" r="2.3"/><circle cx="1392.2" cy="434.1" r="2.3"/><circle cx="1396.5" cy="562.6" r="2.3"/><circle cx="1400.9" cy="607.4" r="2.3"/><circle cx="1405.2" cy="621.8" r="2.3"/><circle cx="1409.5" cy="626.1" r="2.3"/><circle cx="1413.9" cy="627.1" r="2.3"/><circle cx="1418.2" cy="627.7" r="2.3"/><circle cx="1422.6" cy="627.9" r="2.3"/><circle cx="1426.9" cy="627.9" r="2.3"/><circle cx="1431.2" cy="627.4" r="2.3"/><circle cx="1435.6" cy="620.7" r="2.3"/><circle cx="1439.9" cy="570.8" r="2.3"/><circle cx="1444.2" cy="466.8" r="2.3"/><circle cx="1448.6" cy="569.8" r="2.3"/><circle cx="1452.9" cy="613.7" r="2.3"/><circle cx="1457.3" cy="623.0" r="2.3"/><circle cx="1461.6" cy="627.3" r="2.3"/><circle cx="1465.9" cy="627.6" r="2.3"/><circle cx="1470.3" cy="627.9" r="2.3"/><circle cx="1474.6" cy="627.9" r="2.3"/><circle cx="1479.0" cy="627.9" r="2.3"/><circle cx="1483.3" cy="627.7" r="2.3"/><circle cx="1487.6" cy="625.0" r="2.3"/><circle cx="1492.0" cy="603.0" r="2.3"/><circle cx="1496.3" cy="565.2" r="2.3"/><circle cx="1500.6" cy="607.4" r="2.3"/><circle cx="1505.0" cy="621.2" r="2.3"/><circle cx="1509.3" cy="625.9" r="2.3"/><circle cx="1513.7" cy="625.5" r="2.3"/><circle cx="1518.0" cy="626.7" r="2.3"/><circle cx="1522.3" cy="627.6" r="2.3"/><circle cx="1526.7" cy="627.8" r="2.3"/><circle cx="1531.0" cy="627.8" r="2.3"/><circle cx="1535.4" cy="627.1" r="2.3"/><circle cx="1539.7" cy="617.1" r="2.3"/><circle cx="1544.0" cy="562.4" r="2.3"/><circle cx="1548.4" cy="429.9" r="2.3"/><circle cx="1552.7" cy="551.7" r="2.3"/><circle cx="1557.0" cy="606.1" r="2.3"/><circle cx="1561.4" cy="622.7" r="2.3"/><circle cx="1565.7" cy="626.6" r="2.3"/><circle cx="1570.1" cy="627.2" r="2.3"/><circle cx="1574.4" cy="627.8" r="2.3"/><circle cx="1578.7" cy="627.9" r="2.3"/><circle cx="1583.1" cy="627.9" r="2.3"/><circle cx="1587.4" cy="627.5" r="2.3"/><circle cx="1591.8" cy="622.6" r="2.3"/><circle cx="1596.1" cy="585.2" r="2.3"/><circle cx="1600.4" cy="509.3" r="2.3"/><circle cx="1604.8" cy="580.9" r="2.3"/><circle cx="1609.1" cy="617.0" r="2.3"/><circle cx="1613.4" cy="624.6" r="2.3"/><circle cx="1617.8" cy="625.3" r="2.3"/><circle cx="1622.1" cy="626.0" r="2.3"/><circle cx="1626.5" cy="627.0" r="2.3"/><circle cx="1630.8" cy="627.7" r="2.3"/><circle cx="1635.1" cy="627.8" r="2.3"/><circle cx="1639.5" cy="627.8" r="2.3"/><circle cx="1643.8" cy="627.3" r="2.3"/><circle cx="1648.2" cy="619.2" r="2.3"/><circle cx="1652.5" cy="561.7" r="2.3"/><circle cx="1656.8" cy="459.9" r="2.3"/><circle cx="1661.2" cy="572.3" r="2.3"/><circle cx="1665.5" cy="610.0" r="2.3"/><circle cx="1669.8" cy="623.4" r="2.3"/><circle cx="1674.2" cy="626.8" r="2.3"/><circle cx="1678.5" cy="627.4" r="2.3"/><circle cx="1682.9" cy="627.8" r="2.3"/><circle cx="1687.2" cy="627.9" r="2.3"/><circle cx="1691.5" cy="627.9" r="2.3"/><circle cx="1695.9" cy="627.6" r="2.3"/><circle cx="1700.2" cy="622.8" r="2.3"/><circle cx="1704.6" cy="596.8" r="2.3"/><circle cx="1708.9" cy="532.2" r="2.3"/></g>
<g fill="#fff" stroke="#E7664C" stroke-width="1.4"><circle cx="1092.8" cy="626.0" r="2.3"/><circle cx="1097.2" cy="627.1" r="2.3"/><circle cx="1101.5" cy="627.7" r="2.3"/><circle cx="1105.9" cy="627.8" r="2.3"/><circle cx="1110.2" cy="627.9" r="2.3"/><circle cx="1114.5" cy="627.3" r="2.3"/><circle cx="1118.9" cy="620.3" r="2.3"/><circle cx="1123.2" cy="575.5" r="2.3"/><circle cx="1127.5" cy="477.0" r="2.3"/><circle cx="1131.9" cy="570.2" r="2.3"/><circle cx="1136.2" cy="613.1" r="2.3"/><circle cx="1140.6" cy="623.8" r="2.3"/><circle cx="1144.9" cy="626.8" r="2.3"/><circle cx="1149.2" cy="627.5" r="2.3"/><circle cx="1153.6" cy="627.8" r="2.3"/><circle cx="1157.9" cy="627.9" r="2.3"/><circle cx="1162.3" cy="627.9" r="2.3"/><circle cx="1166.6" cy="627.6" r="2.3"/><circle cx="1170.9" cy="623.1" r="2.3"/><circle cx="1175.3" cy="591.8" r="2.3"/><circle cx="1179.6" cy="531.3" r="2.3"/><circle cx="1183.9" cy="594.8" r="2.3"/><circle cx="1188.3" cy="619.5" r="2.3"/><circle cx="1192.6" cy="625.4" r="2.3"/><circle cx="1197.0" cy="626.9" r="2.3"/><circle cx="1201.3" cy="627.4" r="2.3"/><circle cx="1205.6" cy="627.8" r="2.3"/><circle cx="1210.0" cy="627.9" r="2.3"/><circle cx="1214.3" cy="627.9" r="2.3"/><circle cx="1218.7" cy="627.6" r="2.3"/><circle cx="1223.0" cy="623.5" r="2.3"/><circle cx="1227.3" cy="591.9" r="2.3"/><circle cx="1231.7" cy="531.3" r="2.3"/><circle cx="1236.0" cy="597.2" r="2.3"/><circle cx="1240.3" cy="619.5" r="2.3"/><circle cx="1244.7" cy="625.2" r="2.3"/><circle cx="1249.0" cy="626.2" r="2.3"/><circle cx="1253.4" cy="627.0" r="2.3"/><circle cx="1257.7" cy="627.7" r="2.3"/><circle cx="1262.0" cy="627.8" r="2.3"/><circle cx="1266.4" cy="627.8" r="2.3"/><circle cx="1270.7" cy="627.4" r="2.3"/><circle cx="1275.1" cy="619.5" r="2.3"/><circle cx="1279.4" cy="569.1" r="2.3"/><circle cx="1283.7" cy="463.4" r="2.3"/><circle cx="1288.1" cy="574.0" r="2.3"/><circle cx="1292.4" cy="609.8" r="2.3"/><circle cx="1296.7" cy="623.4" r="2.3"/><circle cx="1301.1" cy="625.4" r="2.3"/><circle cx="1305.4" cy="627.3" r="2.3"/><circle cx="1309.8" cy="627.7" r="2.3"/><circle cx="1314.1" cy="627.9" r="2.3"/><circle cx="1318.4" cy="627.9" r="2.3"/><circle cx="1322.8" cy="627.9" r="2.3"/><circle cx="1327.1" cy="627.8" r="2.3"/><circle cx="1331.5" cy="625.2" r="2.3"/><circle cx="1335.8" cy="609.1" r="2.3"/><circle cx="1340.1" cy="568.6" r="2.3"/><circle cx="1344.5" cy="605.9" r="2.3"/><circle cx="1348.8" cy="622.0" r="2.3"/><circle cx="1353.1" cy="626.3" r="2.3"/><circle cx="1357.5" cy="626.6" r="2.3"/><circle cx="1361.8" cy="627.3" r="2.3"/><circle cx="1366.2" cy="627.8" r="2.3"/><circle cx="1370.5" cy="627.9" r="2.3"/><circle cx="1374.8" cy="627.9" r="2.3"/><circle cx="1379.2" cy="627.5" r="2.3"/><circle cx="1383.5" cy="623.0" r="2.3"/><circle cx="1387.9" cy="587.4" r="2.3"/><circle cx="1392.2" cy="516.0" r="2.3"/><circle cx="1396.5" cy="588.6" r="2.3"/><circle cx="1400.9" cy="617.5" r="2.3"/><circle cx="1405.2" cy="625.0" r="2.3"/><circle cx="1409.5" cy="626.8" r="2.3"/><circle cx="1413.9" cy="627.5" r="2.3"/><circle cx="1418.2" cy="627.8" r="2.3"/><circle cx="1422.6" cy="627.9" r="2.3"/><circle cx="1426.9" cy="627.9" r="2.3"/><circle cx="1431.2" cy="627.7" r="2.3"/><circle cx="1435.6" cy="623.2" r="2.3"/><circle cx="1439.9" cy="594.4" r="2.3"/><circle cx="1444.2" cy="534.7" r="2.3"/><circle cx="1448.6" cy="593.3" r="2.3"/><circle cx="1452.9" cy="618.0" r="2.3"/><circle cx="1457.3" cy="625.4" r="2.3"/><circle cx="1461.6" cy="627.1" r="2.3"/><circle cx="1465.9" cy="627.6" r="2.3"/><circle cx="1470.3" cy="627.9" r="2.3"/><circle cx="1474.6" cy="627.9" r="2.3"/><circle cx="1479.0" cy="627.9" r="2.3"/><circle cx="1483.3" cy="627.7" r="2.3"/><circle cx="1487.6" cy="624.6" r="2.3"/><circle cx="1492.0" cy="597.6" r="2.3"/><circle cx="1496.3" cy="550.0" r="2.3"/><circle cx="1500.6" cy="598.3" r="2.3"/><circle cx="1505.0" cy="620.3" r="2.3"/><circle cx="1509.3" cy="625.5" r="2.3"/><circle cx="1513.7" cy="626.2" r="2.3"/><circle cx="1518.0" cy="627.1" r="2.3"/><circle cx="1522.3" cy="627.7" r="2.3"/><circle cx="1526.7" cy="627.9" r="2.3"/><circle cx="1531.0" cy="627.9" r="2.3"/><circle cx="1535.4" cy="627.4" r="2.3"/><circle cx="1539.7" cy="619.9" r="2.3"/><circle cx="1544.0" cy="570.5" r="2.3"/><circle cx="1548.4" cy="475.3" r="2.3"/><circle cx="1552.7" cy="568.5" r="2.3"/><circle cx="1557.0" cy="612.0" r="2.3"/><circle cx="1561.4" cy="623.7" r="2.3"/><circle cx="1565.7" cy="626.8" r="2.3"/><circle cx="1570.1" cy="627.4" r="2.3"/><circle cx="1574.4" cy="627.8" r="2.3"/><circle cx="1578.7" cy="627.9" r="2.3"/><circle cx="1583.1" cy="627.9" r="2.3"/><circle cx="1587.4" cy="627.6" r="2.3"/><circle cx="1591.8" cy="622.7" r="2.3"/><circle cx="1596.1" cy="596.1" r="2.3"/><circle cx="1600.4" cy="533.0" r="2.3"/><circle cx="1604.8" cy="590.7" r="2.3"/><circle cx="1609.1" cy="619.6" r="2.3"/><circle cx="1613.4" cy="625.3" r="2.3"/><circle cx="1617.8" cy="625.8" r="2.3"/><circle cx="1622.1" cy="626.3" r="2.3"/><circle cx="1626.5" cy="627.0" r="2.3"/><circle cx="1630.8" cy="627.7" r="2.3"/><circle cx="1635.1" cy="627.8" r="2.3"/><circle cx="1639.5" cy="627.9" r="2.3"/><circle cx="1643.8" cy="627.3" r="2.3"/><circle cx="1648.2" cy="620.7" r="2.3"/><circle cx="1652.5" cy="576.5" r="2.3"/><circle cx="1656.8" cy="475.3" r="2.3"/><circle cx="1661.2" cy="567.7" r="2.3"/><circle cx="1665.5" cy="612.3" r="2.3"/><circle cx="1669.8" cy="623.2" r="2.3"/><circle cx="1674.2" cy="627.0" r="2.3"/><circle cx="1678.5" cy="627.5" r="2.3"/><circle cx="1682.9" cy="627.8" r="2.3"/><circle cx="1687.2" cy="627.9" r="2.3"/><circle cx="1691.5" cy="627.9" r="2.3"/><circle cx="1695.9" cy="627.6" r="2.3"/><circle cx="1700.2" cy="624.0" r="2.3"/><circle cx="1704.6" cy="597.1" r="2.3"/><circle cx="1708.9" cy="546.6" r="2.3"/></g>
<g fill="#fff" stroke="#A5DACB" stroke-width="1.4"><circle cx="1379.2" cy="599.2" r="2.3"/><circle cx="1383.5" cy="579.8" r="2.3"/><circle cx="1387.9" cy="532.7" r="2.3"/><circle cx="1431.2" cy="626.3" r="2.3"/><circle cx="1435.6" cy="595.4" r="2.3"/><circle cx="1439.9" cy="545.2" r="2.3"/><circle cx="1444.2" cy="517.7" r="2.3"/><circle cx="1448.6" cy="530.5" r="2.3"/><circle cx="1452.9" cy="619.7" r="2.3"/><circle cx="1457.3" cy="624.6" r="2.3"/><circle cx="1461.6" cy="626.6" r="2.3"/><circle cx="1465.9" cy="627.2" r="2.3"/><circle cx="1470.3" cy="627.3" r="2.3"/><circle cx="1474.6" cy="627.5" r="2.3"/><circle cx="1479.0" cy="627.5" r="2.3"/><circle cx="1483.3" cy="627.2" r="2.3"/><circle cx="1487.6" cy="615.3" r="2.3"/><circle cx="1492.0" cy="564.0" r="2.3"/><circle cx="1496.3" cy="529.4" r="2.3"/><circle cx="1500.6" cy="572.9" r="2.3"/><circle cx="1505.0" cy="602.6" r="2.3"/><circle cx="1509.3" cy="621.2" r="2.3"/><circle cx="1513.7" cy="627.0" r="2.3"/><circle cx="1518.0" cy="627.3" r="2.3"/><circle cx="1522.3" cy="627.5" r="2.3"/><circle cx="1526.7" cy="627.5" r="2.3"/><circle cx="1531.0" cy="627.5" r="2.3"/><circle cx="1535.4" cy="627.3" r="2.3"/><circle cx="1539.7" cy="622.9" r="2.3"/><circle cx="1544.0" cy="588.0" r="2.3"/><circle cx="1548.4" cy="528.9" r="2.3"/><circle cx="1552.7" cy="518.9" r="2.3"/><circle cx="1557.0" cy="566.6" r="2.3"/><circle cx="1561.4" cy="600.5" r="2.3"/><circle cx="1565.7" cy="618.7" r="2.3"/></g>
</svg>
</body></html>
